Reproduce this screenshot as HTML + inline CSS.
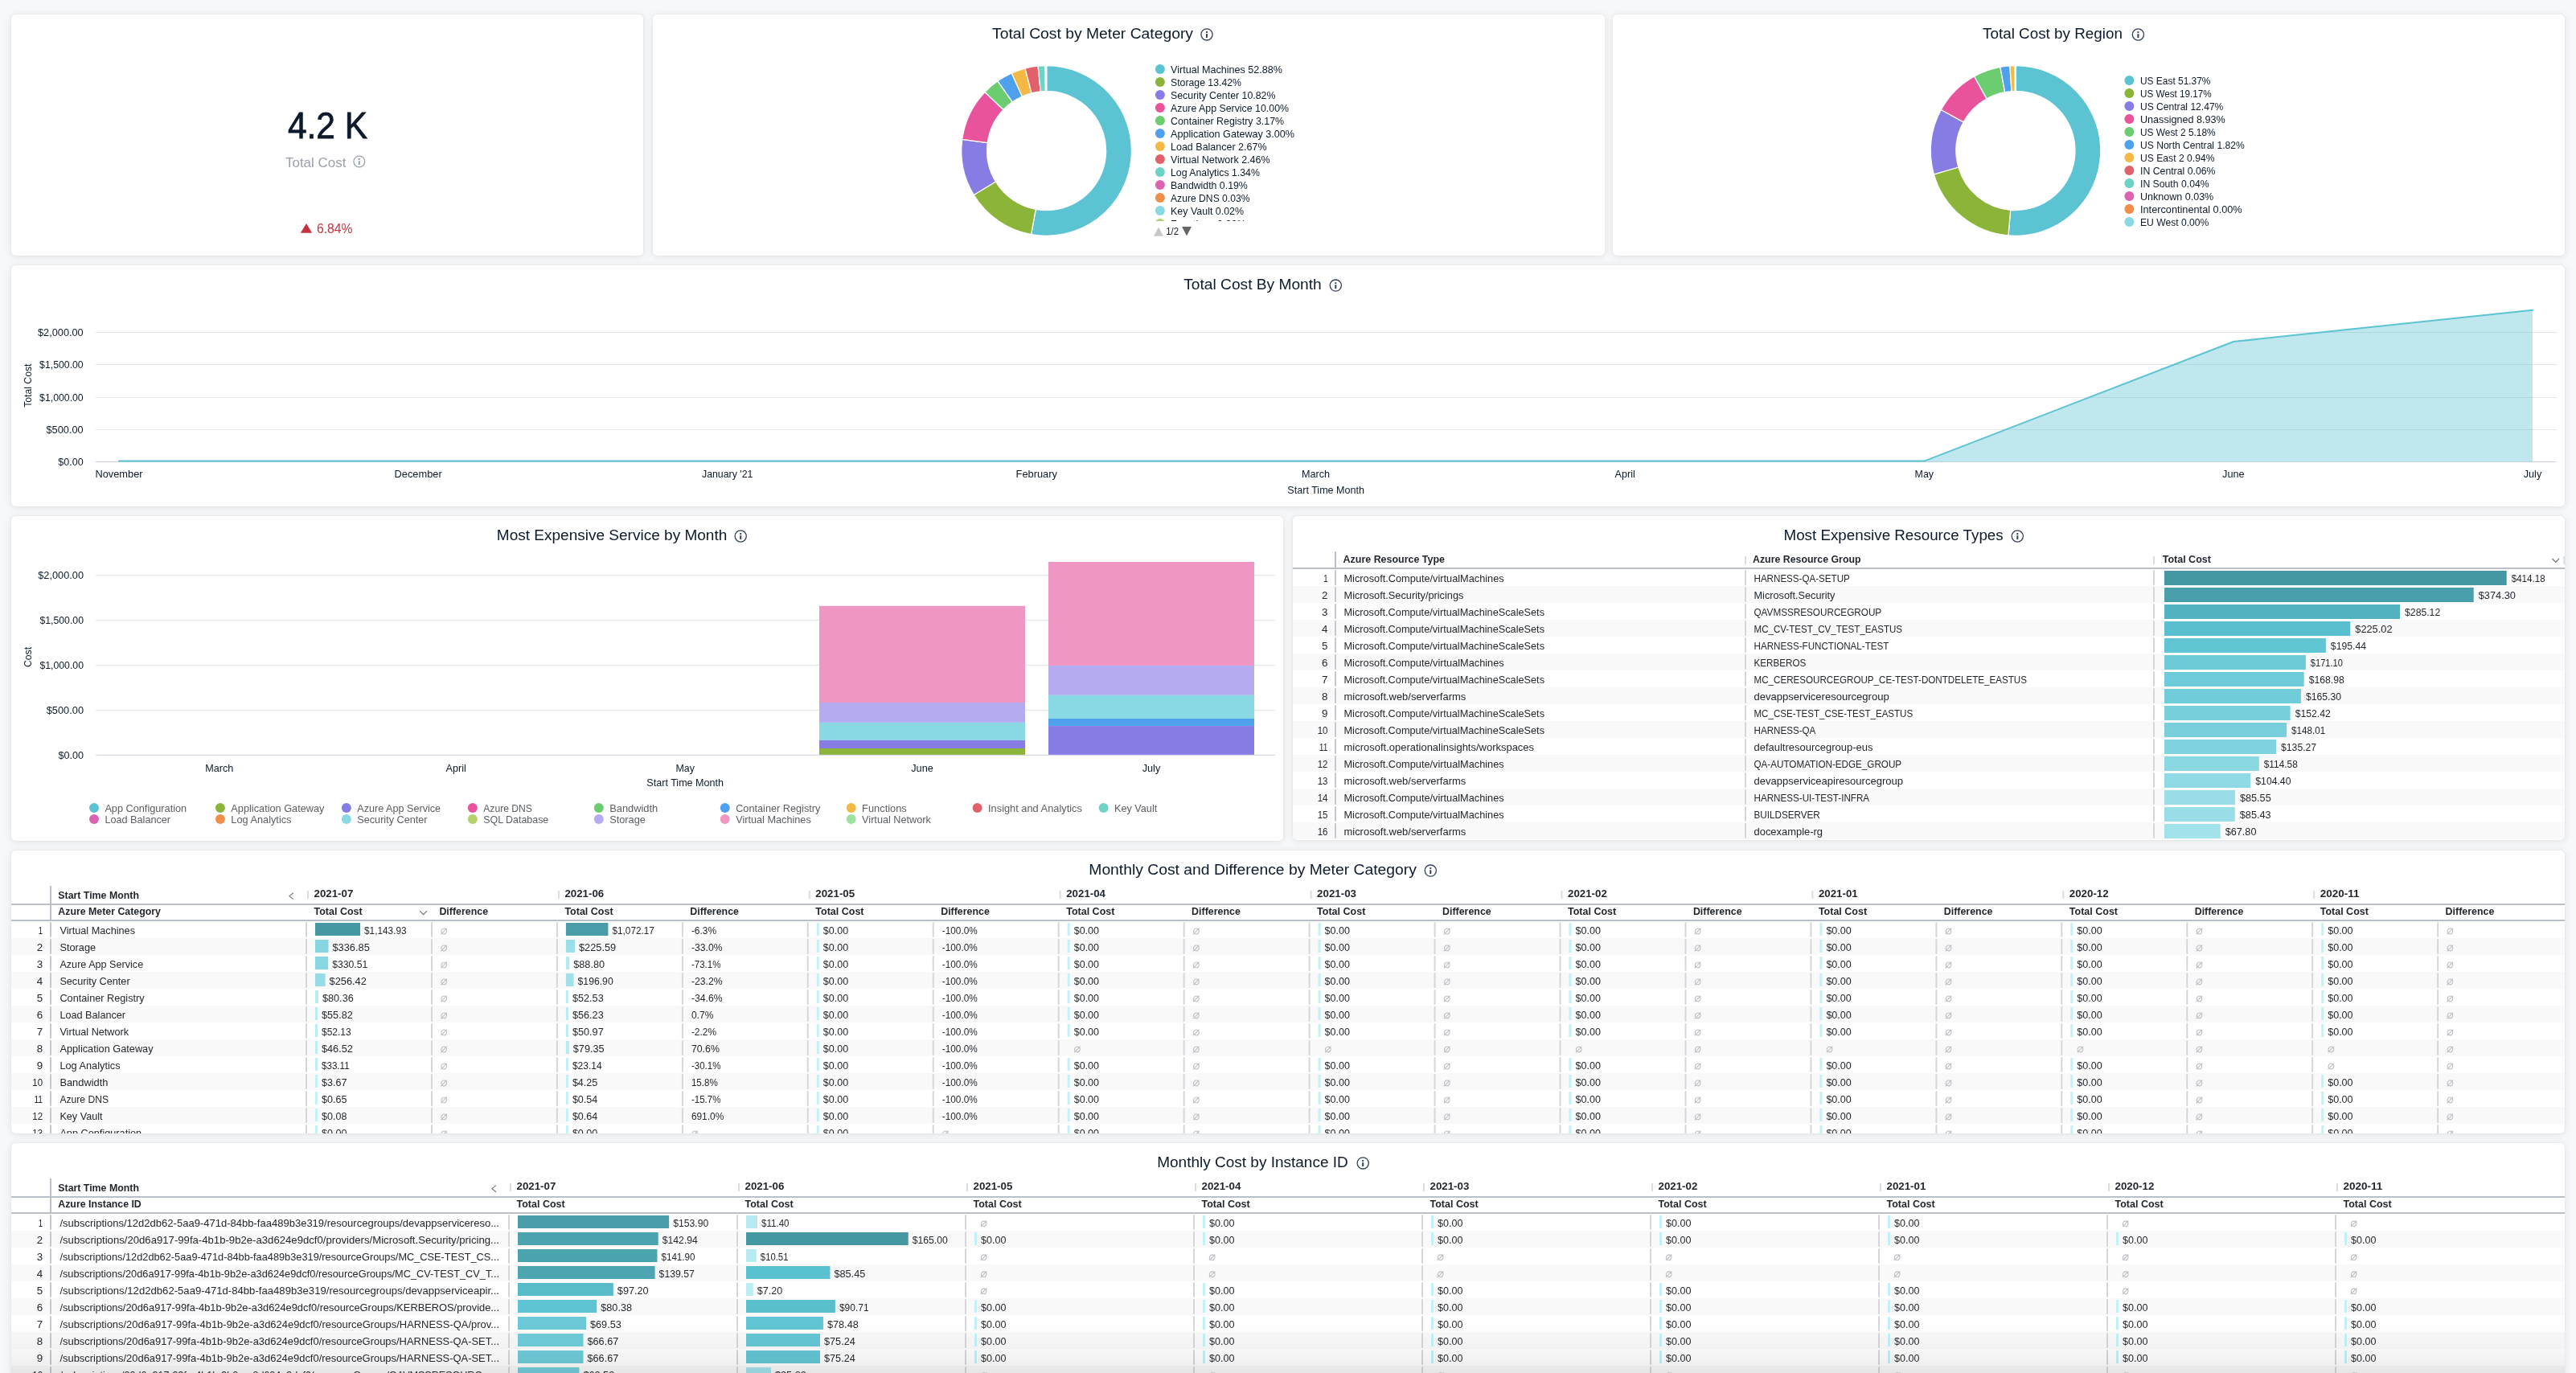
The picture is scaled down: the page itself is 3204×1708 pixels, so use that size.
<!DOCTYPE html><html><head><meta charset="utf-8"><style>html,body{margin:0;padding:0;}body{width:3204px;height:1708px;overflow:hidden;background:#f7f8fa;position:relative;font-family:"Liberation Sans", sans-serif;}.c{position:absolute;background:#fff;border-radius:5px;overflow:hidden;box-shadow:0 0 1px rgba(20,30,45,0.16),0 1px 10px rgba(25,35,50,0.11);}.c svg{position:absolute;left:0;top:0;will-change:transform;}text{font-family:"Liberation Sans", sans-serif;}</style></head><body><div class="c" style="left:14px;top:18px;width:786px;height:300px"><svg width="786" height="300" viewBox="14 18 786 300"><text x="357.90" y="172.20" font-size="45.5" fill="#0d1a2b" textLength="99.2" lengthAdjust="spacingAndGlyphs" stroke="#0d1a2b" stroke-width="0.8">4.2 K</text><text x="355.00" y="207.50" font-size="16.2" fill="#9aa1ab" textLength="75.4" lengthAdjust="spacingAndGlyphs">Total Cost</text><circle cx="446.80" cy="201.00" r="6.9" stroke="#9aa1ab" stroke-width="1.3" fill="none"/><rect x="445.80" y="197.10" width="2" height="1.9" fill="#9aa1ab"/><rect x="445.80" y="200.20" width="2" height="4.8" fill="#9aa1ab"/><path d="M373.8,289.7 L388.2,289.7 L381,278 Z" fill="#c3343f"/><text x="394.00" y="289.70" font-size="16" fill="#c3343f" textLength="44.6" lengthAdjust="spacingAndGlyphs">6.84%</text></svg></div><div class="c" style="left:812px;top:18px;width:1184px;height:300px"><svg width="1184" height="300" viewBox="812 18 1184 300"><text x="1234.00" y="48.00" font-size="18.3" fill="#0d1a2b" textLength="250" lengthAdjust="spacingAndGlyphs">Total Cost by Meter Category</text><circle cx="1501.00" cy="42.90" r="7.1" stroke="#344056" stroke-width="1.3" fill="none"/><rect x="1500.00" y="39.00" width="2" height="1.9" fill="#344056"/><rect x="1500.00" y="42.10" width="2" height="4.8" fill="#344056"/><path d="M1301.60,81.70 A105.8,105.8 0 1 1 1282.56,291.57 L1288.28,260.29 A74.0,74.0 0 1 0 1301.60,113.50 Z" fill="#5bc3d2" stroke="#fff" stroke-width="1.3" stroke-linejoin="bevel"/><path d="M1282.56,291.57 A105.8,105.8 0 0 1 1211.22,242.50 L1238.38,225.97 A74.0,74.0 0 0 0 1288.28,260.29 Z" fill="#8bb438" stroke="#fff" stroke-width="1.3" stroke-linejoin="bevel"/><path d="M1211.22,242.50 A105.8,105.8 0 0 1 1196.74,173.45 L1228.26,177.67 A74.0,74.0 0 0 0 1238.38,225.97 Z" fill="#877be4" stroke="#fff" stroke-width="1.3" stroke-linejoin="bevel"/><path d="M1196.74,173.45 A105.8,105.8 0 0 1 1225.02,114.50 L1248.04,136.44 A74.0,74.0 0 0 0 1228.26,177.67 Z" fill="#e8539b" stroke="#fff" stroke-width="1.3" stroke-linejoin="bevel"/><path d="M1225.02,114.50 A105.8,105.8 0 0 1 1240.98,100.79 L1259.20,126.85 A74.0,74.0 0 0 0 1248.04,136.44 Z" fill="#6bcc70" stroke="#fff" stroke-width="1.3" stroke-linejoin="bevel"/><path d="M1240.98,100.79 A105.8,105.8 0 0 1 1258.30,90.96 L1271.32,119.98 A74.0,74.0 0 0 0 1259.20,126.85 Z" fill="#4fa1ee" stroke="#fff" stroke-width="1.3" stroke-linejoin="bevel"/><path d="M1258.30,90.96 A105.8,105.8 0 0 1 1275.03,85.09 L1283.02,115.87 A74.0,74.0 0 0 0 1271.32,119.98 Z" fill="#f4b944" stroke="#fff" stroke-width="1.3" stroke-linejoin="bevel"/><path d="M1275.03,85.09 A105.8,105.8 0 0 1 1291.11,82.22 L1294.27,113.86 A74.0,74.0 0 0 0 1283.02,115.87 Z" fill="#e0616a" stroke="#fff" stroke-width="1.3" stroke-linejoin="bevel"/><path d="M1291.11,82.22 A105.8,105.8 0 0 1 1300.00,81.71 L1300.48,113.51 A74.0,74.0 0 0 0 1294.27,113.86 Z" fill="#6cd3c5" stroke="#fff" stroke-width="1.3" stroke-linejoin="bevel"/><path d="M1300.00,81.71 A105.8,105.8 0 0 1 1301.27,81.70 L1301.37,113.50 A74.0,74.0 0 0 0 1300.48,113.51 Z" fill="#da64b1" stroke="#fff" stroke-width="1.3" stroke-linejoin="bevel"/><path d="M1301.27,81.70 A105.8,105.8 0 0 1 1301.47,81.70 L1301.51,113.50 A74.0,74.0 0 0 0 1301.37,113.50 Z" fill="#f08e4a" stroke="#fff" stroke-width="1.3" stroke-linejoin="bevel"/><path d="M1301.47,81.70 A105.8,105.8 0 0 1 1301.60,81.70 L1301.60,113.50 A74.0,74.0 0 0 0 1301.51,113.50 Z" fill="#89d9e4" stroke="#fff" stroke-width="1.3" stroke-linejoin="bevel"/><defs><clipPath id="lg2"><rect x="1420" y="60" width="400" height="215"/></clipPath></defs><g clip-path="url(#lg2)"><circle cx="1442.9" cy="86" r="6" fill="#5bc3d2"/><text x="1456.00" y="90.80" font-size="12.4" fill="#0d1a2b" textLength="138.92" lengthAdjust="spacingAndGlyphs">Virtual Machines 52.88%</text><circle cx="1442.9" cy="102" r="6" fill="#8bb438"/><text x="1456.00" y="106.80" font-size="12.4" fill="#0d1a2b" textLength="87.98" lengthAdjust="spacingAndGlyphs">Storage 13.42%</text><circle cx="1442.9" cy="118" r="6" fill="#877be4"/><text x="1456.00" y="122.80" font-size="12.4" fill="#0d1a2b" textLength="130.45" lengthAdjust="spacingAndGlyphs">Security Center 10.82%</text><circle cx="1442.9" cy="134" r="6" fill="#e8539b"/><text x="1456.00" y="138.80" font-size="12.4" fill="#0d1a2b" textLength="147.0" lengthAdjust="spacingAndGlyphs">Azure App Service 10.00%</text><circle cx="1442.9" cy="150" r="6" fill="#6bcc70"/><text x="1456.00" y="154.80" font-size="12.4" fill="#0d1a2b" textLength="141.05" lengthAdjust="spacingAndGlyphs">Container Registry 3.17%</text><circle cx="1442.9" cy="166" r="6" fill="#4fa1ee"/><text x="1456.00" y="170.80" font-size="12.4" fill="#0d1a2b" textLength="154.05" lengthAdjust="spacingAndGlyphs">Application Gateway 3.00%</text><circle cx="1442.9" cy="182" r="6" fill="#f4b944"/><text x="1456.00" y="186.80" font-size="12.4" fill="#0d1a2b" textLength="119.57" lengthAdjust="spacingAndGlyphs">Load Balancer 2.67%</text><circle cx="1442.9" cy="198" r="6" fill="#e0616a"/><text x="1456.00" y="202.80" font-size="12.4" fill="#0d1a2b" textLength="123.65" lengthAdjust="spacingAndGlyphs">Virtual Network 2.46%</text><circle cx="1442.9" cy="214" r="6" fill="#6cd3c5"/><text x="1456.00" y="218.80" font-size="12.4" fill="#0d1a2b" textLength="110.93" lengthAdjust="spacingAndGlyphs">Log Analytics 1.34%</text><circle cx="1442.9" cy="230" r="6" fill="#da64b1"/><text x="1456.00" y="234.80" font-size="12.4" fill="#0d1a2b" textLength="95.77" lengthAdjust="spacingAndGlyphs">Bandwidth 0.19%</text><circle cx="1442.9" cy="246" r="6" fill="#f08e4a"/><text x="1456.00" y="250.80" font-size="12.4" fill="#0d1a2b" textLength="98.53" lengthAdjust="spacingAndGlyphs">Azure DNS 0.03%</text><circle cx="1442.9" cy="262" r="6" fill="#89d9e4"/><text x="1456.00" y="266.80" font-size="12.4" fill="#0d1a2b" textLength="91.13" lengthAdjust="spacingAndGlyphs">Key Vault 0.02%</text><circle cx="1442.9" cy="278" r="6" fill="#b4d16d"/><text x="1456.00" y="282.80" font-size="12.4" fill="#0d1a2b" textLength="93.58" lengthAdjust="spacingAndGlyphs">Functions 0.00%</text></g><path d="M1435,293.7 L1446.9,293.7 L1441,282.4 Z" fill="#c8c8c8"/><text x="1450.20" y="291.70" font-size="12.4" fill="#0d1a2b" textLength="15.79" lengthAdjust="spacingAndGlyphs">1/2</text><path d="M1470.1,281.9 L1482,281.9 L1476,293.5 Z" fill="#666666"/></svg></div><div class="c" style="left:2006px;top:18px;width:1184px;height:300px"><svg width="1184" height="300" viewBox="2006 18 1184 300"><text x="2466.10" y="47.80" font-size="18.3" fill="#0d1a2b" textLength="173.8" lengthAdjust="spacingAndGlyphs">Total Cost by Region</text><circle cx="2659.40" cy="43.00" r="7.1" stroke="#344056" stroke-width="1.3" fill="none"/><rect x="2658.40" y="39.10" width="2" height="1.9" fill="#344056"/><rect x="2658.40" y="42.20" width="2" height="4.8" fill="#344056"/><path d="M2507.00,81.70 A105.8,105.8 0 1 1 2497.94,292.91 L2500.66,261.23 A74.0,74.0 0 1 0 2507.00,113.50 Z" fill="#5bc3d2" stroke="#fff" stroke-width="1.3" stroke-linejoin="bevel"/><path d="M2497.94,292.91 A105.8,105.8 0 0 1 2405.34,216.81 L2435.90,208.00 A74.0,74.0 0 0 0 2500.66,261.23 Z" fill="#8bb438" stroke="#fff" stroke-width="1.3" stroke-linejoin="bevel"/><path d="M2405.34,216.81 A105.8,105.8 0 0 1 2414.29,136.52 L2442.16,151.84 A74.0,74.0 0 0 0 2435.90,208.00 Z" fill="#877be4" stroke="#fff" stroke-width="1.3" stroke-linejoin="bevel"/><path d="M2414.29,136.52 A105.8,105.8 0 0 1 2455.63,95.01 L2471.07,122.81 A74.0,74.0 0 0 0 2442.16,151.84 Z" fill="#e8539b" stroke="#fff" stroke-width="1.3" stroke-linejoin="bevel"/><path d="M2455.63,95.01 A105.8,105.8 0 0 1 2487.90,83.44 L2493.64,114.72 A74.0,74.0 0 0 0 2471.07,122.81 Z" fill="#6bcc70" stroke="#fff" stroke-width="1.3" stroke-linejoin="bevel"/><path d="M2487.90,83.44 A105.8,105.8 0 0 1 2499.89,81.94 L2502.03,113.67 A74.0,74.0 0 0 0 2493.64,114.72 Z" fill="#4fa1ee" stroke="#fff" stroke-width="1.3" stroke-linejoin="bevel"/><path d="M2499.89,81.94 A105.8,105.8 0 0 1 2506.14,81.70 L2506.40,113.50 A74.0,74.0 0 0 0 2502.03,113.67 Z" fill="#f4b944" stroke="#fff" stroke-width="1.3" stroke-linejoin="bevel"/><path d="M2506.14,81.70 A105.8,105.8 0 0 1 2506.53,81.70 L2506.67,113.50 A74.0,74.0 0 0 0 2506.40,113.50 Z" fill="#e0616a" stroke="#fff" stroke-width="1.3" stroke-linejoin="bevel"/><path d="M2506.53,81.70 A105.8,105.8 0 0 1 2506.80,81.70 L2506.86,113.50 A74.0,74.0 0 0 0 2506.67,113.50 Z" fill="#6cd3c5" stroke="#fff" stroke-width="1.3" stroke-linejoin="bevel"/><path d="M2506.80,81.70 A105.8,105.8 0 0 1 2507.00,81.70 L2507.00,113.50 A74.0,74.0 0 0 0 2506.86,113.50 Z" fill="#da64b1" stroke="#fff" stroke-width="1.3" stroke-linejoin="bevel"/><circle cx="2648.4" cy="100" r="6" fill="#5bc3d2"/><text x="2662.00" y="104.80" font-size="12.4" fill="#0d1a2b" textLength="87.48" lengthAdjust="spacingAndGlyphs">US East 51.37%</text><circle cx="2648.4" cy="116" r="6" fill="#8bb438"/><text x="2662.00" y="120.80" font-size="12.4" fill="#0d1a2b" textLength="88.6" lengthAdjust="spacingAndGlyphs">US West 19.17%</text><circle cx="2648.4" cy="132" r="6" fill="#877be4"/><text x="2662.00" y="136.80" font-size="12.4" fill="#0d1a2b" textLength="103.35" lengthAdjust="spacingAndGlyphs">US Central 12.47%</text><circle cx="2648.4" cy="148" r="6" fill="#e8539b"/><text x="2662.00" y="152.80" font-size="12.4" fill="#0d1a2b" textLength="105.76" lengthAdjust="spacingAndGlyphs">Unassigned 8.93%</text><circle cx="2648.4" cy="164" r="6" fill="#6bcc70"/><text x="2662.00" y="168.80" font-size="12.4" fill="#0d1a2b" textLength="93.6" lengthAdjust="spacingAndGlyphs">US West 2 5.18%</text><circle cx="2648.4" cy="180" r="6" fill="#4fa1ee"/><text x="2662.00" y="184.80" font-size="12.4" fill="#0d1a2b" textLength="129.69" lengthAdjust="spacingAndGlyphs">US North Central 1.82%</text><circle cx="2648.4" cy="196" r="6" fill="#f4b944"/><text x="2662.00" y="200.80" font-size="12.4" fill="#0d1a2b" textLength="92.47" lengthAdjust="spacingAndGlyphs">US East 2 0.94%</text><circle cx="2648.4" cy="212" r="6" fill="#e0616a"/><text x="2662.00" y="216.80" font-size="12.4" fill="#0d1a2b" textLength="93.48" lengthAdjust="spacingAndGlyphs">IN Central 0.06%</text><circle cx="2648.4" cy="228" r="6" fill="#6cd3c5"/><text x="2662.00" y="232.80" font-size="12.4" fill="#0d1a2b" textLength="85.59" lengthAdjust="spacingAndGlyphs">IN South 0.04%</text><circle cx="2648.4" cy="244" r="6" fill="#da64b1"/><text x="2662.00" y="248.80" font-size="12.4" fill="#0d1a2b" textLength="91.26" lengthAdjust="spacingAndGlyphs">Unknown 0.03%</text><circle cx="2648.4" cy="260" r="6" fill="#f08e4a"/><text x="2662.00" y="264.80" font-size="12.4" fill="#0d1a2b" textLength="126.68" lengthAdjust="spacingAndGlyphs">Intercontinental 0.00%</text><circle cx="2648.4" cy="276" r="6" fill="#89d9e4"/><text x="2662.00" y="280.80" font-size="12.4" fill="#0d1a2b" textLength="85.37" lengthAdjust="spacingAndGlyphs">EU West 0.00%</text></svg></div><div class="c" style="left:14px;top:330px;width:3176px;height:300px"><svg width="3176" height="300" viewBox="14 330 3176 300"><text x="1472.30" y="360.00" font-size="18.3" fill="#0d1a2b" textLength="171.4" lengthAdjust="spacingAndGlyphs">Total Cost By Month</text><circle cx="1661.30" cy="355.10" r="7.1" stroke="#344056" stroke-width="1.3" fill="none"/><rect x="1660.30" y="351.20" width="2" height="1.9" fill="#344056"/><rect x="1660.30" y="354.30" width="2" height="4.8" fill="#344056"/><text x="103.70" y="578.80" font-size="12.4" fill="#0d1a2b" text-anchor="end" textLength="31.38" lengthAdjust="spacingAndGlyphs">$0.00</text><rect x="118.50" y="534.00" width="3061.50" height="1.00" fill="#e4e5e7"/><text x="103.70" y="538.80" font-size="12.4" fill="#0d1a2b" text-anchor="end" textLength="46.25" lengthAdjust="spacingAndGlyphs">$500.00</text><rect x="118.50" y="494.00" width="3061.50" height="1.00" fill="#e4e5e7"/><text x="103.70" y="498.80" font-size="12.4" fill="#0d1a2b" text-anchor="end" textLength="54.6" lengthAdjust="spacingAndGlyphs">$1,000.00</text><rect x="118.50" y="453.00" width="3061.50" height="1.00" fill="#e4e5e7"/><text x="103.70" y="457.80" font-size="12.4" fill="#0d1a2b" text-anchor="end" textLength="54.6" lengthAdjust="spacingAndGlyphs">$1,500.00</text><rect x="118.50" y="413.00" width="3061.50" height="1.00" fill="#e4e5e7"/><text x="103.70" y="417.80" font-size="12.4" fill="#0d1a2b" text-anchor="end" textLength="56.71" lengthAdjust="spacingAndGlyphs">$2,000.00</text><text x="0" y="0" font-size="12.2" fill="#0d1a2b" text-anchor="middle" transform="translate(38.8,479.7) rotate(-90)">Total Cost</text><text x="148.00" y="594.00" font-size="12.4" fill="#0d1a2b" text-anchor="middle" textLength="59.16" lengthAdjust="spacingAndGlyphs">November</text><text x="520.15" y="594.00" font-size="12.4" fill="#0d1a2b" text-anchor="middle" textLength="59.16" lengthAdjust="spacingAndGlyphs">December</text><text x="904.70" y="594.00" font-size="12.4" fill="#0d1a2b" text-anchor="middle" textLength="63.44" lengthAdjust="spacingAndGlyphs">January &#x27;21</text><text x="1289.26" y="594.00" font-size="12.4" fill="#0d1a2b" text-anchor="middle" textLength="51.34" lengthAdjust="spacingAndGlyphs">February</text><text x="1636.60" y="594.00" font-size="12.4" fill="#0d1a2b" text-anchor="middle" textLength="35.08" lengthAdjust="spacingAndGlyphs">March</text><text x="2021.15" y="594.00" font-size="12.4" fill="#0d1a2b" text-anchor="middle" textLength="25.17" lengthAdjust="spacingAndGlyphs">April</text><text x="2393.30" y="594.00" font-size="12.4" fill="#0d1a2b" text-anchor="middle" textLength="23.48" lengthAdjust="spacingAndGlyphs">May</text><text x="2777.85" y="594.00" font-size="12.4" fill="#0d1a2b" text-anchor="middle" textLength="27.59" lengthAdjust="spacingAndGlyphs">June</text><text x="3150.00" y="594.00" font-size="12.4" fill="#0d1a2b" text-anchor="middle" textLength="22.5" lengthAdjust="spacingAndGlyphs">July</text><text x="1649.20" y="613.90" font-size="12.4" fill="#0d1a2b" text-anchor="middle" textLength="95.63" lengthAdjust="spacingAndGlyphs">Start Time Month</text><rect x="118.90" y="574.00" width="3060.10" height="1.00" fill="#cad1e4"/><path d="M2393.30,574.3 L2778,425 L3150,385.8 L3150,574.3 Z" fill="#5ec3d1" fill-opacity="0.4"/><path d="M148,573.6 L2393.30,573.6 L2778,425 L3150,385.8" fill="none" stroke="#5bc3d2" stroke-width="2" stroke-linejoin="round" stroke-linecap="round"/></svg></div><div class="c" style="left:14px;top:642px;width:1582px;height:404px"><svg width="1582" height="404" viewBox="14 642 1582 404"><text x="617.80" y="672.10" font-size="18.3" fill="#0d1a2b" textLength="286.5" lengthAdjust="spacingAndGlyphs">Most Expensive Service by Month</text><circle cx="921.20" cy="667.00" r="7.1" stroke="#344056" stroke-width="1.3" fill="none"/><rect x="920.20" y="663.10" width="2" height="1.9" fill="#344056"/><rect x="920.20" y="666.20" width="2" height="4.8" fill="#344056"/><text x="104.00" y="943.80" font-size="12.4" fill="#0d1a2b" text-anchor="end" textLength="31.38" lengthAdjust="spacingAndGlyphs">$0.00</text><rect x="119.00" y="883.00" width="1467.00" height="1.00" fill="#e4e5e7"/><text x="104.00" y="887.80" font-size="12.4" fill="#0d1a2b" text-anchor="end" textLength="46.25" lengthAdjust="spacingAndGlyphs">$500.00</text><rect x="119.00" y="827.00" width="1467.00" height="1.00" fill="#e4e5e7"/><text x="104.00" y="831.80" font-size="12.4" fill="#0d1a2b" text-anchor="end" textLength="54.6" lengthAdjust="spacingAndGlyphs">$1,000.00</text><rect x="119.00" y="771.00" width="1467.00" height="1.00" fill="#e4e5e7"/><text x="104.00" y="775.80" font-size="12.4" fill="#0d1a2b" text-anchor="end" textLength="54.6" lengthAdjust="spacingAndGlyphs">$1,500.00</text><rect x="119.00" y="715.00" width="1467.00" height="1.00" fill="#e4e5e7"/><text x="104.00" y="719.80" font-size="12.4" fill="#0d1a2b" text-anchor="end" textLength="56.71" lengthAdjust="spacingAndGlyphs">$2,000.00</text><text x="0" y="0" font-size="12.2" fill="#0d1a2b" text-anchor="middle" transform="translate(39.1,817.5) rotate(-90)">Cost</text><text x="272.70" y="960.10" font-size="12.4" fill="#0d1a2b" text-anchor="middle" textLength="35.08" lengthAdjust="spacingAndGlyphs">March</text><text x="567.20" y="960.10" font-size="12.4" fill="#0d1a2b" text-anchor="middle" textLength="25.17" lengthAdjust="spacingAndGlyphs">April</text><text x="852.20" y="960.10" font-size="12.4" fill="#0d1a2b" text-anchor="middle" textLength="23.48" lengthAdjust="spacingAndGlyphs">May</text><text x="1147.00" y="960.10" font-size="12.4" fill="#0d1a2b" text-anchor="middle" textLength="27.59" lengthAdjust="spacingAndGlyphs">June</text><text x="1432.00" y="960.10" font-size="12.4" fill="#0d1a2b" text-anchor="middle" textLength="22.5" lengthAdjust="spacingAndGlyphs">July</text><text x="852.20" y="978.10" font-size="12.4" fill="#0d1a2b" text-anchor="middle" textLength="95.63" lengthAdjust="spacingAndGlyphs">Start Time Month</text><rect x="1019.00" y="753.80" width="256.00" height="120.20" fill="#f096c3"/><rect x="1019.00" y="874.00" width="256.00" height="24.90" fill="#b5abf0"/><rect x="1019.00" y="898.90" width="256.00" height="22.00" fill="#89d9e4"/><rect x="1019.00" y="920.90" width="256.00" height="10.10" fill="#877be4"/><rect x="1019.00" y="931.00" width="256.00" height="8.00" fill="#8bb438"/><rect x="1304.00" y="699.00" width="256.00" height="128.90" fill="#f096c3"/><rect x="1304.00" y="827.90" width="256.00" height="36.90" fill="#b5abf0"/><rect x="1304.00" y="864.80" width="256.00" height="29.20" fill="#89d9e4"/><rect x="1304.00" y="894.00" width="256.00" height="9.10" fill="#4fa1ee"/><rect x="1304.00" y="903.10" width="256.00" height="35.90" fill="#877be4"/><rect x="119.00" y="938.80" width="1467.00" height="1.00" fill="#cad1e4"/><circle cx="117.00" cy="1004.9" r="6" fill="#5bc3d2"/><text x="130.40" y="1009.90" font-size="12.4" fill="#5b5e62" textLength="101.75" lengthAdjust="spacingAndGlyphs">App Configuration</text><circle cx="273.95" cy="1004.9" r="6" fill="#8bb438"/><text x="287.35" y="1009.90" font-size="12.4" fill="#5b5e62" textLength="116.16" lengthAdjust="spacingAndGlyphs">Application Gateway</text><circle cx="430.90" cy="1004.9" r="6" fill="#877be4"/><text x="444.30" y="1009.90" font-size="12.4" fill="#5b5e62" textLength="103.77" lengthAdjust="spacingAndGlyphs">Azure App Service</text><circle cx="587.85" cy="1004.9" r="6" fill="#e8539b"/><text x="601.25" y="1009.90" font-size="12.4" fill="#5b5e62" textLength="60.64" lengthAdjust="spacingAndGlyphs">Azure DNS</text><circle cx="744.80" cy="1004.9" r="6" fill="#6bcc70"/><text x="758.20" y="1009.90" font-size="12.4" fill="#5b5e62" textLength="59.98" lengthAdjust="spacingAndGlyphs">Bandwidth</text><circle cx="901.75" cy="1004.9" r="6" fill="#4fa1ee"/><text x="915.15" y="1009.90" font-size="12.4" fill="#5b5e62" textLength="105.27" lengthAdjust="spacingAndGlyphs">Container Registry</text><circle cx="1058.70" cy="1004.9" r="6" fill="#f4b944"/><text x="1072.10" y="1009.90" font-size="12.4" fill="#5b5e62" textLength="55.69" lengthAdjust="spacingAndGlyphs">Functions</text><circle cx="1215.65" cy="1004.9" r="6" fill="#e0616a"/><text x="1229.05" y="1009.90" font-size="12.4" fill="#5b5e62" textLength="116.84" lengthAdjust="spacingAndGlyphs">Insight and Analytics</text><circle cx="1372.60" cy="1004.9" r="6" fill="#6cd3c5"/><text x="1386.00" y="1009.90" font-size="12.4" fill="#5b5e62" textLength="53.24" lengthAdjust="spacingAndGlyphs">Key Vault</text><circle cx="117.00" cy="1018.9" r="6" fill="#da64b1"/><text x="130.40" y="1023.90" font-size="12.4" fill="#5b5e62" textLength="81.68" lengthAdjust="spacingAndGlyphs">Load Balancer</text><circle cx="273.95" cy="1018.9" r="6" fill="#f08e4a"/><text x="287.35" y="1023.90" font-size="12.4" fill="#5b5e62" textLength="75.14" lengthAdjust="spacingAndGlyphs">Log Analytics</text><circle cx="430.90" cy="1018.9" r="6" fill="#89d9e4"/><text x="444.30" y="1023.90" font-size="12.4" fill="#5b5e62" textLength="87.22" lengthAdjust="spacingAndGlyphs">Security Center</text><circle cx="587.85" cy="1018.9" r="6" fill="#b4d16d"/><text x="601.25" y="1023.90" font-size="12.4" fill="#5b5e62" textLength="81.04" lengthAdjust="spacingAndGlyphs">SQL Database</text><circle cx="744.80" cy="1018.9" r="6" fill="#b5abf0"/><text x="758.20" y="1023.90" font-size="12.4" fill="#5b5e62" textLength="44.75" lengthAdjust="spacingAndGlyphs">Storage</text><circle cx="901.75" cy="1018.9" r="6" fill="#f096c3"/><text x="915.15" y="1023.90" font-size="12.4" fill="#5b5e62" textLength="93.6" lengthAdjust="spacingAndGlyphs">Virtual Machines</text><circle cx="1058.70" cy="1018.9" r="6" fill="#9de2a0"/><text x="1072.10" y="1023.90" font-size="12.4" fill="#5b5e62" textLength="85.76" lengthAdjust="spacingAndGlyphs">Virtual Network</text></svg></div><div class="c" style="left:1608px;top:642px;width:1582px;height:403px"><svg width="1582" height="403" viewBox="1608 642 1582 403"><text x="2218.50" y="672.10" font-size="18.3" fill="#0d1a2b" textLength="273.2" lengthAdjust="spacingAndGlyphs">Most Expensive Resource Types</text><circle cx="2509.30" cy="667.00" r="7.1" stroke="#344056" stroke-width="1.3" fill="none"/><rect x="2508.30" y="663.10" width="2" height="1.9" fill="#344056"/><rect x="2508.30" y="666.20" width="2" height="4.8" fill="#344056"/><rect x="1608.00" y="729.00" width="1582.00" height="21.00" fill="#f9f9fa"/><rect x="1608.00" y="771.00" width="1582.00" height="21.00" fill="#f9f9fa"/><rect x="1608.00" y="813.00" width="1582.00" height="21.00" fill="#f9f9fa"/><rect x="1608.00" y="855.00" width="1582.00" height="21.00" fill="#f9f9fa"/><rect x="1608.00" y="897.00" width="1582.00" height="21.00" fill="#f9f9fa"/><rect x="1608.00" y="939.00" width="1582.00" height="21.00" fill="#f9f9fa"/><rect x="1608.00" y="981.00" width="1582.00" height="21.00" fill="#f9f9fa"/><rect x="1608.00" y="1023.00" width="1582.00" height="21.00" fill="#f9f9fa"/><rect x="1660.00" y="686.00" width="2.00" height="22.00" fill="#b9c0c7"/><rect x="1608.00" y="706.00" width="1582.00" height="2.00" fill="#b9c0c7"/><text x="1670.60" y="699.80" font-size="12.2" font-weight="700" fill="#1f252b" textLength="126.36" lengthAdjust="spacingAndGlyphs">Azure Resource Type</text><text x="2180.00" y="699.80" font-size="12.2" font-weight="700" fill="#1f252b" textLength="134.58" lengthAdjust="spacingAndGlyphs">Azure Resource Group</text><text x="2689.70" y="699.80" font-size="12.2" font-weight="700" fill="#1f252b" textLength="60.24" lengthAdjust="spacingAndGlyphs">Total Cost</text><rect x="2170.00" y="692.00" width="2.00" height="10.00" fill="#d9dde1"/><rect x="2678.00" y="692.00" width="2.00" height="10.00" fill="#d9dde1"/><rect x="3188.30" y="692.00" width="2.00" height="10.00" fill="#d9dde1"/><path d="M3174.5,695 L3178.7,699.4 L3182.9,695" fill="none" stroke="#6b7178" stroke-width="1.1"/><text x="1651.50" y="723.80" font-size="12.4" fill="#23282d" text-anchor="end" textLength="5.33" lengthAdjust="spacingAndGlyphs">1</text><rect x="1660.00" y="709.00" width="2.00" height="19.00" fill="#c3c9cf" rx="1"/><rect x="2170.00" y="709.00" width="2.00" height="19.00" fill="#d3d7dc" rx="1"/><rect x="2678.00" y="709.00" width="2.00" height="19.00" fill="#d3d7dc" rx="1"/><text x="1671.50" y="723.80" font-size="12.4" fill="#23282d" textLength="199.16" lengthAdjust="spacingAndGlyphs">Microsoft.Compute/virtualMachines</text><text x="2181.50" y="723.80" font-size="12.4" fill="#23282d" textLength="119.29" lengthAdjust="spacingAndGlyphs">HARNESS-QA-SETUP</text><rect x="2692.00" y="710.00" width="425.69" height="18.00" fill="#4597a2"/><text x="3123.69" y="723.80" font-size="12.4" fill="#23282d" textLength="42.04" lengthAdjust="spacingAndGlyphs">$414.18</text><text x="1651.50" y="744.80" font-size="12.4" fill="#23282d" text-anchor="end" textLength="7.44" lengthAdjust="spacingAndGlyphs">2</text><rect x="1660.00" y="730.00" width="2.00" height="19.00" fill="#c3c9cf" rx="1"/><rect x="2170.00" y="730.00" width="2.00" height="19.00" fill="#d3d7dc" rx="1"/><rect x="2678.00" y="730.00" width="2.00" height="19.00" fill="#d3d7dc" rx="1"/><text x="1671.50" y="744.80" font-size="12.4" fill="#23282d" textLength="148.92" lengthAdjust="spacingAndGlyphs">Microsoft.Security/pricings</text><text x="2181.50" y="744.80" font-size="12.4" fill="#23282d" textLength="100.96" lengthAdjust="spacingAndGlyphs">Microsoft.Security</text><rect x="2692.00" y="731.00" width="384.71" height="18.00" fill="#499fab"/><text x="3082.71" y="744.80" font-size="12.4" fill="#23282d" textLength="46.25" lengthAdjust="spacingAndGlyphs">$374.30</text><text x="1651.50" y="765.80" font-size="12.4" fill="#23282d" text-anchor="end" textLength="7.44" lengthAdjust="spacingAndGlyphs">3</text><rect x="1660.00" y="751.00" width="2.00" height="19.00" fill="#c3c9cf" rx="1"/><rect x="2170.00" y="751.00" width="2.00" height="19.00" fill="#d3d7dc" rx="1"/><rect x="2678.00" y="751.00" width="2.00" height="19.00" fill="#d3d7dc" rx="1"/><text x="1671.50" y="765.80" font-size="12.4" fill="#23282d" textLength="249.51" lengthAdjust="spacingAndGlyphs">Microsoft.Compute/virtualMachineScaleSets</text><text x="2181.50" y="765.80" font-size="12.4" fill="#23282d" textLength="158.67" lengthAdjust="spacingAndGlyphs">QAVMSSRESOURCEGROUP</text><rect x="2692.00" y="752.00" width="293.05" height="18.00" fill="#53b2c0"/><text x="2991.05" y="765.80" font-size="12.4" fill="#23282d" textLength="44.15" lengthAdjust="spacingAndGlyphs">$285.12</text><text x="1651.50" y="786.80" font-size="12.4" fill="#23282d" text-anchor="end" textLength="7.44" lengthAdjust="spacingAndGlyphs">4</text><rect x="1660.00" y="772.00" width="2.00" height="19.00" fill="#c3c9cf" rx="1"/><rect x="2170.00" y="772.00" width="2.00" height="19.00" fill="#d3d7dc" rx="1"/><rect x="2678.00" y="772.00" width="2.00" height="19.00" fill="#d3d7dc" rx="1"/><text x="1671.50" y="786.80" font-size="12.4" fill="#23282d" textLength="249.51" lengthAdjust="spacingAndGlyphs">Microsoft.Compute/virtualMachineScaleSets</text><text x="2181.50" y="786.80" font-size="12.4" fill="#23282d" textLength="184.52" lengthAdjust="spacingAndGlyphs">MC_CV-TEST_CV_TEST_EASTUS</text><rect x="2692.00" y="773.00" width="231.28" height="18.00" fill="#59bfce"/><text x="2929.28" y="786.80" font-size="12.4" fill="#23282d" textLength="46.25" lengthAdjust="spacingAndGlyphs">$225.02</text><text x="1651.50" y="807.80" font-size="12.4" fill="#23282d" text-anchor="end" textLength="7.44" lengthAdjust="spacingAndGlyphs">5</text><rect x="1660.00" y="793.00" width="2.00" height="19.00" fill="#c3c9cf" rx="1"/><rect x="2170.00" y="793.00" width="2.00" height="19.00" fill="#d3d7dc" rx="1"/><rect x="2678.00" y="793.00" width="2.00" height="19.00" fill="#d3d7dc" rx="1"/><text x="1671.50" y="807.80" font-size="12.4" fill="#23282d" textLength="249.51" lengthAdjust="spacingAndGlyphs">Microsoft.Compute/virtualMachineScaleSets</text><text x="2181.50" y="807.80" font-size="12.4" fill="#23282d" textLength="167.84" lengthAdjust="spacingAndGlyphs">HARNESS-FUNCTIONAL-TEST</text><rect x="2692.00" y="794.00" width="200.87" height="18.00" fill="#61c6d4"/><text x="2898.87" y="807.80" font-size="12.4" fill="#23282d" textLength="44.15" lengthAdjust="spacingAndGlyphs">$195.44</text><text x="1651.50" y="828.80" font-size="12.4" fill="#23282d" text-anchor="end" textLength="7.44" lengthAdjust="spacingAndGlyphs">6</text><rect x="1660.00" y="814.00" width="2.00" height="19.00" fill="#c3c9cf" rx="1"/><rect x="2170.00" y="814.00" width="2.00" height="19.00" fill="#d3d7dc" rx="1"/><rect x="2678.00" y="814.00" width="2.00" height="19.00" fill="#d3d7dc" rx="1"/><text x="1671.50" y="828.80" font-size="12.4" fill="#23282d" textLength="199.16" lengthAdjust="spacingAndGlyphs">Microsoft.Compute/virtualMachines</text><text x="2181.50" y="828.80" font-size="12.4" fill="#23282d" textLength="64.77" lengthAdjust="spacingAndGlyphs">KERBEROS</text><rect x="2692.00" y="815.00" width="175.86" height="18.00" fill="#6dcbd8"/><text x="2873.86" y="828.80" font-size="12.4" fill="#23282d" textLength="39.94" lengthAdjust="spacingAndGlyphs">$171.10</text><text x="1651.50" y="849.80" font-size="12.4" fill="#23282d" text-anchor="end" textLength="7.44" lengthAdjust="spacingAndGlyphs">7</text><rect x="1660.00" y="835.00" width="2.00" height="19.00" fill="#c3c9cf" rx="1"/><rect x="2170.00" y="835.00" width="2.00" height="19.00" fill="#d3d7dc" rx="1"/><rect x="2678.00" y="835.00" width="2.00" height="19.00" fill="#d3d7dc" rx="1"/><text x="1671.50" y="849.80" font-size="12.4" fill="#23282d" textLength="249.51" lengthAdjust="spacingAndGlyphs">Microsoft.Compute/virtualMachineScaleSets</text><text x="2181.50" y="849.80" font-size="12.4" fill="#23282d" textLength="339.46" lengthAdjust="spacingAndGlyphs">MC_CERESOURCEGROUP_CE-TEST-DONTDELETE_EASTUS</text><rect x="2692.00" y="836.00" width="173.68" height="18.00" fill="#6ecbd9"/><text x="2871.68" y="849.80" font-size="12.4" fill="#23282d" textLength="44.15" lengthAdjust="spacingAndGlyphs">$168.98</text><text x="1651.50" y="870.80" font-size="12.4" fill="#23282d" text-anchor="end" textLength="7.44" lengthAdjust="spacingAndGlyphs">8</text><rect x="1660.00" y="856.00" width="2.00" height="19.00" fill="#c3c9cf" rx="1"/><rect x="2170.00" y="856.00" width="2.00" height="19.00" fill="#d3d7dc" rx="1"/><rect x="2678.00" y="856.00" width="2.00" height="19.00" fill="#d3d7dc" rx="1"/><text x="1671.50" y="870.80" font-size="12.4" fill="#23282d" textLength="151.71" lengthAdjust="spacingAndGlyphs">microsoft.web/serverfarms</text><text x="2181.50" y="870.80" font-size="12.4" fill="#23282d" textLength="168.2" lengthAdjust="spacingAndGlyphs">devappserviceresourcegroup</text><rect x="2692.00" y="857.00" width="169.90" height="18.00" fill="#70ccd9"/><text x="2867.90" y="870.80" font-size="12.4" fill="#23282d" textLength="44.15" lengthAdjust="spacingAndGlyphs">$165.30</text><text x="1651.50" y="891.80" font-size="12.4" fill="#23282d" text-anchor="end" textLength="7.44" lengthAdjust="spacingAndGlyphs">9</text><rect x="1660.00" y="877.00" width="2.00" height="19.00" fill="#c3c9cf" rx="1"/><rect x="2170.00" y="877.00" width="2.00" height="19.00" fill="#d3d7dc" rx="1"/><rect x="2678.00" y="877.00" width="2.00" height="19.00" fill="#d3d7dc" rx="1"/><text x="1671.50" y="891.80" font-size="12.4" fill="#23282d" textLength="249.51" lengthAdjust="spacingAndGlyphs">Microsoft.Compute/virtualMachineScaleSets</text><text x="2181.50" y="891.80" font-size="12.4" fill="#23282d" textLength="197.65" lengthAdjust="spacingAndGlyphs">MC_CSE-TEST_CSE-TEST_EASTUS</text><rect x="2692.00" y="878.00" width="156.66" height="18.00" fill="#77cfdc"/><text x="2854.66" y="891.80" font-size="12.4" fill="#23282d" textLength="44.15" lengthAdjust="spacingAndGlyphs">$152.42</text><text x="1651.50" y="912.80" font-size="12.4" fill="#23282d" text-anchor="end" textLength="12.77" lengthAdjust="spacingAndGlyphs">10</text><rect x="1660.00" y="898.00" width="2.00" height="19.00" fill="#c3c9cf" rx="1"/><rect x="2170.00" y="898.00" width="2.00" height="19.00" fill="#d3d7dc" rx="1"/><rect x="2678.00" y="898.00" width="2.00" height="19.00" fill="#d3d7dc" rx="1"/><text x="1671.50" y="912.80" font-size="12.4" fill="#23282d" textLength="249.51" lengthAdjust="spacingAndGlyphs">Microsoft.Compute/virtualMachineScaleSets</text><text x="2181.50" y="912.80" font-size="12.4" fill="#23282d" textLength="76.81" lengthAdjust="spacingAndGlyphs">HARNESS-QA</text><rect x="2692.00" y="899.00" width="152.12" height="18.00" fill="#79d0dc"/><text x="2850.12" y="912.80" font-size="12.4" fill="#23282d" textLength="42.04" lengthAdjust="spacingAndGlyphs">$148.01</text><text x="1651.50" y="933.80" font-size="12.4" fill="#23282d" text-anchor="end" textLength="10.67" lengthAdjust="spacingAndGlyphs">11</text><rect x="1660.00" y="919.00" width="2.00" height="19.00" fill="#c3c9cf" rx="1"/><rect x="2170.00" y="919.00" width="2.00" height="19.00" fill="#d3d7dc" rx="1"/><rect x="2678.00" y="919.00" width="2.00" height="19.00" fill="#d3d7dc" rx="1"/><text x="1671.50" y="933.80" font-size="12.4" fill="#23282d" textLength="236.56" lengthAdjust="spacingAndGlyphs">microsoft.operationalinsights/workspaces</text><text x="2181.50" y="933.80" font-size="12.4" fill="#23282d" textLength="147.9" lengthAdjust="spacingAndGlyphs">defaultresourcegroup-eus</text><rect x="2692.00" y="920.00" width="139.03" height="18.00" fill="#7fd3de"/><text x="2837.03" y="933.80" font-size="12.4" fill="#23282d" textLength="44.15" lengthAdjust="spacingAndGlyphs">$135.27</text><text x="1651.50" y="954.80" font-size="12.4" fill="#23282d" text-anchor="end" textLength="12.77" lengthAdjust="spacingAndGlyphs">12</text><rect x="1660.00" y="940.00" width="2.00" height="19.00" fill="#c3c9cf" rx="1"/><rect x="2170.00" y="940.00" width="2.00" height="19.00" fill="#d3d7dc" rx="1"/><rect x="2678.00" y="940.00" width="2.00" height="19.00" fill="#d3d7dc" rx="1"/><text x="1671.50" y="954.80" font-size="12.4" fill="#23282d" textLength="199.16" lengthAdjust="spacingAndGlyphs">Microsoft.Compute/virtualMachines</text><text x="2181.50" y="954.80" font-size="12.4" fill="#23282d" textLength="183.6" lengthAdjust="spacingAndGlyphs">QA-AUTOMATION-EDGE_GROUP</text><rect x="2692.00" y="941.00" width="117.77" height="18.00" fill="#8ad8e2"/><text x="2815.77" y="954.80" font-size="12.4" fill="#23282d" textLength="42.04" lengthAdjust="spacingAndGlyphs">$114.58</text><text x="1651.50" y="975.80" font-size="12.4" fill="#23282d" text-anchor="end" textLength="12.77" lengthAdjust="spacingAndGlyphs">13</text><rect x="1660.00" y="961.00" width="2.00" height="19.00" fill="#c3c9cf" rx="1"/><rect x="2170.00" y="961.00" width="2.00" height="19.00" fill="#d3d7dc" rx="1"/><rect x="2678.00" y="961.00" width="2.00" height="19.00" fill="#d3d7dc" rx="1"/><text x="1671.50" y="975.80" font-size="12.4" fill="#23282d" textLength="151.71" lengthAdjust="spacingAndGlyphs">microsoft.web/serverfarms</text><text x="2181.50" y="975.80" font-size="12.4" fill="#23282d" textLength="185.6" lengthAdjust="spacingAndGlyphs">devappserviceapiresourcegroup</text><rect x="2692.00" y="962.00" width="107.30" height="18.00" fill="#8fdae4"/><text x="2805.30" y="975.80" font-size="12.4" fill="#23282d" textLength="44.15" lengthAdjust="spacingAndGlyphs">$104.40</text><text x="1651.50" y="996.80" font-size="12.4" fill="#23282d" text-anchor="end" textLength="12.77" lengthAdjust="spacingAndGlyphs">14</text><rect x="1660.00" y="982.00" width="2.00" height="19.00" fill="#c3c9cf" rx="1"/><rect x="2170.00" y="982.00" width="2.00" height="19.00" fill="#d3d7dc" rx="1"/><rect x="2678.00" y="982.00" width="2.00" height="19.00" fill="#d3d7dc" rx="1"/><text x="1671.50" y="996.80" font-size="12.4" fill="#23282d" textLength="199.16" lengthAdjust="spacingAndGlyphs">Microsoft.Compute/virtualMachines</text><text x="2181.50" y="996.80" font-size="12.4" fill="#23282d" textLength="143.62" lengthAdjust="spacingAndGlyphs">HARNESS-UI-TEST-INFRA</text><rect x="2692.00" y="983.00" width="87.93" height="18.00" fill="#99dee7"/><text x="2785.93" y="996.80" font-size="12.4" fill="#23282d" textLength="38.81" lengthAdjust="spacingAndGlyphs">$85.55</text><text x="1651.50" y="1017.80" font-size="12.4" fill="#23282d" text-anchor="end" textLength="12.77" lengthAdjust="spacingAndGlyphs">15</text><rect x="1660.00" y="1003.00" width="2.00" height="19.00" fill="#c3c9cf" rx="1"/><rect x="2170.00" y="1003.00" width="2.00" height="19.00" fill="#d3d7dc" rx="1"/><rect x="2678.00" y="1003.00" width="2.00" height="19.00" fill="#d3d7dc" rx="1"/><text x="1671.50" y="1017.80" font-size="12.4" fill="#23282d" textLength="199.16" lengthAdjust="spacingAndGlyphs">Microsoft.Compute/virtualMachines</text><text x="2181.50" y="1017.80" font-size="12.4" fill="#23282d" textLength="82.26" lengthAdjust="spacingAndGlyphs">BUILDSERVER</text><rect x="2692.00" y="1004.00" width="87.80" height="18.00" fill="#99dee7"/><text x="2785.80" y="1017.80" font-size="12.4" fill="#23282d" textLength="38.81" lengthAdjust="spacingAndGlyphs">$85.43</text><text x="1651.50" y="1038.80" font-size="12.4" fill="#23282d" text-anchor="end" textLength="12.77" lengthAdjust="spacingAndGlyphs">16</text><rect x="1660.00" y="1024.00" width="2.00" height="19.00" fill="#c3c9cf" rx="1"/><rect x="2170.00" y="1024.00" width="2.00" height="19.00" fill="#d3d7dc" rx="1"/><rect x="2678.00" y="1024.00" width="2.00" height="19.00" fill="#d3d7dc" rx="1"/><text x="1671.50" y="1038.80" font-size="12.4" fill="#23282d" textLength="151.71" lengthAdjust="spacingAndGlyphs">microsoft.web/serverfarms</text><text x="2181.50" y="1038.80" font-size="12.4" fill="#23282d" textLength="85.54" lengthAdjust="spacingAndGlyphs">docexample-rg</text><rect x="2692.00" y="1025.00" width="69.68" height="18.00" fill="#a2e2ea"/><text x="2767.68" y="1038.80" font-size="12.4" fill="#23282d" textLength="38.81" lengthAdjust="spacingAndGlyphs">$67.80</text></svg></div><div class="c" style="left:14px;top:1058px;width:3176px;height:352px"><svg width="3176" height="352" viewBox="14 1058 3176 352"><text x="1354.30" y="1088.20" font-size="18.3" fill="#0d1a2b" textLength="407.5" lengthAdjust="spacingAndGlyphs">Monthly Cost and Difference by Meter Category</text><circle cx="1779.30" cy="1083.10" r="7.1" stroke="#344056" stroke-width="1.3" fill="none"/><rect x="1778.30" y="1079.20" width="2" height="1.9" fill="#344056"/><rect x="1778.30" y="1082.30" width="2" height="4.8" fill="#344056"/><rect x="14.00" y="1167.00" width="3176.00" height="21.00" fill="#f9f9fa"/><rect x="14.00" y="1209.00" width="3176.00" height="21.00" fill="#f9f9fa"/><rect x="14.00" y="1251.00" width="3176.00" height="21.00" fill="#f9f9fa"/><rect x="14.00" y="1293.00" width="3176.00" height="21.00" fill="#f9f9fa"/><rect x="14.00" y="1335.00" width="3176.00" height="21.00" fill="#f9f9fa"/><rect x="14.00" y="1377.00" width="3176.00" height="21.00" fill="#f9f9fa"/><rect x="62.00" y="1102.00" width="2.00" height="44.00" fill="#b9c0c7"/><rect x="14.00" y="1124.00" width="3176.00" height="2.00" fill="#b9c0c7"/><rect x="14.00" y="1144.00" width="3176.00" height="2.00" fill="#b9c0c7"/><text x="72.30" y="1118.00" font-size="12.2" font-weight="700" fill="#1f252b" textLength="100.64" lengthAdjust="spacingAndGlyphs">Start Time Month</text><text x="72.30" y="1137.80" font-size="12.2" font-weight="700" fill="#1f252b" textLength="127.63" lengthAdjust="spacingAndGlyphs">Azure Meter Category</text><path d="M364.9,1110.7 L359.9,1114.65 L364.9,1118.6" fill="none" stroke="#6b7178" stroke-width="1.1"/><path d="M522.2,1133.2 L526.6,1137.6 L531,1133.2" fill="none" stroke="#6b7178" stroke-width="1.1"/><rect x="382.00" y="1108.00" width="2.00" height="10.00" fill="#d9dde1"/><text x="390.50" y="1116.00" font-size="12.2" font-weight="700" fill="#1f252b" textLength="48.84" lengthAdjust="spacingAndGlyphs">2021-07</text><text x="390.50" y="1137.80" font-size="12.2" font-weight="700" fill="#1f252b" textLength="60.24" lengthAdjust="spacingAndGlyphs">Total Cost</text><text x="546.40" y="1137.80" font-size="12.2" font-weight="700" fill="#1f252b" textLength="60.69" lengthAdjust="spacingAndGlyphs">Difference</text><rect x="693.90" y="1108.00" width="2.00" height="10.00" fill="#d9dde1"/><text x="702.40" y="1116.00" font-size="12.2" font-weight="700" fill="#1f252b" textLength="48.84" lengthAdjust="spacingAndGlyphs">2021-06</text><text x="702.40" y="1137.80" font-size="12.2" font-weight="700" fill="#1f252b" textLength="60.24" lengthAdjust="spacingAndGlyphs">Total Cost</text><text x="858.30" y="1137.80" font-size="12.2" font-weight="700" fill="#1f252b" textLength="60.69" lengthAdjust="spacingAndGlyphs">Difference</text><rect x="1005.80" y="1108.00" width="2.00" height="10.00" fill="#d9dde1"/><text x="1014.30" y="1116.00" font-size="12.2" font-weight="700" fill="#1f252b" textLength="48.84" lengthAdjust="spacingAndGlyphs">2021-05</text><text x="1014.30" y="1137.80" font-size="12.2" font-weight="700" fill="#1f252b" textLength="60.24" lengthAdjust="spacingAndGlyphs">Total Cost</text><text x="1170.20" y="1137.80" font-size="12.2" font-weight="700" fill="#1f252b" textLength="60.69" lengthAdjust="spacingAndGlyphs">Difference</text><rect x="1317.70" y="1108.00" width="2.00" height="10.00" fill="#d9dde1"/><text x="1326.20" y="1116.00" font-size="12.2" font-weight="700" fill="#1f252b" textLength="48.84" lengthAdjust="spacingAndGlyphs">2021-04</text><text x="1326.20" y="1137.80" font-size="12.2" font-weight="700" fill="#1f252b" textLength="60.24" lengthAdjust="spacingAndGlyphs">Total Cost</text><text x="1482.10" y="1137.80" font-size="12.2" font-weight="700" fill="#1f252b" textLength="60.69" lengthAdjust="spacingAndGlyphs">Difference</text><rect x="1629.60" y="1108.00" width="2.00" height="10.00" fill="#d9dde1"/><text x="1638.10" y="1116.00" font-size="12.2" font-weight="700" fill="#1f252b" textLength="48.84" lengthAdjust="spacingAndGlyphs">2021-03</text><text x="1638.10" y="1137.80" font-size="12.2" font-weight="700" fill="#1f252b" textLength="60.24" lengthAdjust="spacingAndGlyphs">Total Cost</text><text x="1794.00" y="1137.80" font-size="12.2" font-weight="700" fill="#1f252b" textLength="60.69" lengthAdjust="spacingAndGlyphs">Difference</text><rect x="1941.50" y="1108.00" width="2.00" height="10.00" fill="#d9dde1"/><text x="1950.00" y="1116.00" font-size="12.2" font-weight="700" fill="#1f252b" textLength="48.84" lengthAdjust="spacingAndGlyphs">2021-02</text><text x="1950.00" y="1137.80" font-size="12.2" font-weight="700" fill="#1f252b" textLength="60.24" lengthAdjust="spacingAndGlyphs">Total Cost</text><text x="2105.90" y="1137.80" font-size="12.2" font-weight="700" fill="#1f252b" textLength="60.69" lengthAdjust="spacingAndGlyphs">Difference</text><rect x="2253.40" y="1108.00" width="2.00" height="10.00" fill="#d9dde1"/><text x="2261.90" y="1116.00" font-size="12.2" font-weight="700" fill="#1f252b" textLength="48.84" lengthAdjust="spacingAndGlyphs">2021-01</text><text x="2261.90" y="1137.80" font-size="12.2" font-weight="700" fill="#1f252b" textLength="60.24" lengthAdjust="spacingAndGlyphs">Total Cost</text><text x="2417.80" y="1137.80" font-size="12.2" font-weight="700" fill="#1f252b" textLength="60.69" lengthAdjust="spacingAndGlyphs">Difference</text><rect x="2565.30" y="1108.00" width="2.00" height="10.00" fill="#d9dde1"/><text x="2573.80" y="1116.00" font-size="12.2" font-weight="700" fill="#1f252b" textLength="48.84" lengthAdjust="spacingAndGlyphs">2020-12</text><text x="2573.80" y="1137.80" font-size="12.2" font-weight="700" fill="#1f252b" textLength="60.24" lengthAdjust="spacingAndGlyphs">Total Cost</text><text x="2729.70" y="1137.80" font-size="12.2" font-weight="700" fill="#1f252b" textLength="60.69" lengthAdjust="spacingAndGlyphs">Difference</text><rect x="2877.20" y="1108.00" width="2.00" height="10.00" fill="#d9dde1"/><text x="2885.70" y="1116.00" font-size="12.2" font-weight="700" fill="#1f252b" textLength="48.84" lengthAdjust="spacingAndGlyphs">2020-11</text><text x="2885.70" y="1137.80" font-size="12.2" font-weight="700" fill="#1f252b" textLength="60.24" lengthAdjust="spacingAndGlyphs">Total Cost</text><text x="3041.60" y="1137.80" font-size="12.2" font-weight="700" fill="#1f252b" textLength="60.69" lengthAdjust="spacingAndGlyphs">Difference</text><text x="53.10" y="1162.00" font-size="12.4" fill="#23282d" text-anchor="end" textLength="5.33" lengthAdjust="spacingAndGlyphs">1</text><rect x="62.00" y="1147.00" width="2.00" height="19.00" fill="#c3c9cf" rx="1"/><text x="74.40" y="1162.00" font-size="12.4" fill="#23282d" textLength="93.6" lengthAdjust="spacingAndGlyphs">Virtual Machines</text><rect x="380.00" y="1147.00" width="2.00" height="19.00" fill="#d3d7dc" rx="1"/><rect x="536.00" y="1147.00" width="2.00" height="19.00" fill="#d3d7dc" rx="1"/><rect x="392.00" y="1148.00" width="56.05" height="16.00" fill="#4597a2"/><text x="453.05" y="1162.00" font-size="12.4" fill="#23282d" textLength="52.5" lengthAdjust="spacingAndGlyphs">$1,143.93</text><g stroke="#bcbfc3" stroke-width="1.15" fill="none"><ellipse cx="552.20" cy="1158.40" rx="3.2" ry="3.3" transform="rotate(20 552.20 1158.40)"/><line x1="548.30" y1="1162.30" x2="555.90" y2="1154.70"/></g><rect x="691.90" y="1147.00" width="2.00" height="19.00" fill="#d3d7dc" rx="1"/><rect x="847.90" y="1147.00" width="2.00" height="19.00" fill="#d3d7dc" rx="1"/><rect x="703.90" y="1148.00" width="52.54" height="16.00" fill="#489da8"/><text x="761.44" y="1162.00" font-size="12.4" fill="#23282d" textLength="52.5" lengthAdjust="spacingAndGlyphs">$1,072.17</text><text x="859.90" y="1162.00" font-size="12.4" fill="#23282d" textLength="31.18" lengthAdjust="spacingAndGlyphs">-6.3%</text><rect x="1003.80" y="1147.00" width="2.00" height="19.00" fill="#d3d7dc" rx="1"/><rect x="1159.80" y="1147.00" width="2.00" height="19.00" fill="#d3d7dc" rx="1"/><rect x="1015.80" y="1148.00" width="3.00" height="16.00" fill="#c4f1f6"/><text x="1023.80" y="1162.00" font-size="12.4" fill="#23282d" textLength="31.38" lengthAdjust="spacingAndGlyphs">$0.00</text><text x="1171.80" y="1162.00" font-size="12.4" fill="#23282d" textLength="43.95" lengthAdjust="spacingAndGlyphs">-100.0%</text><rect x="1315.70" y="1147.00" width="2.00" height="19.00" fill="#d3d7dc" rx="1"/><rect x="1471.70" y="1147.00" width="2.00" height="19.00" fill="#d3d7dc" rx="1"/><rect x="1327.70" y="1148.00" width="3.00" height="16.00" fill="#c4f1f6"/><text x="1335.70" y="1162.00" font-size="12.4" fill="#23282d" textLength="31.38" lengthAdjust="spacingAndGlyphs">$0.00</text><g stroke="#bcbfc3" stroke-width="1.15" fill="none"><ellipse cx="1487.90" cy="1158.40" rx="3.2" ry="3.3" transform="rotate(20 1487.90 1158.40)"/><line x1="1484.00" y1="1162.30" x2="1491.60" y2="1154.70"/></g><rect x="1627.60" y="1147.00" width="2.00" height="19.00" fill="#d3d7dc" rx="1"/><rect x="1783.60" y="1147.00" width="2.00" height="19.00" fill="#d3d7dc" rx="1"/><rect x="1639.60" y="1148.00" width="3.00" height="16.00" fill="#c4f1f6"/><text x="1647.60" y="1162.00" font-size="12.4" fill="#23282d" textLength="31.38" lengthAdjust="spacingAndGlyphs">$0.00</text><g stroke="#bcbfc3" stroke-width="1.15" fill="none"><ellipse cx="1799.80" cy="1158.40" rx="3.2" ry="3.3" transform="rotate(20 1799.80 1158.40)"/><line x1="1795.90" y1="1162.30" x2="1803.50" y2="1154.70"/></g><rect x="1939.50" y="1147.00" width="2.00" height="19.00" fill="#d3d7dc" rx="1"/><rect x="2095.50" y="1147.00" width="2.00" height="19.00" fill="#d3d7dc" rx="1"/><rect x="1951.50" y="1148.00" width="3.00" height="16.00" fill="#c4f1f6"/><text x="1959.50" y="1162.00" font-size="12.4" fill="#23282d" textLength="31.38" lengthAdjust="spacingAndGlyphs">$0.00</text><g stroke="#bcbfc3" stroke-width="1.15" fill="none"><ellipse cx="2111.70" cy="1158.40" rx="3.2" ry="3.3" transform="rotate(20 2111.70 1158.40)"/><line x1="2107.80" y1="1162.30" x2="2115.40" y2="1154.70"/></g><rect x="2251.40" y="1147.00" width="2.00" height="19.00" fill="#d3d7dc" rx="1"/><rect x="2407.40" y="1147.00" width="2.00" height="19.00" fill="#d3d7dc" rx="1"/><rect x="2263.40" y="1148.00" width="3.00" height="16.00" fill="#c4f1f6"/><text x="2271.40" y="1162.00" font-size="12.4" fill="#23282d" textLength="31.38" lengthAdjust="spacingAndGlyphs">$0.00</text><g stroke="#bcbfc3" stroke-width="1.15" fill="none"><ellipse cx="2423.60" cy="1158.40" rx="3.2" ry="3.3" transform="rotate(20 2423.60 1158.40)"/><line x1="2419.70" y1="1162.30" x2="2427.30" y2="1154.70"/></g><rect x="2563.30" y="1147.00" width="2.00" height="19.00" fill="#d3d7dc" rx="1"/><rect x="2719.30" y="1147.00" width="2.00" height="19.00" fill="#d3d7dc" rx="1"/><rect x="2575.30" y="1148.00" width="3.00" height="16.00" fill="#c4f1f6"/><text x="2583.30" y="1162.00" font-size="12.4" fill="#23282d" textLength="31.38" lengthAdjust="spacingAndGlyphs">$0.00</text><g stroke="#bcbfc3" stroke-width="1.15" fill="none"><ellipse cx="2735.50" cy="1158.40" rx="3.2" ry="3.3" transform="rotate(20 2735.50 1158.40)"/><line x1="2731.60" y1="1162.30" x2="2739.20" y2="1154.70"/></g><rect x="2875.20" y="1147.00" width="2.00" height="19.00" fill="#d3d7dc" rx="1"/><rect x="3031.20" y="1147.00" width="2.00" height="19.00" fill="#d3d7dc" rx="1"/><rect x="2887.20" y="1148.00" width="3.00" height="16.00" fill="#c4f1f6"/><text x="2895.20" y="1162.00" font-size="12.4" fill="#23282d" textLength="31.38" lengthAdjust="spacingAndGlyphs">$0.00</text><g stroke="#bcbfc3" stroke-width="1.15" fill="none"><ellipse cx="3047.40" cy="1158.40" rx="3.2" ry="3.3" transform="rotate(20 3047.40 1158.40)"/><line x1="3043.50" y1="1162.30" x2="3051.10" y2="1154.70"/></g><text x="53.10" y="1183.00" font-size="12.4" fill="#23282d" text-anchor="end" textLength="7.44" lengthAdjust="spacingAndGlyphs">2</text><rect x="62.00" y="1168.00" width="2.00" height="19.00" fill="#c3c9cf" rx="1"/><text x="74.40" y="1183.00" font-size="12.4" fill="#23282d" textLength="44.75" lengthAdjust="spacingAndGlyphs">Storage</text><rect x="380.00" y="1168.00" width="2.00" height="19.00" fill="#d3d7dc" rx="1"/><rect x="536.00" y="1168.00" width="2.00" height="19.00" fill="#d3d7dc" rx="1"/><rect x="392.00" y="1169.00" width="16.51" height="16.00" fill="#86d6e1"/><text x="413.51" y="1183.00" font-size="12.4" fill="#23282d" textLength="46.25" lengthAdjust="spacingAndGlyphs">$336.85</text><g stroke="#bcbfc3" stroke-width="1.15" fill="none"><ellipse cx="552.20" cy="1179.40" rx="3.2" ry="3.3" transform="rotate(20 552.20 1179.40)"/><line x1="548.30" y1="1183.30" x2="555.90" y2="1175.70"/></g><rect x="691.90" y="1168.00" width="2.00" height="19.00" fill="#d3d7dc" rx="1"/><rect x="847.90" y="1168.00" width="2.00" height="19.00" fill="#d3d7dc" rx="1"/><rect x="703.90" y="1169.00" width="11.05" height="16.00" fill="#9bdfe8"/><text x="719.95" y="1183.00" font-size="12.4" fill="#23282d" textLength="46.25" lengthAdjust="spacingAndGlyphs">$225.59</text><text x="859.90" y="1183.00" font-size="12.4" fill="#23282d" textLength="38.62" lengthAdjust="spacingAndGlyphs">-33.0%</text><rect x="1003.80" y="1168.00" width="2.00" height="19.00" fill="#d3d7dc" rx="1"/><rect x="1159.80" y="1168.00" width="2.00" height="19.00" fill="#d3d7dc" rx="1"/><rect x="1015.80" y="1169.00" width="3.00" height="16.00" fill="#c4f1f6"/><text x="1023.80" y="1183.00" font-size="12.4" fill="#23282d" textLength="31.38" lengthAdjust="spacingAndGlyphs">$0.00</text><text x="1171.80" y="1183.00" font-size="12.4" fill="#23282d" textLength="43.95" lengthAdjust="spacingAndGlyphs">-100.0%</text><rect x="1315.70" y="1168.00" width="2.00" height="19.00" fill="#d3d7dc" rx="1"/><rect x="1471.70" y="1168.00" width="2.00" height="19.00" fill="#d3d7dc" rx="1"/><rect x="1327.70" y="1169.00" width="3.00" height="16.00" fill="#c4f1f6"/><text x="1335.70" y="1183.00" font-size="12.4" fill="#23282d" textLength="31.38" lengthAdjust="spacingAndGlyphs">$0.00</text><g stroke="#bcbfc3" stroke-width="1.15" fill="none"><ellipse cx="1487.90" cy="1179.40" rx="3.2" ry="3.3" transform="rotate(20 1487.90 1179.40)"/><line x1="1484.00" y1="1183.30" x2="1491.60" y2="1175.70"/></g><rect x="1627.60" y="1168.00" width="2.00" height="19.00" fill="#d3d7dc" rx="1"/><rect x="1783.60" y="1168.00" width="2.00" height="19.00" fill="#d3d7dc" rx="1"/><rect x="1639.60" y="1169.00" width="3.00" height="16.00" fill="#c4f1f6"/><text x="1647.60" y="1183.00" font-size="12.4" fill="#23282d" textLength="31.38" lengthAdjust="spacingAndGlyphs">$0.00</text><g stroke="#bcbfc3" stroke-width="1.15" fill="none"><ellipse cx="1799.80" cy="1179.40" rx="3.2" ry="3.3" transform="rotate(20 1799.80 1179.40)"/><line x1="1795.90" y1="1183.30" x2="1803.50" y2="1175.70"/></g><rect x="1939.50" y="1168.00" width="2.00" height="19.00" fill="#d3d7dc" rx="1"/><rect x="2095.50" y="1168.00" width="2.00" height="19.00" fill="#d3d7dc" rx="1"/><rect x="1951.50" y="1169.00" width="3.00" height="16.00" fill="#c4f1f6"/><text x="1959.50" y="1183.00" font-size="12.4" fill="#23282d" textLength="31.38" lengthAdjust="spacingAndGlyphs">$0.00</text><g stroke="#bcbfc3" stroke-width="1.15" fill="none"><ellipse cx="2111.70" cy="1179.40" rx="3.2" ry="3.3" transform="rotate(20 2111.70 1179.40)"/><line x1="2107.80" y1="1183.30" x2="2115.40" y2="1175.70"/></g><rect x="2251.40" y="1168.00" width="2.00" height="19.00" fill="#d3d7dc" rx="1"/><rect x="2407.40" y="1168.00" width="2.00" height="19.00" fill="#d3d7dc" rx="1"/><rect x="2263.40" y="1169.00" width="3.00" height="16.00" fill="#c4f1f6"/><text x="2271.40" y="1183.00" font-size="12.4" fill="#23282d" textLength="31.38" lengthAdjust="spacingAndGlyphs">$0.00</text><g stroke="#bcbfc3" stroke-width="1.15" fill="none"><ellipse cx="2423.60" cy="1179.40" rx="3.2" ry="3.3" transform="rotate(20 2423.60 1179.40)"/><line x1="2419.70" y1="1183.30" x2="2427.30" y2="1175.70"/></g><rect x="2563.30" y="1168.00" width="2.00" height="19.00" fill="#d3d7dc" rx="1"/><rect x="2719.30" y="1168.00" width="2.00" height="19.00" fill="#d3d7dc" rx="1"/><rect x="2575.30" y="1169.00" width="3.00" height="16.00" fill="#c4f1f6"/><text x="2583.30" y="1183.00" font-size="12.4" fill="#23282d" textLength="31.38" lengthAdjust="spacingAndGlyphs">$0.00</text><g stroke="#bcbfc3" stroke-width="1.15" fill="none"><ellipse cx="2735.50" cy="1179.40" rx="3.2" ry="3.3" transform="rotate(20 2735.50 1179.40)"/><line x1="2731.60" y1="1183.30" x2="2739.20" y2="1175.70"/></g><rect x="2875.20" y="1168.00" width="2.00" height="19.00" fill="#d3d7dc" rx="1"/><rect x="3031.20" y="1168.00" width="2.00" height="19.00" fill="#d3d7dc" rx="1"/><rect x="2887.20" y="1169.00" width="3.00" height="16.00" fill="#c4f1f6"/><text x="2895.20" y="1183.00" font-size="12.4" fill="#23282d" textLength="31.38" lengthAdjust="spacingAndGlyphs">$0.00</text><g stroke="#bcbfc3" stroke-width="1.15" fill="none"><ellipse cx="3047.40" cy="1179.40" rx="3.2" ry="3.3" transform="rotate(20 3047.40 1179.40)"/><line x1="3043.50" y1="1183.30" x2="3051.10" y2="1175.70"/></g><text x="53.10" y="1204.00" font-size="12.4" fill="#23282d" text-anchor="end" textLength="7.44" lengthAdjust="spacingAndGlyphs">3</text><rect x="62.00" y="1189.00" width="2.00" height="19.00" fill="#c3c9cf" rx="1"/><text x="74.40" y="1204.00" font-size="12.4" fill="#23282d" textLength="103.77" lengthAdjust="spacingAndGlyphs">Azure App Service</text><rect x="380.00" y="1189.00" width="2.00" height="19.00" fill="#d3d7dc" rx="1"/><rect x="536.00" y="1189.00" width="2.00" height="19.00" fill="#d3d7dc" rx="1"/><rect x="392.00" y="1190.00" width="16.19" height="16.00" fill="#87d6e1"/><text x="413.19" y="1204.00" font-size="12.4" fill="#23282d" textLength="44.15" lengthAdjust="spacingAndGlyphs">$330.51</text><g stroke="#bcbfc3" stroke-width="1.15" fill="none"><ellipse cx="552.20" cy="1200.40" rx="3.2" ry="3.3" transform="rotate(20 552.20 1200.40)"/><line x1="548.30" y1="1204.30" x2="555.90" y2="1196.70"/></g><rect x="691.90" y="1189.00" width="2.00" height="19.00" fill="#d3d7dc" rx="1"/><rect x="847.90" y="1189.00" width="2.00" height="19.00" fill="#d3d7dc" rx="1"/><rect x="703.90" y="1190.00" width="4.35" height="16.00" fill="#b4eaf0"/><text x="713.25" y="1204.00" font-size="12.4" fill="#23282d" textLength="38.81" lengthAdjust="spacingAndGlyphs">$88.80</text><text x="859.90" y="1204.00" font-size="12.4" fill="#23282d" textLength="36.52" lengthAdjust="spacingAndGlyphs">-73.1%</text><rect x="1003.80" y="1189.00" width="2.00" height="19.00" fill="#d3d7dc" rx="1"/><rect x="1159.80" y="1189.00" width="2.00" height="19.00" fill="#d3d7dc" rx="1"/><rect x="1015.80" y="1190.00" width="3.00" height="16.00" fill="#c4f1f6"/><text x="1023.80" y="1204.00" font-size="12.4" fill="#23282d" textLength="31.38" lengthAdjust="spacingAndGlyphs">$0.00</text><text x="1171.80" y="1204.00" font-size="12.4" fill="#23282d" textLength="43.95" lengthAdjust="spacingAndGlyphs">-100.0%</text><rect x="1315.70" y="1189.00" width="2.00" height="19.00" fill="#d3d7dc" rx="1"/><rect x="1471.70" y="1189.00" width="2.00" height="19.00" fill="#d3d7dc" rx="1"/><rect x="1327.70" y="1190.00" width="3.00" height="16.00" fill="#c4f1f6"/><text x="1335.70" y="1204.00" font-size="12.4" fill="#23282d" textLength="31.38" lengthAdjust="spacingAndGlyphs">$0.00</text><g stroke="#bcbfc3" stroke-width="1.15" fill="none"><ellipse cx="1487.90" cy="1200.40" rx="3.2" ry="3.3" transform="rotate(20 1487.90 1200.40)"/><line x1="1484.00" y1="1204.30" x2="1491.60" y2="1196.70"/></g><rect x="1627.60" y="1189.00" width="2.00" height="19.00" fill="#d3d7dc" rx="1"/><rect x="1783.60" y="1189.00" width="2.00" height="19.00" fill="#d3d7dc" rx="1"/><rect x="1639.60" y="1190.00" width="3.00" height="16.00" fill="#c4f1f6"/><text x="1647.60" y="1204.00" font-size="12.4" fill="#23282d" textLength="31.38" lengthAdjust="spacingAndGlyphs">$0.00</text><g stroke="#bcbfc3" stroke-width="1.15" fill="none"><ellipse cx="1799.80" cy="1200.40" rx="3.2" ry="3.3" transform="rotate(20 1799.80 1200.40)"/><line x1="1795.90" y1="1204.30" x2="1803.50" y2="1196.70"/></g><rect x="1939.50" y="1189.00" width="2.00" height="19.00" fill="#d3d7dc" rx="1"/><rect x="2095.50" y="1189.00" width="2.00" height="19.00" fill="#d3d7dc" rx="1"/><rect x="1951.50" y="1190.00" width="3.00" height="16.00" fill="#c4f1f6"/><text x="1959.50" y="1204.00" font-size="12.4" fill="#23282d" textLength="31.38" lengthAdjust="spacingAndGlyphs">$0.00</text><g stroke="#bcbfc3" stroke-width="1.15" fill="none"><ellipse cx="2111.70" cy="1200.40" rx="3.2" ry="3.3" transform="rotate(20 2111.70 1200.40)"/><line x1="2107.80" y1="1204.30" x2="2115.40" y2="1196.70"/></g><rect x="2251.40" y="1189.00" width="2.00" height="19.00" fill="#d3d7dc" rx="1"/><rect x="2407.40" y="1189.00" width="2.00" height="19.00" fill="#d3d7dc" rx="1"/><rect x="2263.40" y="1190.00" width="3.00" height="16.00" fill="#c4f1f6"/><text x="2271.40" y="1204.00" font-size="12.4" fill="#23282d" textLength="31.38" lengthAdjust="spacingAndGlyphs">$0.00</text><g stroke="#bcbfc3" stroke-width="1.15" fill="none"><ellipse cx="2423.60" cy="1200.40" rx="3.2" ry="3.3" transform="rotate(20 2423.60 1200.40)"/><line x1="2419.70" y1="1204.30" x2="2427.30" y2="1196.70"/></g><rect x="2563.30" y="1189.00" width="2.00" height="19.00" fill="#d3d7dc" rx="1"/><rect x="2719.30" y="1189.00" width="2.00" height="19.00" fill="#d3d7dc" rx="1"/><rect x="2575.30" y="1190.00" width="3.00" height="16.00" fill="#c4f1f6"/><text x="2583.30" y="1204.00" font-size="12.4" fill="#23282d" textLength="31.38" lengthAdjust="spacingAndGlyphs">$0.00</text><g stroke="#bcbfc3" stroke-width="1.15" fill="none"><ellipse cx="2735.50" cy="1200.40" rx="3.2" ry="3.3" transform="rotate(20 2735.50 1200.40)"/><line x1="2731.60" y1="1204.30" x2="2739.20" y2="1196.70"/></g><rect x="2875.20" y="1189.00" width="2.00" height="19.00" fill="#d3d7dc" rx="1"/><rect x="3031.20" y="1189.00" width="2.00" height="19.00" fill="#d3d7dc" rx="1"/><rect x="2887.20" y="1190.00" width="3.00" height="16.00" fill="#c4f1f6"/><text x="2895.20" y="1204.00" font-size="12.4" fill="#23282d" textLength="31.38" lengthAdjust="spacingAndGlyphs">$0.00</text><g stroke="#bcbfc3" stroke-width="1.15" fill="none"><ellipse cx="3047.40" cy="1200.40" rx="3.2" ry="3.3" transform="rotate(20 3047.40 1200.40)"/><line x1="3043.50" y1="1204.30" x2="3051.10" y2="1196.70"/></g><text x="53.10" y="1225.00" font-size="12.4" fill="#23282d" text-anchor="end" textLength="7.44" lengthAdjust="spacingAndGlyphs">4</text><rect x="62.00" y="1210.00" width="2.00" height="19.00" fill="#c3c9cf" rx="1"/><text x="74.40" y="1225.00" font-size="12.4" fill="#23282d" textLength="87.22" lengthAdjust="spacingAndGlyphs">Security Center</text><rect x="380.00" y="1210.00" width="2.00" height="19.00" fill="#d3d7dc" rx="1"/><rect x="536.00" y="1210.00" width="2.00" height="19.00" fill="#d3d7dc" rx="1"/><rect x="392.00" y="1211.00" width="12.56" height="16.00" fill="#95dce6"/><text x="409.56" y="1225.00" font-size="12.4" fill="#23282d" textLength="46.25" lengthAdjust="spacingAndGlyphs">$256.42</text><g stroke="#bcbfc3" stroke-width="1.15" fill="none"><ellipse cx="552.20" cy="1221.40" rx="3.2" ry="3.3" transform="rotate(20 552.20 1221.40)"/><line x1="548.30" y1="1225.30" x2="555.90" y2="1217.70"/></g><rect x="691.90" y="1210.00" width="2.00" height="19.00" fill="#d3d7dc" rx="1"/><rect x="847.90" y="1210.00" width="2.00" height="19.00" fill="#d3d7dc" rx="1"/><rect x="703.90" y="1211.00" width="9.65" height="16.00" fill="#a0e1ea"/><text x="718.55" y="1225.00" font-size="12.4" fill="#23282d" textLength="44.15" lengthAdjust="spacingAndGlyphs">$196.90</text><text x="859.90" y="1225.00" font-size="12.4" fill="#23282d" textLength="38.62" lengthAdjust="spacingAndGlyphs">-23.2%</text><rect x="1003.80" y="1210.00" width="2.00" height="19.00" fill="#d3d7dc" rx="1"/><rect x="1159.80" y="1210.00" width="2.00" height="19.00" fill="#d3d7dc" rx="1"/><rect x="1015.80" y="1211.00" width="3.00" height="16.00" fill="#c4f1f6"/><text x="1023.80" y="1225.00" font-size="12.4" fill="#23282d" textLength="31.38" lengthAdjust="spacingAndGlyphs">$0.00</text><text x="1171.80" y="1225.00" font-size="12.4" fill="#23282d" textLength="43.95" lengthAdjust="spacingAndGlyphs">-100.0%</text><rect x="1315.70" y="1210.00" width="2.00" height="19.00" fill="#d3d7dc" rx="1"/><rect x="1471.70" y="1210.00" width="2.00" height="19.00" fill="#d3d7dc" rx="1"/><rect x="1327.70" y="1211.00" width="3.00" height="16.00" fill="#c4f1f6"/><text x="1335.70" y="1225.00" font-size="12.4" fill="#23282d" textLength="31.38" lengthAdjust="spacingAndGlyphs">$0.00</text><g stroke="#bcbfc3" stroke-width="1.15" fill="none"><ellipse cx="1487.90" cy="1221.40" rx="3.2" ry="3.3" transform="rotate(20 1487.90 1221.40)"/><line x1="1484.00" y1="1225.30" x2="1491.60" y2="1217.70"/></g><rect x="1627.60" y="1210.00" width="2.00" height="19.00" fill="#d3d7dc" rx="1"/><rect x="1783.60" y="1210.00" width="2.00" height="19.00" fill="#d3d7dc" rx="1"/><rect x="1639.60" y="1211.00" width="3.00" height="16.00" fill="#c4f1f6"/><text x="1647.60" y="1225.00" font-size="12.4" fill="#23282d" textLength="31.38" lengthAdjust="spacingAndGlyphs">$0.00</text><g stroke="#bcbfc3" stroke-width="1.15" fill="none"><ellipse cx="1799.80" cy="1221.40" rx="3.2" ry="3.3" transform="rotate(20 1799.80 1221.40)"/><line x1="1795.90" y1="1225.30" x2="1803.50" y2="1217.70"/></g><rect x="1939.50" y="1210.00" width="2.00" height="19.00" fill="#d3d7dc" rx="1"/><rect x="2095.50" y="1210.00" width="2.00" height="19.00" fill="#d3d7dc" rx="1"/><rect x="1951.50" y="1211.00" width="3.00" height="16.00" fill="#c4f1f6"/><text x="1959.50" y="1225.00" font-size="12.4" fill="#23282d" textLength="31.38" lengthAdjust="spacingAndGlyphs">$0.00</text><g stroke="#bcbfc3" stroke-width="1.15" fill="none"><ellipse cx="2111.70" cy="1221.40" rx="3.2" ry="3.3" transform="rotate(20 2111.70 1221.40)"/><line x1="2107.80" y1="1225.30" x2="2115.40" y2="1217.70"/></g><rect x="2251.40" y="1210.00" width="2.00" height="19.00" fill="#d3d7dc" rx="1"/><rect x="2407.40" y="1210.00" width="2.00" height="19.00" fill="#d3d7dc" rx="1"/><rect x="2263.40" y="1211.00" width="3.00" height="16.00" fill="#c4f1f6"/><text x="2271.40" y="1225.00" font-size="12.4" fill="#23282d" textLength="31.38" lengthAdjust="spacingAndGlyphs">$0.00</text><g stroke="#bcbfc3" stroke-width="1.15" fill="none"><ellipse cx="2423.60" cy="1221.40" rx="3.2" ry="3.3" transform="rotate(20 2423.60 1221.40)"/><line x1="2419.70" y1="1225.30" x2="2427.30" y2="1217.70"/></g><rect x="2563.30" y="1210.00" width="2.00" height="19.00" fill="#d3d7dc" rx="1"/><rect x="2719.30" y="1210.00" width="2.00" height="19.00" fill="#d3d7dc" rx="1"/><rect x="2575.30" y="1211.00" width="3.00" height="16.00" fill="#c4f1f6"/><text x="2583.30" y="1225.00" font-size="12.4" fill="#23282d" textLength="31.38" lengthAdjust="spacingAndGlyphs">$0.00</text><g stroke="#bcbfc3" stroke-width="1.15" fill="none"><ellipse cx="2735.50" cy="1221.40" rx="3.2" ry="3.3" transform="rotate(20 2735.50 1221.40)"/><line x1="2731.60" y1="1225.30" x2="2739.20" y2="1217.70"/></g><rect x="2875.20" y="1210.00" width="2.00" height="19.00" fill="#d3d7dc" rx="1"/><rect x="3031.20" y="1210.00" width="2.00" height="19.00" fill="#d3d7dc" rx="1"/><rect x="2887.20" y="1211.00" width="3.00" height="16.00" fill="#c4f1f6"/><text x="2895.20" y="1225.00" font-size="12.4" fill="#23282d" textLength="31.38" lengthAdjust="spacingAndGlyphs">$0.00</text><g stroke="#bcbfc3" stroke-width="1.15" fill="none"><ellipse cx="3047.40" cy="1221.40" rx="3.2" ry="3.3" transform="rotate(20 3047.40 1221.40)"/><line x1="3043.50" y1="1225.30" x2="3051.10" y2="1217.70"/></g><text x="53.10" y="1246.00" font-size="12.4" fill="#23282d" text-anchor="end" textLength="7.44" lengthAdjust="spacingAndGlyphs">5</text><rect x="62.00" y="1231.00" width="2.00" height="19.00" fill="#c3c9cf" rx="1"/><text x="74.40" y="1246.00" font-size="12.4" fill="#23282d" textLength="105.27" lengthAdjust="spacingAndGlyphs">Container Registry</text><rect x="380.00" y="1231.00" width="2.00" height="19.00" fill="#d3d7dc" rx="1"/><rect x="536.00" y="1231.00" width="2.00" height="19.00" fill="#d3d7dc" rx="1"/><rect x="392.00" y="1232.00" width="3.94" height="16.00" fill="#b5ebf1"/><text x="400.94" y="1246.00" font-size="12.4" fill="#23282d" textLength="38.81" lengthAdjust="spacingAndGlyphs">$80.36</text><g stroke="#bcbfc3" stroke-width="1.15" fill="none"><ellipse cx="552.20" cy="1242.40" rx="3.2" ry="3.3" transform="rotate(20 552.20 1242.40)"/><line x1="548.30" y1="1246.30" x2="555.90" y2="1238.70"/></g><rect x="691.90" y="1231.00" width="2.00" height="19.00" fill="#d3d7dc" rx="1"/><rect x="847.90" y="1231.00" width="2.00" height="19.00" fill="#d3d7dc" rx="1"/><rect x="703.90" y="1232.00" width="3.00" height="16.00" fill="#baedf3"/><text x="711.90" y="1246.00" font-size="12.4" fill="#23282d" textLength="38.81" lengthAdjust="spacingAndGlyphs">$52.53</text><text x="859.90" y="1246.00" font-size="12.4" fill="#23282d" textLength="38.62" lengthAdjust="spacingAndGlyphs">-34.6%</text><rect x="1003.80" y="1231.00" width="2.00" height="19.00" fill="#d3d7dc" rx="1"/><rect x="1159.80" y="1231.00" width="2.00" height="19.00" fill="#d3d7dc" rx="1"/><rect x="1015.80" y="1232.00" width="3.00" height="16.00" fill="#c4f1f6"/><text x="1023.80" y="1246.00" font-size="12.4" fill="#23282d" textLength="31.38" lengthAdjust="spacingAndGlyphs">$0.00</text><text x="1171.80" y="1246.00" font-size="12.4" fill="#23282d" textLength="43.95" lengthAdjust="spacingAndGlyphs">-100.0%</text><rect x="1315.70" y="1231.00" width="2.00" height="19.00" fill="#d3d7dc" rx="1"/><rect x="1471.70" y="1231.00" width="2.00" height="19.00" fill="#d3d7dc" rx="1"/><rect x="1327.70" y="1232.00" width="3.00" height="16.00" fill="#c4f1f6"/><text x="1335.70" y="1246.00" font-size="12.4" fill="#23282d" textLength="31.38" lengthAdjust="spacingAndGlyphs">$0.00</text><g stroke="#bcbfc3" stroke-width="1.15" fill="none"><ellipse cx="1487.90" cy="1242.40" rx="3.2" ry="3.3" transform="rotate(20 1487.90 1242.40)"/><line x1="1484.00" y1="1246.30" x2="1491.60" y2="1238.70"/></g><rect x="1627.60" y="1231.00" width="2.00" height="19.00" fill="#d3d7dc" rx="1"/><rect x="1783.60" y="1231.00" width="2.00" height="19.00" fill="#d3d7dc" rx="1"/><rect x="1639.60" y="1232.00" width="3.00" height="16.00" fill="#c4f1f6"/><text x="1647.60" y="1246.00" font-size="12.4" fill="#23282d" textLength="31.38" lengthAdjust="spacingAndGlyphs">$0.00</text><g stroke="#bcbfc3" stroke-width="1.15" fill="none"><ellipse cx="1799.80" cy="1242.40" rx="3.2" ry="3.3" transform="rotate(20 1799.80 1242.40)"/><line x1="1795.90" y1="1246.30" x2="1803.50" y2="1238.70"/></g><rect x="1939.50" y="1231.00" width="2.00" height="19.00" fill="#d3d7dc" rx="1"/><rect x="2095.50" y="1231.00" width="2.00" height="19.00" fill="#d3d7dc" rx="1"/><rect x="1951.50" y="1232.00" width="3.00" height="16.00" fill="#c4f1f6"/><text x="1959.50" y="1246.00" font-size="12.4" fill="#23282d" textLength="31.38" lengthAdjust="spacingAndGlyphs">$0.00</text><g stroke="#bcbfc3" stroke-width="1.15" fill="none"><ellipse cx="2111.70" cy="1242.40" rx="3.2" ry="3.3" transform="rotate(20 2111.70 1242.40)"/><line x1="2107.80" y1="1246.30" x2="2115.40" y2="1238.70"/></g><rect x="2251.40" y="1231.00" width="2.00" height="19.00" fill="#d3d7dc" rx="1"/><rect x="2407.40" y="1231.00" width="2.00" height="19.00" fill="#d3d7dc" rx="1"/><rect x="2263.40" y="1232.00" width="3.00" height="16.00" fill="#c4f1f6"/><text x="2271.40" y="1246.00" font-size="12.4" fill="#23282d" textLength="31.38" lengthAdjust="spacingAndGlyphs">$0.00</text><g stroke="#bcbfc3" stroke-width="1.15" fill="none"><ellipse cx="2423.60" cy="1242.40" rx="3.2" ry="3.3" transform="rotate(20 2423.60 1242.40)"/><line x1="2419.70" y1="1246.30" x2="2427.30" y2="1238.70"/></g><rect x="2563.30" y="1231.00" width="2.00" height="19.00" fill="#d3d7dc" rx="1"/><rect x="2719.30" y="1231.00" width="2.00" height="19.00" fill="#d3d7dc" rx="1"/><rect x="2575.30" y="1232.00" width="3.00" height="16.00" fill="#c4f1f6"/><text x="2583.30" y="1246.00" font-size="12.4" fill="#23282d" textLength="31.38" lengthAdjust="spacingAndGlyphs">$0.00</text><g stroke="#bcbfc3" stroke-width="1.15" fill="none"><ellipse cx="2735.50" cy="1242.40" rx="3.2" ry="3.3" transform="rotate(20 2735.50 1242.40)"/><line x1="2731.60" y1="1246.30" x2="2739.20" y2="1238.70"/></g><rect x="2875.20" y="1231.00" width="2.00" height="19.00" fill="#d3d7dc" rx="1"/><rect x="3031.20" y="1231.00" width="2.00" height="19.00" fill="#d3d7dc" rx="1"/><rect x="2887.20" y="1232.00" width="3.00" height="16.00" fill="#c4f1f6"/><text x="2895.20" y="1246.00" font-size="12.4" fill="#23282d" textLength="31.38" lengthAdjust="spacingAndGlyphs">$0.00</text><g stroke="#bcbfc3" stroke-width="1.15" fill="none"><ellipse cx="3047.40" cy="1242.40" rx="3.2" ry="3.3" transform="rotate(20 3047.40 1242.40)"/><line x1="3043.50" y1="1246.30" x2="3051.10" y2="1238.70"/></g><text x="53.10" y="1267.00" font-size="12.4" fill="#23282d" text-anchor="end" textLength="7.44" lengthAdjust="spacingAndGlyphs">6</text><rect x="62.00" y="1252.00" width="2.00" height="19.00" fill="#c3c9cf" rx="1"/><text x="74.40" y="1267.00" font-size="12.4" fill="#23282d" textLength="81.68" lengthAdjust="spacingAndGlyphs">Load Balancer</text><rect x="380.00" y="1252.00" width="2.00" height="19.00" fill="#d3d7dc" rx="1"/><rect x="536.00" y="1252.00" width="2.00" height="19.00" fill="#d3d7dc" rx="1"/><rect x="392.00" y="1253.00" width="3.00" height="16.00" fill="#baedf2"/><text x="400.00" y="1267.00" font-size="12.4" fill="#23282d" textLength="38.81" lengthAdjust="spacingAndGlyphs">$55.82</text><g stroke="#bcbfc3" stroke-width="1.15" fill="none"><ellipse cx="552.20" cy="1263.40" rx="3.2" ry="3.3" transform="rotate(20 552.20 1263.40)"/><line x1="548.30" y1="1267.30" x2="555.90" y2="1259.70"/></g><rect x="691.90" y="1252.00" width="2.00" height="19.00" fill="#d3d7dc" rx="1"/><rect x="847.90" y="1252.00" width="2.00" height="19.00" fill="#d3d7dc" rx="1"/><rect x="703.90" y="1253.00" width="3.00" height="16.00" fill="#baecf2"/><text x="711.90" y="1267.00" font-size="12.4" fill="#23282d" textLength="38.81" lengthAdjust="spacingAndGlyphs">$56.23</text><text x="859.90" y="1267.00" font-size="12.4" fill="#23282d" textLength="27.56" lengthAdjust="spacingAndGlyphs">0.7%</text><rect x="1003.80" y="1252.00" width="2.00" height="19.00" fill="#d3d7dc" rx="1"/><rect x="1159.80" y="1252.00" width="2.00" height="19.00" fill="#d3d7dc" rx="1"/><rect x="1015.80" y="1253.00" width="3.00" height="16.00" fill="#c4f1f6"/><text x="1023.80" y="1267.00" font-size="12.4" fill="#23282d" textLength="31.38" lengthAdjust="spacingAndGlyphs">$0.00</text><text x="1171.80" y="1267.00" font-size="12.4" fill="#23282d" textLength="43.95" lengthAdjust="spacingAndGlyphs">-100.0%</text><rect x="1315.70" y="1252.00" width="2.00" height="19.00" fill="#d3d7dc" rx="1"/><rect x="1471.70" y="1252.00" width="2.00" height="19.00" fill="#d3d7dc" rx="1"/><rect x="1327.70" y="1253.00" width="3.00" height="16.00" fill="#c4f1f6"/><text x="1335.70" y="1267.00" font-size="12.4" fill="#23282d" textLength="31.38" lengthAdjust="spacingAndGlyphs">$0.00</text><g stroke="#bcbfc3" stroke-width="1.15" fill="none"><ellipse cx="1487.90" cy="1263.40" rx="3.2" ry="3.3" transform="rotate(20 1487.90 1263.40)"/><line x1="1484.00" y1="1267.30" x2="1491.60" y2="1259.70"/></g><rect x="1627.60" y="1252.00" width="2.00" height="19.00" fill="#d3d7dc" rx="1"/><rect x="1783.60" y="1252.00" width="2.00" height="19.00" fill="#d3d7dc" rx="1"/><rect x="1639.60" y="1253.00" width="3.00" height="16.00" fill="#c4f1f6"/><text x="1647.60" y="1267.00" font-size="12.4" fill="#23282d" textLength="31.38" lengthAdjust="spacingAndGlyphs">$0.00</text><g stroke="#bcbfc3" stroke-width="1.15" fill="none"><ellipse cx="1799.80" cy="1263.40" rx="3.2" ry="3.3" transform="rotate(20 1799.80 1263.40)"/><line x1="1795.90" y1="1267.30" x2="1803.50" y2="1259.70"/></g><rect x="1939.50" y="1252.00" width="2.00" height="19.00" fill="#d3d7dc" rx="1"/><rect x="2095.50" y="1252.00" width="2.00" height="19.00" fill="#d3d7dc" rx="1"/><rect x="1951.50" y="1253.00" width="3.00" height="16.00" fill="#c4f1f6"/><text x="1959.50" y="1267.00" font-size="12.4" fill="#23282d" textLength="31.38" lengthAdjust="spacingAndGlyphs">$0.00</text><g stroke="#bcbfc3" stroke-width="1.15" fill="none"><ellipse cx="2111.70" cy="1263.40" rx="3.2" ry="3.3" transform="rotate(20 2111.70 1263.40)"/><line x1="2107.80" y1="1267.30" x2="2115.40" y2="1259.70"/></g><rect x="2251.40" y="1252.00" width="2.00" height="19.00" fill="#d3d7dc" rx="1"/><rect x="2407.40" y="1252.00" width="2.00" height="19.00" fill="#d3d7dc" rx="1"/><rect x="2263.40" y="1253.00" width="3.00" height="16.00" fill="#c4f1f6"/><text x="2271.40" y="1267.00" font-size="12.4" fill="#23282d" textLength="31.38" lengthAdjust="spacingAndGlyphs">$0.00</text><g stroke="#bcbfc3" stroke-width="1.15" fill="none"><ellipse cx="2423.60" cy="1263.40" rx="3.2" ry="3.3" transform="rotate(20 2423.60 1263.40)"/><line x1="2419.70" y1="1267.30" x2="2427.30" y2="1259.70"/></g><rect x="2563.30" y="1252.00" width="2.00" height="19.00" fill="#d3d7dc" rx="1"/><rect x="2719.30" y="1252.00" width="2.00" height="19.00" fill="#d3d7dc" rx="1"/><rect x="2575.30" y="1253.00" width="3.00" height="16.00" fill="#c4f1f6"/><text x="2583.30" y="1267.00" font-size="12.4" fill="#23282d" textLength="31.38" lengthAdjust="spacingAndGlyphs">$0.00</text><g stroke="#bcbfc3" stroke-width="1.15" fill="none"><ellipse cx="2735.50" cy="1263.40" rx="3.2" ry="3.3" transform="rotate(20 2735.50 1263.40)"/><line x1="2731.60" y1="1267.30" x2="2739.20" y2="1259.70"/></g><rect x="2875.20" y="1252.00" width="2.00" height="19.00" fill="#d3d7dc" rx="1"/><rect x="3031.20" y="1252.00" width="2.00" height="19.00" fill="#d3d7dc" rx="1"/><rect x="2887.20" y="1253.00" width="3.00" height="16.00" fill="#c4f1f6"/><text x="2895.20" y="1267.00" font-size="12.4" fill="#23282d" textLength="31.38" lengthAdjust="spacingAndGlyphs">$0.00</text><g stroke="#bcbfc3" stroke-width="1.15" fill="none"><ellipse cx="3047.40" cy="1263.40" rx="3.2" ry="3.3" transform="rotate(20 3047.40 1263.40)"/><line x1="3043.50" y1="1267.30" x2="3051.10" y2="1259.70"/></g><text x="53.10" y="1288.00" font-size="12.4" fill="#23282d" text-anchor="end" textLength="7.44" lengthAdjust="spacingAndGlyphs">7</text><rect x="62.00" y="1273.00" width="2.00" height="19.00" fill="#c3c9cf" rx="1"/><text x="74.40" y="1288.00" font-size="12.4" fill="#23282d" textLength="85.76" lengthAdjust="spacingAndGlyphs">Virtual Network</text><rect x="380.00" y="1273.00" width="2.00" height="19.00" fill="#d3d7dc" rx="1"/><rect x="536.00" y="1273.00" width="2.00" height="19.00" fill="#d3d7dc" rx="1"/><rect x="392.00" y="1274.00" width="3.00" height="16.00" fill="#baedf3"/><text x="400.00" y="1288.00" font-size="12.4" fill="#23282d" textLength="36.71" lengthAdjust="spacingAndGlyphs">$52.13</text><g stroke="#bcbfc3" stroke-width="1.15" fill="none"><ellipse cx="552.20" cy="1284.40" rx="3.2" ry="3.3" transform="rotate(20 552.20 1284.40)"/><line x1="548.30" y1="1288.30" x2="555.90" y2="1280.70"/></g><rect x="691.90" y="1273.00" width="2.00" height="19.00" fill="#d3d7dc" rx="1"/><rect x="847.90" y="1273.00" width="2.00" height="19.00" fill="#d3d7dc" rx="1"/><rect x="703.90" y="1274.00" width="3.00" height="16.00" fill="#bbedf3"/><text x="711.90" y="1288.00" font-size="12.4" fill="#23282d" textLength="38.81" lengthAdjust="spacingAndGlyphs">$50.97</text><text x="859.90" y="1288.00" font-size="12.4" fill="#23282d" textLength="31.18" lengthAdjust="spacingAndGlyphs">-2.2%</text><rect x="1003.80" y="1273.00" width="2.00" height="19.00" fill="#d3d7dc" rx="1"/><rect x="1159.80" y="1273.00" width="2.00" height="19.00" fill="#d3d7dc" rx="1"/><rect x="1015.80" y="1274.00" width="3.00" height="16.00" fill="#c4f1f6"/><text x="1023.80" y="1288.00" font-size="12.4" fill="#23282d" textLength="31.38" lengthAdjust="spacingAndGlyphs">$0.00</text><text x="1171.80" y="1288.00" font-size="12.4" fill="#23282d" textLength="43.95" lengthAdjust="spacingAndGlyphs">-100.0%</text><rect x="1315.70" y="1273.00" width="2.00" height="19.00" fill="#d3d7dc" rx="1"/><rect x="1471.70" y="1273.00" width="2.00" height="19.00" fill="#d3d7dc" rx="1"/><rect x="1327.70" y="1274.00" width="3.00" height="16.00" fill="#c4f1f6"/><text x="1335.70" y="1288.00" font-size="12.4" fill="#23282d" textLength="31.38" lengthAdjust="spacingAndGlyphs">$0.00</text><g stroke="#bcbfc3" stroke-width="1.15" fill="none"><ellipse cx="1487.90" cy="1284.40" rx="3.2" ry="3.3" transform="rotate(20 1487.90 1284.40)"/><line x1="1484.00" y1="1288.30" x2="1491.60" y2="1280.70"/></g><rect x="1627.60" y="1273.00" width="2.00" height="19.00" fill="#d3d7dc" rx="1"/><rect x="1783.60" y="1273.00" width="2.00" height="19.00" fill="#d3d7dc" rx="1"/><rect x="1639.60" y="1274.00" width="3.00" height="16.00" fill="#c4f1f6"/><text x="1647.60" y="1288.00" font-size="12.4" fill="#23282d" textLength="31.38" lengthAdjust="spacingAndGlyphs">$0.00</text><g stroke="#bcbfc3" stroke-width="1.15" fill="none"><ellipse cx="1799.80" cy="1284.40" rx="3.2" ry="3.3" transform="rotate(20 1799.80 1284.40)"/><line x1="1795.90" y1="1288.30" x2="1803.50" y2="1280.70"/></g><rect x="1939.50" y="1273.00" width="2.00" height="19.00" fill="#d3d7dc" rx="1"/><rect x="2095.50" y="1273.00" width="2.00" height="19.00" fill="#d3d7dc" rx="1"/><rect x="1951.50" y="1274.00" width="3.00" height="16.00" fill="#c4f1f6"/><text x="1959.50" y="1288.00" font-size="12.4" fill="#23282d" textLength="31.38" lengthAdjust="spacingAndGlyphs">$0.00</text><g stroke="#bcbfc3" stroke-width="1.15" fill="none"><ellipse cx="2111.70" cy="1284.40" rx="3.2" ry="3.3" transform="rotate(20 2111.70 1284.40)"/><line x1="2107.80" y1="1288.30" x2="2115.40" y2="1280.70"/></g><rect x="2251.40" y="1273.00" width="2.00" height="19.00" fill="#d3d7dc" rx="1"/><rect x="2407.40" y="1273.00" width="2.00" height="19.00" fill="#d3d7dc" rx="1"/><rect x="2263.40" y="1274.00" width="3.00" height="16.00" fill="#c4f1f6"/><text x="2271.40" y="1288.00" font-size="12.4" fill="#23282d" textLength="31.38" lengthAdjust="spacingAndGlyphs">$0.00</text><g stroke="#bcbfc3" stroke-width="1.15" fill="none"><ellipse cx="2423.60" cy="1284.40" rx="3.2" ry="3.3" transform="rotate(20 2423.60 1284.40)"/><line x1="2419.70" y1="1288.30" x2="2427.30" y2="1280.70"/></g><rect x="2563.30" y="1273.00" width="2.00" height="19.00" fill="#d3d7dc" rx="1"/><rect x="2719.30" y="1273.00" width="2.00" height="19.00" fill="#d3d7dc" rx="1"/><rect x="2575.30" y="1274.00" width="3.00" height="16.00" fill="#c4f1f6"/><text x="2583.30" y="1288.00" font-size="12.4" fill="#23282d" textLength="31.38" lengthAdjust="spacingAndGlyphs">$0.00</text><g stroke="#bcbfc3" stroke-width="1.15" fill="none"><ellipse cx="2735.50" cy="1284.40" rx="3.2" ry="3.3" transform="rotate(20 2735.50 1284.40)"/><line x1="2731.60" y1="1288.30" x2="2739.20" y2="1280.70"/></g><rect x="2875.20" y="1273.00" width="2.00" height="19.00" fill="#d3d7dc" rx="1"/><rect x="3031.20" y="1273.00" width="2.00" height="19.00" fill="#d3d7dc" rx="1"/><rect x="2887.20" y="1274.00" width="3.00" height="16.00" fill="#c4f1f6"/><text x="2895.20" y="1288.00" font-size="12.4" fill="#23282d" textLength="31.38" lengthAdjust="spacingAndGlyphs">$0.00</text><g stroke="#bcbfc3" stroke-width="1.15" fill="none"><ellipse cx="3047.40" cy="1284.40" rx="3.2" ry="3.3" transform="rotate(20 3047.40 1284.40)"/><line x1="3043.50" y1="1288.30" x2="3051.10" y2="1280.70"/></g><text x="53.10" y="1309.00" font-size="12.4" fill="#23282d" text-anchor="end" textLength="7.44" lengthAdjust="spacingAndGlyphs">8</text><rect x="62.00" y="1294.00" width="2.00" height="19.00" fill="#c3c9cf" rx="1"/><text x="74.40" y="1309.00" font-size="12.4" fill="#23282d" textLength="116.16" lengthAdjust="spacingAndGlyphs">Application Gateway</text><rect x="380.00" y="1294.00" width="2.00" height="19.00" fill="#d3d7dc" rx="1"/><rect x="536.00" y="1294.00" width="2.00" height="19.00" fill="#d3d7dc" rx="1"/><rect x="392.00" y="1295.00" width="3.00" height="16.00" fill="#bbedf3"/><text x="400.00" y="1309.00" font-size="12.4" fill="#23282d" textLength="38.81" lengthAdjust="spacingAndGlyphs">$46.52</text><g stroke="#bcbfc3" stroke-width="1.15" fill="none"><ellipse cx="552.20" cy="1305.40" rx="3.2" ry="3.3" transform="rotate(20 552.20 1305.40)"/><line x1="548.30" y1="1309.30" x2="555.90" y2="1301.70"/></g><rect x="691.90" y="1294.00" width="2.00" height="19.00" fill="#d3d7dc" rx="1"/><rect x="847.90" y="1294.00" width="2.00" height="19.00" fill="#d3d7dc" rx="1"/><rect x="703.90" y="1295.00" width="3.89" height="16.00" fill="#b5ebf1"/><text x="712.79" y="1309.00" font-size="12.4" fill="#23282d" textLength="38.81" lengthAdjust="spacingAndGlyphs">$79.35</text><text x="859.90" y="1309.00" font-size="12.4" fill="#23282d" textLength="35.0" lengthAdjust="spacingAndGlyphs">70.6%</text><rect x="1003.80" y="1294.00" width="2.00" height="19.00" fill="#d3d7dc" rx="1"/><rect x="1159.80" y="1294.00" width="2.00" height="19.00" fill="#d3d7dc" rx="1"/><rect x="1015.80" y="1295.00" width="3.00" height="16.00" fill="#c4f1f6"/><text x="1023.80" y="1309.00" font-size="12.4" fill="#23282d" textLength="31.38" lengthAdjust="spacingAndGlyphs">$0.00</text><text x="1171.80" y="1309.00" font-size="12.4" fill="#23282d" textLength="43.95" lengthAdjust="spacingAndGlyphs">-100.0%</text><rect x="1315.70" y="1294.00" width="2.00" height="19.00" fill="#d3d7dc" rx="1"/><rect x="1471.70" y="1294.00" width="2.00" height="19.00" fill="#d3d7dc" rx="1"/><g stroke="#bcbfc3" stroke-width="1.15" fill="none"><ellipse cx="1339.90" cy="1305.40" rx="3.2" ry="3.3" transform="rotate(20 1339.90 1305.40)"/><line x1="1336.00" y1="1309.30" x2="1343.60" y2="1301.70"/></g><g stroke="#bcbfc3" stroke-width="1.15" fill="none"><ellipse cx="1487.90" cy="1305.40" rx="3.2" ry="3.3" transform="rotate(20 1487.90 1305.40)"/><line x1="1484.00" y1="1309.30" x2="1491.60" y2="1301.70"/></g><rect x="1627.60" y="1294.00" width="2.00" height="19.00" fill="#d3d7dc" rx="1"/><rect x="1783.60" y="1294.00" width="2.00" height="19.00" fill="#d3d7dc" rx="1"/><g stroke="#bcbfc3" stroke-width="1.15" fill="none"><ellipse cx="1651.80" cy="1305.40" rx="3.2" ry="3.3" transform="rotate(20 1651.80 1305.40)"/><line x1="1647.90" y1="1309.30" x2="1655.50" y2="1301.70"/></g><g stroke="#bcbfc3" stroke-width="1.15" fill="none"><ellipse cx="1799.80" cy="1305.40" rx="3.2" ry="3.3" transform="rotate(20 1799.80 1305.40)"/><line x1="1795.90" y1="1309.30" x2="1803.50" y2="1301.70"/></g><rect x="1939.50" y="1294.00" width="2.00" height="19.00" fill="#d3d7dc" rx="1"/><rect x="2095.50" y="1294.00" width="2.00" height="19.00" fill="#d3d7dc" rx="1"/><g stroke="#bcbfc3" stroke-width="1.15" fill="none"><ellipse cx="1963.70" cy="1305.40" rx="3.2" ry="3.3" transform="rotate(20 1963.70 1305.40)"/><line x1="1959.80" y1="1309.30" x2="1967.40" y2="1301.70"/></g><g stroke="#bcbfc3" stroke-width="1.15" fill="none"><ellipse cx="2111.70" cy="1305.40" rx="3.2" ry="3.3" transform="rotate(20 2111.70 1305.40)"/><line x1="2107.80" y1="1309.30" x2="2115.40" y2="1301.70"/></g><rect x="2251.40" y="1294.00" width="2.00" height="19.00" fill="#d3d7dc" rx="1"/><rect x="2407.40" y="1294.00" width="2.00" height="19.00" fill="#d3d7dc" rx="1"/><g stroke="#bcbfc3" stroke-width="1.15" fill="none"><ellipse cx="2275.60" cy="1305.40" rx="3.2" ry="3.3" transform="rotate(20 2275.60 1305.40)"/><line x1="2271.70" y1="1309.30" x2="2279.30" y2="1301.70"/></g><g stroke="#bcbfc3" stroke-width="1.15" fill="none"><ellipse cx="2423.60" cy="1305.40" rx="3.2" ry="3.3" transform="rotate(20 2423.60 1305.40)"/><line x1="2419.70" y1="1309.30" x2="2427.30" y2="1301.70"/></g><rect x="2563.30" y="1294.00" width="2.00" height="19.00" fill="#d3d7dc" rx="1"/><rect x="2719.30" y="1294.00" width="2.00" height="19.00" fill="#d3d7dc" rx="1"/><g stroke="#bcbfc3" stroke-width="1.15" fill="none"><ellipse cx="2587.50" cy="1305.40" rx="3.2" ry="3.3" transform="rotate(20 2587.50 1305.40)"/><line x1="2583.60" y1="1309.30" x2="2591.20" y2="1301.70"/></g><g stroke="#bcbfc3" stroke-width="1.15" fill="none"><ellipse cx="2735.50" cy="1305.40" rx="3.2" ry="3.3" transform="rotate(20 2735.50 1305.40)"/><line x1="2731.60" y1="1309.30" x2="2739.20" y2="1301.70"/></g><rect x="2875.20" y="1294.00" width="2.00" height="19.00" fill="#d3d7dc" rx="1"/><rect x="3031.20" y="1294.00" width="2.00" height="19.00" fill="#d3d7dc" rx="1"/><g stroke="#bcbfc3" stroke-width="1.15" fill="none"><ellipse cx="2899.40" cy="1305.40" rx="3.2" ry="3.3" transform="rotate(20 2899.40 1305.40)"/><line x1="2895.50" y1="1309.30" x2="2903.10" y2="1301.70"/></g><g stroke="#bcbfc3" stroke-width="1.15" fill="none"><ellipse cx="3047.40" cy="1305.40" rx="3.2" ry="3.3" transform="rotate(20 3047.40 1305.40)"/><line x1="3043.50" y1="1309.30" x2="3051.10" y2="1301.70"/></g><text x="53.10" y="1330.00" font-size="12.4" fill="#23282d" text-anchor="end" textLength="7.44" lengthAdjust="spacingAndGlyphs">9</text><rect x="62.00" y="1315.00" width="2.00" height="19.00" fill="#c3c9cf" rx="1"/><text x="74.40" y="1330.00" font-size="12.4" fill="#23282d" textLength="75.14" lengthAdjust="spacingAndGlyphs">Log Analytics</text><rect x="380.00" y="1315.00" width="2.00" height="19.00" fill="#d3d7dc" rx="1"/><rect x="536.00" y="1315.00" width="2.00" height="19.00" fill="#d3d7dc" rx="1"/><rect x="392.00" y="1316.00" width="3.00" height="16.00" fill="#beeef4"/><text x="400.00" y="1330.00" font-size="12.4" fill="#23282d" textLength="34.61" lengthAdjust="spacingAndGlyphs">$33.11</text><g stroke="#bcbfc3" stroke-width="1.15" fill="none"><ellipse cx="552.20" cy="1326.40" rx="3.2" ry="3.3" transform="rotate(20 552.20 1326.40)"/><line x1="548.30" y1="1330.30" x2="555.90" y2="1322.70"/></g><rect x="691.90" y="1315.00" width="2.00" height="19.00" fill="#d3d7dc" rx="1"/><rect x="847.90" y="1315.00" width="2.00" height="19.00" fill="#d3d7dc" rx="1"/><rect x="703.90" y="1316.00" width="3.00" height="16.00" fill="#c0eff5"/><text x="711.90" y="1330.00" font-size="12.4" fill="#23282d" textLength="36.71" lengthAdjust="spacingAndGlyphs">$23.14</text><text x="859.90" y="1330.00" font-size="12.4" fill="#23282d" textLength="36.52" lengthAdjust="spacingAndGlyphs">-30.1%</text><rect x="1003.80" y="1315.00" width="2.00" height="19.00" fill="#d3d7dc" rx="1"/><rect x="1159.80" y="1315.00" width="2.00" height="19.00" fill="#d3d7dc" rx="1"/><rect x="1015.80" y="1316.00" width="3.00" height="16.00" fill="#c4f1f6"/><text x="1023.80" y="1330.00" font-size="12.4" fill="#23282d" textLength="31.38" lengthAdjust="spacingAndGlyphs">$0.00</text><text x="1171.80" y="1330.00" font-size="12.4" fill="#23282d" textLength="43.95" lengthAdjust="spacingAndGlyphs">-100.0%</text><rect x="1315.70" y="1315.00" width="2.00" height="19.00" fill="#d3d7dc" rx="1"/><rect x="1471.70" y="1315.00" width="2.00" height="19.00" fill="#d3d7dc" rx="1"/><rect x="1327.70" y="1316.00" width="3.00" height="16.00" fill="#c4f1f6"/><text x="1335.70" y="1330.00" font-size="12.4" fill="#23282d" textLength="31.38" lengthAdjust="spacingAndGlyphs">$0.00</text><g stroke="#bcbfc3" stroke-width="1.15" fill="none"><ellipse cx="1487.90" cy="1326.40" rx="3.2" ry="3.3" transform="rotate(20 1487.90 1326.40)"/><line x1="1484.00" y1="1330.30" x2="1491.60" y2="1322.70"/></g><rect x="1627.60" y="1315.00" width="2.00" height="19.00" fill="#d3d7dc" rx="1"/><rect x="1783.60" y="1315.00" width="2.00" height="19.00" fill="#d3d7dc" rx="1"/><rect x="1639.60" y="1316.00" width="3.00" height="16.00" fill="#c4f1f6"/><text x="1647.60" y="1330.00" font-size="12.4" fill="#23282d" textLength="31.38" lengthAdjust="spacingAndGlyphs">$0.00</text><g stroke="#bcbfc3" stroke-width="1.15" fill="none"><ellipse cx="1799.80" cy="1326.40" rx="3.2" ry="3.3" transform="rotate(20 1799.80 1326.40)"/><line x1="1795.90" y1="1330.30" x2="1803.50" y2="1322.70"/></g><rect x="1939.50" y="1315.00" width="2.00" height="19.00" fill="#d3d7dc" rx="1"/><rect x="2095.50" y="1315.00" width="2.00" height="19.00" fill="#d3d7dc" rx="1"/><rect x="1951.50" y="1316.00" width="3.00" height="16.00" fill="#c4f1f6"/><text x="1959.50" y="1330.00" font-size="12.4" fill="#23282d" textLength="31.38" lengthAdjust="spacingAndGlyphs">$0.00</text><g stroke="#bcbfc3" stroke-width="1.15" fill="none"><ellipse cx="2111.70" cy="1326.40" rx="3.2" ry="3.3" transform="rotate(20 2111.70 1326.40)"/><line x1="2107.80" y1="1330.30" x2="2115.40" y2="1322.70"/></g><rect x="2251.40" y="1315.00" width="2.00" height="19.00" fill="#d3d7dc" rx="1"/><rect x="2407.40" y="1315.00" width="2.00" height="19.00" fill="#d3d7dc" rx="1"/><rect x="2263.40" y="1316.00" width="3.00" height="16.00" fill="#c4f1f6"/><text x="2271.40" y="1330.00" font-size="12.4" fill="#23282d" textLength="31.38" lengthAdjust="spacingAndGlyphs">$0.00</text><g stroke="#bcbfc3" stroke-width="1.15" fill="none"><ellipse cx="2423.60" cy="1326.40" rx="3.2" ry="3.3" transform="rotate(20 2423.60 1326.40)"/><line x1="2419.70" y1="1330.30" x2="2427.30" y2="1322.70"/></g><rect x="2563.30" y="1315.00" width="2.00" height="19.00" fill="#d3d7dc" rx="1"/><rect x="2719.30" y="1315.00" width="2.00" height="19.00" fill="#d3d7dc" rx="1"/><rect x="2575.30" y="1316.00" width="3.00" height="16.00" fill="#c4f1f6"/><text x="2583.30" y="1330.00" font-size="12.4" fill="#23282d" textLength="31.38" lengthAdjust="spacingAndGlyphs">$0.00</text><g stroke="#bcbfc3" stroke-width="1.15" fill="none"><ellipse cx="2735.50" cy="1326.40" rx="3.2" ry="3.3" transform="rotate(20 2735.50 1326.40)"/><line x1="2731.60" y1="1330.30" x2="2739.20" y2="1322.70"/></g><rect x="2875.20" y="1315.00" width="2.00" height="19.00" fill="#d3d7dc" rx="1"/><rect x="3031.20" y="1315.00" width="2.00" height="19.00" fill="#d3d7dc" rx="1"/><g stroke="#bcbfc3" stroke-width="1.15" fill="none"><ellipse cx="2899.40" cy="1326.40" rx="3.2" ry="3.3" transform="rotate(20 2899.40 1326.40)"/><line x1="2895.50" y1="1330.30" x2="2903.10" y2="1322.70"/></g><g stroke="#bcbfc3" stroke-width="1.15" fill="none"><ellipse cx="3047.40" cy="1326.40" rx="3.2" ry="3.3" transform="rotate(20 3047.40 1326.40)"/><line x1="3043.50" y1="1330.30" x2="3051.10" y2="1322.70"/></g><text x="53.10" y="1351.00" font-size="12.4" fill="#23282d" text-anchor="end" textLength="12.77" lengthAdjust="spacingAndGlyphs">10</text><rect x="62.00" y="1336.00" width="2.00" height="19.00" fill="#c3c9cf" rx="1"/><text x="74.40" y="1351.00" font-size="12.4" fill="#23282d" textLength="59.98" lengthAdjust="spacingAndGlyphs">Bandwidth</text><rect x="380.00" y="1336.00" width="2.00" height="19.00" fill="#d3d7dc" rx="1"/><rect x="536.00" y="1336.00" width="2.00" height="19.00" fill="#d3d7dc" rx="1"/><rect x="392.00" y="1337.00" width="3.00" height="16.00" fill="#c3f1f6"/><text x="400.00" y="1351.00" font-size="12.4" fill="#23282d" textLength="31.38" lengthAdjust="spacingAndGlyphs">$3.67</text><g stroke="#bcbfc3" stroke-width="1.15" fill="none"><ellipse cx="552.20" cy="1347.40" rx="3.2" ry="3.3" transform="rotate(20 552.20 1347.40)"/><line x1="548.30" y1="1351.30" x2="555.90" y2="1343.70"/></g><rect x="691.90" y="1336.00" width="2.00" height="19.00" fill="#d3d7dc" rx="1"/><rect x="847.90" y="1336.00" width="2.00" height="19.00" fill="#d3d7dc" rx="1"/><rect x="703.90" y="1337.00" width="3.00" height="16.00" fill="#c3f1f6"/><text x="711.90" y="1351.00" font-size="12.4" fill="#23282d" textLength="31.38" lengthAdjust="spacingAndGlyphs">$4.25</text><text x="859.90" y="1351.00" font-size="12.4" fill="#23282d" textLength="32.9" lengthAdjust="spacingAndGlyphs">15.8%</text><rect x="1003.80" y="1336.00" width="2.00" height="19.00" fill="#d3d7dc" rx="1"/><rect x="1159.80" y="1336.00" width="2.00" height="19.00" fill="#d3d7dc" rx="1"/><rect x="1015.80" y="1337.00" width="3.00" height="16.00" fill="#c4f1f6"/><text x="1023.80" y="1351.00" font-size="12.4" fill="#23282d" textLength="31.38" lengthAdjust="spacingAndGlyphs">$0.00</text><text x="1171.80" y="1351.00" font-size="12.4" fill="#23282d" textLength="43.95" lengthAdjust="spacingAndGlyphs">-100.0%</text><rect x="1315.70" y="1336.00" width="2.00" height="19.00" fill="#d3d7dc" rx="1"/><rect x="1471.70" y="1336.00" width="2.00" height="19.00" fill="#d3d7dc" rx="1"/><rect x="1327.70" y="1337.00" width="3.00" height="16.00" fill="#c4f1f6"/><text x="1335.70" y="1351.00" font-size="12.4" fill="#23282d" textLength="31.38" lengthAdjust="spacingAndGlyphs">$0.00</text><g stroke="#bcbfc3" stroke-width="1.15" fill="none"><ellipse cx="1487.90" cy="1347.40" rx="3.2" ry="3.3" transform="rotate(20 1487.90 1347.40)"/><line x1="1484.00" y1="1351.30" x2="1491.60" y2="1343.70"/></g><rect x="1627.60" y="1336.00" width="2.00" height="19.00" fill="#d3d7dc" rx="1"/><rect x="1783.60" y="1336.00" width="2.00" height="19.00" fill="#d3d7dc" rx="1"/><rect x="1639.60" y="1337.00" width="3.00" height="16.00" fill="#c4f1f6"/><text x="1647.60" y="1351.00" font-size="12.4" fill="#23282d" textLength="31.38" lengthAdjust="spacingAndGlyphs">$0.00</text><g stroke="#bcbfc3" stroke-width="1.15" fill="none"><ellipse cx="1799.80" cy="1347.40" rx="3.2" ry="3.3" transform="rotate(20 1799.80 1347.40)"/><line x1="1795.90" y1="1351.30" x2="1803.50" y2="1343.70"/></g><rect x="1939.50" y="1336.00" width="2.00" height="19.00" fill="#d3d7dc" rx="1"/><rect x="2095.50" y="1336.00" width="2.00" height="19.00" fill="#d3d7dc" rx="1"/><rect x="1951.50" y="1337.00" width="3.00" height="16.00" fill="#c4f1f6"/><text x="1959.50" y="1351.00" font-size="12.4" fill="#23282d" textLength="31.38" lengthAdjust="spacingAndGlyphs">$0.00</text><g stroke="#bcbfc3" stroke-width="1.15" fill="none"><ellipse cx="2111.70" cy="1347.40" rx="3.2" ry="3.3" transform="rotate(20 2111.70 1347.40)"/><line x1="2107.80" y1="1351.30" x2="2115.40" y2="1343.70"/></g><rect x="2251.40" y="1336.00" width="2.00" height="19.00" fill="#d3d7dc" rx="1"/><rect x="2407.40" y="1336.00" width="2.00" height="19.00" fill="#d3d7dc" rx="1"/><rect x="2263.40" y="1337.00" width="3.00" height="16.00" fill="#c4f1f6"/><text x="2271.40" y="1351.00" font-size="12.4" fill="#23282d" textLength="31.38" lengthAdjust="spacingAndGlyphs">$0.00</text><g stroke="#bcbfc3" stroke-width="1.15" fill="none"><ellipse cx="2423.60" cy="1347.40" rx="3.2" ry="3.3" transform="rotate(20 2423.60 1347.40)"/><line x1="2419.70" y1="1351.30" x2="2427.30" y2="1343.70"/></g><rect x="2563.30" y="1336.00" width="2.00" height="19.00" fill="#d3d7dc" rx="1"/><rect x="2719.30" y="1336.00" width="2.00" height="19.00" fill="#d3d7dc" rx="1"/><rect x="2575.30" y="1337.00" width="3.00" height="16.00" fill="#c4f1f6"/><text x="2583.30" y="1351.00" font-size="12.4" fill="#23282d" textLength="31.38" lengthAdjust="spacingAndGlyphs">$0.00</text><g stroke="#bcbfc3" stroke-width="1.15" fill="none"><ellipse cx="2735.50" cy="1347.40" rx="3.2" ry="3.3" transform="rotate(20 2735.50 1347.40)"/><line x1="2731.60" y1="1351.30" x2="2739.20" y2="1343.70"/></g><rect x="2875.20" y="1336.00" width="2.00" height="19.00" fill="#d3d7dc" rx="1"/><rect x="3031.20" y="1336.00" width="2.00" height="19.00" fill="#d3d7dc" rx="1"/><rect x="2887.20" y="1337.00" width="3.00" height="16.00" fill="#c4f1f6"/><text x="2895.20" y="1351.00" font-size="12.4" fill="#23282d" textLength="31.38" lengthAdjust="spacingAndGlyphs">$0.00</text><g stroke="#bcbfc3" stroke-width="1.15" fill="none"><ellipse cx="3047.40" cy="1347.40" rx="3.2" ry="3.3" transform="rotate(20 3047.40 1347.40)"/><line x1="3043.50" y1="1351.30" x2="3051.10" y2="1343.70"/></g><text x="53.10" y="1372.00" font-size="12.4" fill="#23282d" text-anchor="end" textLength="10.67" lengthAdjust="spacingAndGlyphs">11</text><rect x="62.00" y="1357.00" width="2.00" height="19.00" fill="#c3c9cf" rx="1"/><text x="74.40" y="1372.00" font-size="12.4" fill="#23282d" textLength="60.64" lengthAdjust="spacingAndGlyphs">Azure DNS</text><rect x="380.00" y="1357.00" width="2.00" height="19.00" fill="#d3d7dc" rx="1"/><rect x="536.00" y="1357.00" width="2.00" height="19.00" fill="#d3d7dc" rx="1"/><rect x="392.00" y="1358.00" width="3.00" height="16.00" fill="#c4f1f6"/><text x="400.00" y="1372.00" font-size="12.4" fill="#23282d" textLength="31.38" lengthAdjust="spacingAndGlyphs">$0.65</text><g stroke="#bcbfc3" stroke-width="1.15" fill="none"><ellipse cx="552.20" cy="1368.40" rx="3.2" ry="3.3" transform="rotate(20 552.20 1368.40)"/><line x1="548.30" y1="1372.30" x2="555.90" y2="1364.70"/></g><rect x="691.90" y="1357.00" width="2.00" height="19.00" fill="#d3d7dc" rx="1"/><rect x="847.90" y="1357.00" width="2.00" height="19.00" fill="#d3d7dc" rx="1"/><rect x="703.90" y="1358.00" width="3.00" height="16.00" fill="#c4f1f6"/><text x="711.90" y="1372.00" font-size="12.4" fill="#23282d" textLength="31.38" lengthAdjust="spacingAndGlyphs">$0.54</text><text x="859.90" y="1372.00" font-size="12.4" fill="#23282d" textLength="36.52" lengthAdjust="spacingAndGlyphs">-15.7%</text><rect x="1003.80" y="1357.00" width="2.00" height="19.00" fill="#d3d7dc" rx="1"/><rect x="1159.80" y="1357.00" width="2.00" height="19.00" fill="#d3d7dc" rx="1"/><rect x="1015.80" y="1358.00" width="3.00" height="16.00" fill="#c4f1f6"/><text x="1023.80" y="1372.00" font-size="12.4" fill="#23282d" textLength="31.38" lengthAdjust="spacingAndGlyphs">$0.00</text><text x="1171.80" y="1372.00" font-size="12.4" fill="#23282d" textLength="43.95" lengthAdjust="spacingAndGlyphs">-100.0%</text><rect x="1315.70" y="1357.00" width="2.00" height="19.00" fill="#d3d7dc" rx="1"/><rect x="1471.70" y="1357.00" width="2.00" height="19.00" fill="#d3d7dc" rx="1"/><rect x="1327.70" y="1358.00" width="3.00" height="16.00" fill="#c4f1f6"/><text x="1335.70" y="1372.00" font-size="12.4" fill="#23282d" textLength="31.38" lengthAdjust="spacingAndGlyphs">$0.00</text><g stroke="#bcbfc3" stroke-width="1.15" fill="none"><ellipse cx="1487.90" cy="1368.40" rx="3.2" ry="3.3" transform="rotate(20 1487.90 1368.40)"/><line x1="1484.00" y1="1372.30" x2="1491.60" y2="1364.70"/></g><rect x="1627.60" y="1357.00" width="2.00" height="19.00" fill="#d3d7dc" rx="1"/><rect x="1783.60" y="1357.00" width="2.00" height="19.00" fill="#d3d7dc" rx="1"/><rect x="1639.60" y="1358.00" width="3.00" height="16.00" fill="#c4f1f6"/><text x="1647.60" y="1372.00" font-size="12.4" fill="#23282d" textLength="31.38" lengthAdjust="spacingAndGlyphs">$0.00</text><g stroke="#bcbfc3" stroke-width="1.15" fill="none"><ellipse cx="1799.80" cy="1368.40" rx="3.2" ry="3.3" transform="rotate(20 1799.80 1368.40)"/><line x1="1795.90" y1="1372.30" x2="1803.50" y2="1364.70"/></g><rect x="1939.50" y="1357.00" width="2.00" height="19.00" fill="#d3d7dc" rx="1"/><rect x="2095.50" y="1357.00" width="2.00" height="19.00" fill="#d3d7dc" rx="1"/><rect x="1951.50" y="1358.00" width="3.00" height="16.00" fill="#c4f1f6"/><text x="1959.50" y="1372.00" font-size="12.4" fill="#23282d" textLength="31.38" lengthAdjust="spacingAndGlyphs">$0.00</text><g stroke="#bcbfc3" stroke-width="1.15" fill="none"><ellipse cx="2111.70" cy="1368.40" rx="3.2" ry="3.3" transform="rotate(20 2111.70 1368.40)"/><line x1="2107.80" y1="1372.30" x2="2115.40" y2="1364.70"/></g><rect x="2251.40" y="1357.00" width="2.00" height="19.00" fill="#d3d7dc" rx="1"/><rect x="2407.40" y="1357.00" width="2.00" height="19.00" fill="#d3d7dc" rx="1"/><rect x="2263.40" y="1358.00" width="3.00" height="16.00" fill="#c4f1f6"/><text x="2271.40" y="1372.00" font-size="12.4" fill="#23282d" textLength="31.38" lengthAdjust="spacingAndGlyphs">$0.00</text><g stroke="#bcbfc3" stroke-width="1.15" fill="none"><ellipse cx="2423.60" cy="1368.40" rx="3.2" ry="3.3" transform="rotate(20 2423.60 1368.40)"/><line x1="2419.70" y1="1372.30" x2="2427.30" y2="1364.70"/></g><rect x="2563.30" y="1357.00" width="2.00" height="19.00" fill="#d3d7dc" rx="1"/><rect x="2719.30" y="1357.00" width="2.00" height="19.00" fill="#d3d7dc" rx="1"/><rect x="2575.30" y="1358.00" width="3.00" height="16.00" fill="#c4f1f6"/><text x="2583.30" y="1372.00" font-size="12.4" fill="#23282d" textLength="31.38" lengthAdjust="spacingAndGlyphs">$0.00</text><g stroke="#bcbfc3" stroke-width="1.15" fill="none"><ellipse cx="2735.50" cy="1368.40" rx="3.2" ry="3.3" transform="rotate(20 2735.50 1368.40)"/><line x1="2731.60" y1="1372.30" x2="2739.20" y2="1364.70"/></g><rect x="2875.20" y="1357.00" width="2.00" height="19.00" fill="#d3d7dc" rx="1"/><rect x="3031.20" y="1357.00" width="2.00" height="19.00" fill="#d3d7dc" rx="1"/><rect x="2887.20" y="1358.00" width="3.00" height="16.00" fill="#c4f1f6"/><text x="2895.20" y="1372.00" font-size="12.4" fill="#23282d" textLength="31.38" lengthAdjust="spacingAndGlyphs">$0.00</text><g stroke="#bcbfc3" stroke-width="1.15" fill="none"><ellipse cx="3047.40" cy="1368.40" rx="3.2" ry="3.3" transform="rotate(20 3047.40 1368.40)"/><line x1="3043.50" y1="1372.30" x2="3051.10" y2="1364.70"/></g><text x="53.10" y="1393.00" font-size="12.4" fill="#23282d" text-anchor="end" textLength="12.77" lengthAdjust="spacingAndGlyphs">12</text><rect x="62.00" y="1378.00" width="2.00" height="19.00" fill="#c3c9cf" rx="1"/><text x="74.40" y="1393.00" font-size="12.4" fill="#23282d" textLength="53.24" lengthAdjust="spacingAndGlyphs">Key Vault</text><rect x="380.00" y="1378.00" width="2.00" height="19.00" fill="#d3d7dc" rx="1"/><rect x="536.00" y="1378.00" width="2.00" height="19.00" fill="#d3d7dc" rx="1"/><rect x="392.00" y="1379.00" width="3.00" height="16.00" fill="#c4f1f6"/><text x="400.00" y="1393.00" font-size="12.4" fill="#23282d" textLength="31.38" lengthAdjust="spacingAndGlyphs">$0.08</text><g stroke="#bcbfc3" stroke-width="1.15" fill="none"><ellipse cx="552.20" cy="1389.40" rx="3.2" ry="3.3" transform="rotate(20 552.20 1389.40)"/><line x1="548.30" y1="1393.30" x2="555.90" y2="1385.70"/></g><rect x="691.90" y="1378.00" width="2.00" height="19.00" fill="#d3d7dc" rx="1"/><rect x="847.90" y="1378.00" width="2.00" height="19.00" fill="#d3d7dc" rx="1"/><rect x="703.90" y="1379.00" width="3.00" height="16.00" fill="#c4f1f6"/><text x="711.90" y="1393.00" font-size="12.4" fill="#23282d" textLength="31.38" lengthAdjust="spacingAndGlyphs">$0.64</text><text x="859.90" y="1393.00" font-size="12.4" fill="#23282d" textLength="40.33" lengthAdjust="spacingAndGlyphs">691.0%</text><rect x="1003.80" y="1378.00" width="2.00" height="19.00" fill="#d3d7dc" rx="1"/><rect x="1159.80" y="1378.00" width="2.00" height="19.00" fill="#d3d7dc" rx="1"/><rect x="1015.80" y="1379.00" width="3.00" height="16.00" fill="#c4f1f6"/><text x="1023.80" y="1393.00" font-size="12.4" fill="#23282d" textLength="31.38" lengthAdjust="spacingAndGlyphs">$0.00</text><text x="1171.80" y="1393.00" font-size="12.4" fill="#23282d" textLength="43.95" lengthAdjust="spacingAndGlyphs">-100.0%</text><rect x="1315.70" y="1378.00" width="2.00" height="19.00" fill="#d3d7dc" rx="1"/><rect x="1471.70" y="1378.00" width="2.00" height="19.00" fill="#d3d7dc" rx="1"/><rect x="1327.70" y="1379.00" width="3.00" height="16.00" fill="#c4f1f6"/><text x="1335.70" y="1393.00" font-size="12.4" fill="#23282d" textLength="31.38" lengthAdjust="spacingAndGlyphs">$0.00</text><g stroke="#bcbfc3" stroke-width="1.15" fill="none"><ellipse cx="1487.90" cy="1389.40" rx="3.2" ry="3.3" transform="rotate(20 1487.90 1389.40)"/><line x1="1484.00" y1="1393.30" x2="1491.60" y2="1385.70"/></g><rect x="1627.60" y="1378.00" width="2.00" height="19.00" fill="#d3d7dc" rx="1"/><rect x="1783.60" y="1378.00" width="2.00" height="19.00" fill="#d3d7dc" rx="1"/><rect x="1639.60" y="1379.00" width="3.00" height="16.00" fill="#c4f1f6"/><text x="1647.60" y="1393.00" font-size="12.4" fill="#23282d" textLength="31.38" lengthAdjust="spacingAndGlyphs">$0.00</text><g stroke="#bcbfc3" stroke-width="1.15" fill="none"><ellipse cx="1799.80" cy="1389.40" rx="3.2" ry="3.3" transform="rotate(20 1799.80 1389.40)"/><line x1="1795.90" y1="1393.30" x2="1803.50" y2="1385.70"/></g><rect x="1939.50" y="1378.00" width="2.00" height="19.00" fill="#d3d7dc" rx="1"/><rect x="2095.50" y="1378.00" width="2.00" height="19.00" fill="#d3d7dc" rx="1"/><rect x="1951.50" y="1379.00" width="3.00" height="16.00" fill="#c4f1f6"/><text x="1959.50" y="1393.00" font-size="12.4" fill="#23282d" textLength="31.38" lengthAdjust="spacingAndGlyphs">$0.00</text><g stroke="#bcbfc3" stroke-width="1.15" fill="none"><ellipse cx="2111.70" cy="1389.40" rx="3.2" ry="3.3" transform="rotate(20 2111.70 1389.40)"/><line x1="2107.80" y1="1393.30" x2="2115.40" y2="1385.70"/></g><rect x="2251.40" y="1378.00" width="2.00" height="19.00" fill="#d3d7dc" rx="1"/><rect x="2407.40" y="1378.00" width="2.00" height="19.00" fill="#d3d7dc" rx="1"/><rect x="2263.40" y="1379.00" width="3.00" height="16.00" fill="#c4f1f6"/><text x="2271.40" y="1393.00" font-size="12.4" fill="#23282d" textLength="31.38" lengthAdjust="spacingAndGlyphs">$0.00</text><g stroke="#bcbfc3" stroke-width="1.15" fill="none"><ellipse cx="2423.60" cy="1389.40" rx="3.2" ry="3.3" transform="rotate(20 2423.60 1389.40)"/><line x1="2419.70" y1="1393.30" x2="2427.30" y2="1385.70"/></g><rect x="2563.30" y="1378.00" width="2.00" height="19.00" fill="#d3d7dc" rx="1"/><rect x="2719.30" y="1378.00" width="2.00" height="19.00" fill="#d3d7dc" rx="1"/><rect x="2575.30" y="1379.00" width="3.00" height="16.00" fill="#c4f1f6"/><text x="2583.30" y="1393.00" font-size="12.4" fill="#23282d" textLength="31.38" lengthAdjust="spacingAndGlyphs">$0.00</text><g stroke="#bcbfc3" stroke-width="1.15" fill="none"><ellipse cx="2735.50" cy="1389.40" rx="3.2" ry="3.3" transform="rotate(20 2735.50 1389.40)"/><line x1="2731.60" y1="1393.30" x2="2739.20" y2="1385.70"/></g><rect x="2875.20" y="1378.00" width="2.00" height="19.00" fill="#d3d7dc" rx="1"/><rect x="3031.20" y="1378.00" width="2.00" height="19.00" fill="#d3d7dc" rx="1"/><rect x="2887.20" y="1379.00" width="3.00" height="16.00" fill="#c4f1f6"/><text x="2895.20" y="1393.00" font-size="12.4" fill="#23282d" textLength="31.38" lengthAdjust="spacingAndGlyphs">$0.00</text><g stroke="#bcbfc3" stroke-width="1.15" fill="none"><ellipse cx="3047.40" cy="1389.40" rx="3.2" ry="3.3" transform="rotate(20 3047.40 1389.40)"/><line x1="3043.50" y1="1393.30" x2="3051.10" y2="1385.70"/></g><text x="53.10" y="1414.00" font-size="12.4" fill="#23282d" text-anchor="end" textLength="12.77" lengthAdjust="spacingAndGlyphs">13</text><rect x="62.00" y="1399.00" width="2.00" height="19.00" fill="#c3c9cf" rx="1"/><text x="74.40" y="1414.00" font-size="12.4" fill="#23282d" textLength="101.75" lengthAdjust="spacingAndGlyphs">App Configuration</text><rect x="380.00" y="1399.00" width="2.00" height="19.00" fill="#d3d7dc" rx="1"/><rect x="536.00" y="1399.00" width="2.00" height="19.00" fill="#d3d7dc" rx="1"/><rect x="392.00" y="1400.00" width="3.00" height="16.00" fill="#c4f1f6"/><text x="400.00" y="1414.00" font-size="12.4" fill="#23282d" textLength="31.38" lengthAdjust="spacingAndGlyphs">$0.00</text><g stroke="#bcbfc3" stroke-width="1.15" fill="none"><ellipse cx="552.20" cy="1410.40" rx="3.2" ry="3.3" transform="rotate(20 552.20 1410.40)"/><line x1="548.30" y1="1414.30" x2="555.90" y2="1406.70"/></g><rect x="691.90" y="1399.00" width="2.00" height="19.00" fill="#d3d7dc" rx="1"/><rect x="847.90" y="1399.00" width="2.00" height="19.00" fill="#d3d7dc" rx="1"/><rect x="703.90" y="1400.00" width="3.00" height="16.00" fill="#c4f1f6"/><text x="711.90" y="1414.00" font-size="12.4" fill="#23282d" textLength="31.38" lengthAdjust="spacingAndGlyphs">$0.00</text><g stroke="#bcbfc3" stroke-width="1.15" fill="none"><ellipse cx="864.10" cy="1410.40" rx="3.2" ry="3.3" transform="rotate(20 864.10 1410.40)"/><line x1="860.20" y1="1414.30" x2="867.80" y2="1406.70"/></g><rect x="1003.80" y="1399.00" width="2.00" height="19.00" fill="#d3d7dc" rx="1"/><rect x="1159.80" y="1399.00" width="2.00" height="19.00" fill="#d3d7dc" rx="1"/><rect x="1015.80" y="1400.00" width="3.00" height="16.00" fill="#c4f1f6"/><text x="1023.80" y="1414.00" font-size="12.4" fill="#23282d" textLength="31.38" lengthAdjust="spacingAndGlyphs">$0.00</text><g stroke="#bcbfc3" stroke-width="1.15" fill="none"><ellipse cx="1176.00" cy="1410.40" rx="3.2" ry="3.3" transform="rotate(20 1176.00 1410.40)"/><line x1="1172.10" y1="1414.30" x2="1179.70" y2="1406.70"/></g><rect x="1315.70" y="1399.00" width="2.00" height="19.00" fill="#d3d7dc" rx="1"/><rect x="1471.70" y="1399.00" width="2.00" height="19.00" fill="#d3d7dc" rx="1"/><rect x="1327.70" y="1400.00" width="3.00" height="16.00" fill="#c4f1f6"/><text x="1335.70" y="1414.00" font-size="12.4" fill="#23282d" textLength="31.38" lengthAdjust="spacingAndGlyphs">$0.00</text><g stroke="#bcbfc3" stroke-width="1.15" fill="none"><ellipse cx="1487.90" cy="1410.40" rx="3.2" ry="3.3" transform="rotate(20 1487.90 1410.40)"/><line x1="1484.00" y1="1414.30" x2="1491.60" y2="1406.70"/></g><rect x="1627.60" y="1399.00" width="2.00" height="19.00" fill="#d3d7dc" rx="1"/><rect x="1783.60" y="1399.00" width="2.00" height="19.00" fill="#d3d7dc" rx="1"/><rect x="1639.60" y="1400.00" width="3.00" height="16.00" fill="#c4f1f6"/><text x="1647.60" y="1414.00" font-size="12.4" fill="#23282d" textLength="31.38" lengthAdjust="spacingAndGlyphs">$0.00</text><g stroke="#bcbfc3" stroke-width="1.15" fill="none"><ellipse cx="1799.80" cy="1410.40" rx="3.2" ry="3.3" transform="rotate(20 1799.80 1410.40)"/><line x1="1795.90" y1="1414.30" x2="1803.50" y2="1406.70"/></g><rect x="1939.50" y="1399.00" width="2.00" height="19.00" fill="#d3d7dc" rx="1"/><rect x="2095.50" y="1399.00" width="2.00" height="19.00" fill="#d3d7dc" rx="1"/><rect x="1951.50" y="1400.00" width="3.00" height="16.00" fill="#c4f1f6"/><text x="1959.50" y="1414.00" font-size="12.4" fill="#23282d" textLength="31.38" lengthAdjust="spacingAndGlyphs">$0.00</text><g stroke="#bcbfc3" stroke-width="1.15" fill="none"><ellipse cx="2111.70" cy="1410.40" rx="3.2" ry="3.3" transform="rotate(20 2111.70 1410.40)"/><line x1="2107.80" y1="1414.30" x2="2115.40" y2="1406.70"/></g><rect x="2251.40" y="1399.00" width="2.00" height="19.00" fill="#d3d7dc" rx="1"/><rect x="2407.40" y="1399.00" width="2.00" height="19.00" fill="#d3d7dc" rx="1"/><rect x="2263.40" y="1400.00" width="3.00" height="16.00" fill="#c4f1f6"/><text x="2271.40" y="1414.00" font-size="12.4" fill="#23282d" textLength="31.38" lengthAdjust="spacingAndGlyphs">$0.00</text><g stroke="#bcbfc3" stroke-width="1.15" fill="none"><ellipse cx="2423.60" cy="1410.40" rx="3.2" ry="3.3" transform="rotate(20 2423.60 1410.40)"/><line x1="2419.70" y1="1414.30" x2="2427.30" y2="1406.70"/></g><rect x="2563.30" y="1399.00" width="2.00" height="19.00" fill="#d3d7dc" rx="1"/><rect x="2719.30" y="1399.00" width="2.00" height="19.00" fill="#d3d7dc" rx="1"/><rect x="2575.30" y="1400.00" width="3.00" height="16.00" fill="#c4f1f6"/><text x="2583.30" y="1414.00" font-size="12.4" fill="#23282d" textLength="31.38" lengthAdjust="spacingAndGlyphs">$0.00</text><g stroke="#bcbfc3" stroke-width="1.15" fill="none"><ellipse cx="2735.50" cy="1410.40" rx="3.2" ry="3.3" transform="rotate(20 2735.50 1410.40)"/><line x1="2731.60" y1="1414.30" x2="2739.20" y2="1406.70"/></g><rect x="2875.20" y="1399.00" width="2.00" height="19.00" fill="#d3d7dc" rx="1"/><rect x="3031.20" y="1399.00" width="2.00" height="19.00" fill="#d3d7dc" rx="1"/><rect x="2887.20" y="1400.00" width="3.00" height="16.00" fill="#c4f1f6"/><text x="2895.20" y="1414.00" font-size="12.4" fill="#23282d" textLength="31.38" lengthAdjust="spacingAndGlyphs">$0.00</text><g stroke="#bcbfc3" stroke-width="1.15" fill="none"><ellipse cx="3047.40" cy="1410.40" rx="3.2" ry="3.3" transform="rotate(20 3047.40 1410.40)"/><line x1="3043.50" y1="1414.30" x2="3051.10" y2="1406.70"/></g></svg></div><div class="c" style="left:14px;top:1422px;width:3176px;height:338px"><svg width="3176" height="338" viewBox="14 1422 3176 338"><text x="1439.20" y="1451.90" font-size="18.3" fill="#0d1a2b" textLength="237.6" lengthAdjust="spacingAndGlyphs">Monthly Cost by Instance ID</text><circle cx="1695.20" cy="1446.90" r="7.1" stroke="#344056" stroke-width="1.3" fill="none"/><rect x="1694.20" y="1443.00" width="2" height="1.9" fill="#344056"/><rect x="1694.20" y="1446.10" width="2" height="4.8" fill="#344056"/><rect x="14.00" y="1531.00" width="3176.00" height="21.00" fill="#f9f9fa"/><rect x="14.00" y="1573.00" width="3176.00" height="21.00" fill="#f9f9fa"/><rect x="14.00" y="1615.00" width="3176.00" height="21.00" fill="#f9f9fa"/><rect x="14.00" y="1657.00" width="3176.00" height="21.00" fill="#f9f9fa"/><rect x="14.00" y="1699.00" width="3176.00" height="21.00" fill="#f9f9fa"/><rect x="62.00" y="1466.00" width="2.00" height="44.00" fill="#b9c0c7"/><rect x="14.00" y="1488.00" width="3176.00" height="2.00" fill="#b9c0c7"/><rect x="14.00" y="1508.00" width="3176.00" height="2.00" fill="#b9c0c7"/><text x="72.30" y="1482.00" font-size="12.2" font-weight="700" fill="#1f252b" textLength="100.64" lengthAdjust="spacingAndGlyphs">Start Time Month</text><text x="72.30" y="1501.80" font-size="12.2" font-weight="700" fill="#1f252b" textLength="103.49" lengthAdjust="spacingAndGlyphs">Azure Instance ID</text><path d="M616.9,1474.6 L611.9,1478.65 L616.9,1482.7" fill="none" stroke="#6b7178" stroke-width="1.1"/><rect x="634.00" y="1472.00" width="2.00" height="10.00" fill="#d9dde1"/><text x="642.50" y="1480.10" font-size="12.2" font-weight="700" fill="#1f252b" textLength="48.84" lengthAdjust="spacingAndGlyphs">2021-07</text><text x="642.50" y="1501.80" font-size="12.2" font-weight="700" fill="#1f252b" textLength="60.24" lengthAdjust="spacingAndGlyphs">Total Cost</text><rect x="918.00" y="1472.00" width="2.00" height="10.00" fill="#d9dde1"/><text x="926.50" y="1480.10" font-size="12.2" font-weight="700" fill="#1f252b" textLength="48.84" lengthAdjust="spacingAndGlyphs">2021-06</text><text x="926.50" y="1501.80" font-size="12.2" font-weight="700" fill="#1f252b" textLength="60.24" lengthAdjust="spacingAndGlyphs">Total Cost</text><rect x="1202.00" y="1472.00" width="2.00" height="10.00" fill="#d9dde1"/><text x="1210.50" y="1480.10" font-size="12.2" font-weight="700" fill="#1f252b" textLength="48.84" lengthAdjust="spacingAndGlyphs">2021-05</text><text x="1210.50" y="1501.80" font-size="12.2" font-weight="700" fill="#1f252b" textLength="60.24" lengthAdjust="spacingAndGlyphs">Total Cost</text><rect x="1486.00" y="1472.00" width="2.00" height="10.00" fill="#d9dde1"/><text x="1494.50" y="1480.10" font-size="12.2" font-weight="700" fill="#1f252b" textLength="48.84" lengthAdjust="spacingAndGlyphs">2021-04</text><text x="1494.50" y="1501.80" font-size="12.2" font-weight="700" fill="#1f252b" textLength="60.24" lengthAdjust="spacingAndGlyphs">Total Cost</text><rect x="1770.00" y="1472.00" width="2.00" height="10.00" fill="#d9dde1"/><text x="1778.50" y="1480.10" font-size="12.2" font-weight="700" fill="#1f252b" textLength="48.84" lengthAdjust="spacingAndGlyphs">2021-03</text><text x="1778.50" y="1501.80" font-size="12.2" font-weight="700" fill="#1f252b" textLength="60.24" lengthAdjust="spacingAndGlyphs">Total Cost</text><rect x="2054.00" y="1472.00" width="2.00" height="10.00" fill="#d9dde1"/><text x="2062.50" y="1480.10" font-size="12.2" font-weight="700" fill="#1f252b" textLength="48.84" lengthAdjust="spacingAndGlyphs">2021-02</text><text x="2062.50" y="1501.80" font-size="12.2" font-weight="700" fill="#1f252b" textLength="60.24" lengthAdjust="spacingAndGlyphs">Total Cost</text><rect x="2338.00" y="1472.00" width="2.00" height="10.00" fill="#d9dde1"/><text x="2346.50" y="1480.10" font-size="12.2" font-weight="700" fill="#1f252b" textLength="48.84" lengthAdjust="spacingAndGlyphs">2021-01</text><text x="2346.50" y="1501.80" font-size="12.2" font-weight="700" fill="#1f252b" textLength="60.24" lengthAdjust="spacingAndGlyphs">Total Cost</text><rect x="2622.00" y="1472.00" width="2.00" height="10.00" fill="#d9dde1"/><text x="2630.50" y="1480.10" font-size="12.2" font-weight="700" fill="#1f252b" textLength="48.84" lengthAdjust="spacingAndGlyphs">2020-12</text><text x="2630.50" y="1501.80" font-size="12.2" font-weight="700" fill="#1f252b" textLength="60.24" lengthAdjust="spacingAndGlyphs">Total Cost</text><rect x="2906.00" y="1472.00" width="2.00" height="10.00" fill="#d9dde1"/><text x="2914.50" y="1480.10" font-size="12.2" font-weight="700" fill="#1f252b" textLength="48.84" lengthAdjust="spacingAndGlyphs">2020-11</text><text x="2914.50" y="1501.80" font-size="12.2" font-weight="700" fill="#1f252b" textLength="60.24" lengthAdjust="spacingAndGlyphs">Total Cost</text><text x="53.10" y="1525.80" font-size="12.4" fill="#23282d" text-anchor="end" textLength="5.33" lengthAdjust="spacingAndGlyphs">1</text><rect x="62.00" y="1511.00" width="2.00" height="19.00" fill="#c3c9cf" rx="1"/><text x="74.40" y="1525.80" font-size="12.4" fill="#23282d" textLength="546.6" lengthAdjust="spacingAndGlyphs">/subscriptions/12d2db62-5aa9-471d-84bb-faa489b3e319/resourcegroups/devappservicereso...</text><rect x="632.00" y="1511.00" width="2.00" height="19.00" fill="#d3d7dc" rx="1"/><rect x="644.00" y="1512.00" width="188.14" height="16.00" fill="#489da8"/><text x="837.14" y="1525.80" font-size="12.4" fill="#23282d" textLength="44.15" lengthAdjust="spacingAndGlyphs">$153.90</text><rect x="916.00" y="1511.00" width="2.00" height="19.00" fill="#d3d7dc" rx="1"/><rect x="928.00" y="1512.00" width="13.94" height="16.00" fill="#b5ebf1"/><text x="946.94" y="1525.80" font-size="12.4" fill="#23282d" textLength="34.61" lengthAdjust="spacingAndGlyphs">$11.40</text><rect x="1200.00" y="1511.00" width="2.00" height="19.00" fill="#d3d7dc" rx="1"/><g stroke="#bcbfc3" stroke-width="1.15" fill="none"><ellipse cx="1223.70" cy="1522.20" rx="3.2" ry="3.3" transform="rotate(20 1223.70 1522.20)"/><line x1="1219.80" y1="1526.10" x2="1227.40" y2="1518.50"/></g><rect x="1484.00" y="1511.00" width="2.00" height="19.00" fill="#d3d7dc" rx="1"/><rect x="1496.00" y="1512.00" width="3.00" height="16.00" fill="#c4f1f6"/><text x="1504.00" y="1525.80" font-size="12.4" fill="#23282d" textLength="31.38" lengthAdjust="spacingAndGlyphs">$0.00</text><rect x="1768.00" y="1511.00" width="2.00" height="19.00" fill="#d3d7dc" rx="1"/><rect x="1780.00" y="1512.00" width="3.00" height="16.00" fill="#c4f1f6"/><text x="1788.00" y="1525.80" font-size="12.4" fill="#23282d" textLength="31.38" lengthAdjust="spacingAndGlyphs">$0.00</text><rect x="2052.00" y="1511.00" width="2.00" height="19.00" fill="#d3d7dc" rx="1"/><rect x="2064.00" y="1512.00" width="3.00" height="16.00" fill="#c4f1f6"/><text x="2072.00" y="1525.80" font-size="12.4" fill="#23282d" textLength="31.38" lengthAdjust="spacingAndGlyphs">$0.00</text><rect x="2336.00" y="1511.00" width="2.00" height="19.00" fill="#d3d7dc" rx="1"/><rect x="2348.00" y="1512.00" width="3.00" height="16.00" fill="#c4f1f6"/><text x="2356.00" y="1525.80" font-size="12.4" fill="#23282d" textLength="31.38" lengthAdjust="spacingAndGlyphs">$0.00</text><rect x="2620.00" y="1511.00" width="2.00" height="19.00" fill="#d3d7dc" rx="1"/><g stroke="#bcbfc3" stroke-width="1.15" fill="none"><ellipse cx="2643.70" cy="1522.20" rx="3.2" ry="3.3" transform="rotate(20 2643.70 1522.20)"/><line x1="2639.80" y1="1526.10" x2="2647.40" y2="1518.50"/></g><rect x="2904.00" y="1511.00" width="2.00" height="19.00" fill="#d3d7dc" rx="1"/><g stroke="#bcbfc3" stroke-width="1.15" fill="none"><ellipse cx="2927.70" cy="1522.20" rx="3.2" ry="3.3" transform="rotate(20 2927.70 1522.20)"/><line x1="2923.80" y1="1526.10" x2="2931.40" y2="1518.50"/></g><text x="53.10" y="1546.80" font-size="12.4" fill="#23282d" text-anchor="end" textLength="7.44" lengthAdjust="spacingAndGlyphs">2</text><rect x="62.00" y="1532.00" width="2.00" height="19.00" fill="#c3c9cf" rx="1"/><text x="74.40" y="1546.80" font-size="12.4" fill="#23282d" textLength="546.6" lengthAdjust="spacingAndGlyphs">/subscriptions/20d6a917-99fa-4b1b-9b2e-a3d624e9dcf0/providers/Microsoft.Security/pricing...</text><rect x="632.00" y="1532.00" width="2.00" height="19.00" fill="#d3d7dc" rx="1"/><rect x="644.00" y="1533.00" width="174.74" height="16.00" fill="#4ba3af"/><text x="823.74" y="1546.80" font-size="12.4" fill="#23282d" textLength="44.15" lengthAdjust="spacingAndGlyphs">$142.94</text><rect x="916.00" y="1532.00" width="2.00" height="19.00" fill="#d3d7dc" rx="1"/><rect x="928.00" y="1533.00" width="201.71" height="16.00" fill="#4597a2"/><text x="1134.71" y="1546.80" font-size="12.4" fill="#23282d" textLength="44.15" lengthAdjust="spacingAndGlyphs">$165.00</text><rect x="1200.00" y="1532.00" width="2.00" height="19.00" fill="#d3d7dc" rx="1"/><rect x="1212.00" y="1533.00" width="3.00" height="16.00" fill="#c4f1f6"/><text x="1220.00" y="1546.80" font-size="12.4" fill="#23282d" textLength="31.38" lengthAdjust="spacingAndGlyphs">$0.00</text><rect x="1484.00" y="1532.00" width="2.00" height="19.00" fill="#d3d7dc" rx="1"/><rect x="1496.00" y="1533.00" width="3.00" height="16.00" fill="#c4f1f6"/><text x="1504.00" y="1546.80" font-size="12.4" fill="#23282d" textLength="31.38" lengthAdjust="spacingAndGlyphs">$0.00</text><rect x="1768.00" y="1532.00" width="2.00" height="19.00" fill="#d3d7dc" rx="1"/><rect x="1780.00" y="1533.00" width="3.00" height="16.00" fill="#c4f1f6"/><text x="1788.00" y="1546.80" font-size="12.4" fill="#23282d" textLength="31.38" lengthAdjust="spacingAndGlyphs">$0.00</text><rect x="2052.00" y="1532.00" width="2.00" height="19.00" fill="#d3d7dc" rx="1"/><rect x="2064.00" y="1533.00" width="3.00" height="16.00" fill="#c4f1f6"/><text x="2072.00" y="1546.80" font-size="12.4" fill="#23282d" textLength="31.38" lengthAdjust="spacingAndGlyphs">$0.00</text><rect x="2336.00" y="1532.00" width="2.00" height="19.00" fill="#d3d7dc" rx="1"/><rect x="2348.00" y="1533.00" width="3.00" height="16.00" fill="#c4f1f6"/><text x="2356.00" y="1546.80" font-size="12.4" fill="#23282d" textLength="31.38" lengthAdjust="spacingAndGlyphs">$0.00</text><rect x="2620.00" y="1532.00" width="2.00" height="19.00" fill="#d3d7dc" rx="1"/><rect x="2632.00" y="1533.00" width="3.00" height="16.00" fill="#c4f1f6"/><text x="2640.00" y="1546.80" font-size="12.4" fill="#23282d" textLength="31.38" lengthAdjust="spacingAndGlyphs">$0.00</text><rect x="2904.00" y="1532.00" width="2.00" height="19.00" fill="#d3d7dc" rx="1"/><rect x="2916.00" y="1533.00" width="3.00" height="16.00" fill="#c4f1f6"/><text x="2924.00" y="1546.80" font-size="12.4" fill="#23282d" textLength="31.38" lengthAdjust="spacingAndGlyphs">$0.00</text><text x="53.10" y="1567.80" font-size="12.4" fill="#23282d" text-anchor="end" textLength="7.44" lengthAdjust="spacingAndGlyphs">3</text><rect x="62.00" y="1553.00" width="2.00" height="19.00" fill="#c3c9cf" rx="1"/><text x="74.40" y="1567.80" font-size="12.4" fill="#23282d" textLength="546.6" lengthAdjust="spacingAndGlyphs">/subscriptions/12d2db62-5aa9-471d-84bb-faa489b3e319/resourceGroups/MC_CSE-TEST_CS...</text><rect x="632.00" y="1553.00" width="2.00" height="19.00" fill="#d3d7dc" rx="1"/><rect x="644.00" y="1554.00" width="173.47" height="16.00" fill="#4ba3af"/><text x="822.47" y="1567.80" font-size="12.4" fill="#23282d" textLength="42.04" lengthAdjust="spacingAndGlyphs">$141.90</text><rect x="916.00" y="1553.00" width="2.00" height="19.00" fill="#d3d7dc" rx="1"/><rect x="928.00" y="1554.00" width="12.85" height="16.00" fill="#b7ebf1"/><text x="945.85" y="1567.80" font-size="12.4" fill="#23282d" textLength="34.61" lengthAdjust="spacingAndGlyphs">$10.51</text><rect x="1200.00" y="1553.00" width="2.00" height="19.00" fill="#d3d7dc" rx="1"/><g stroke="#bcbfc3" stroke-width="1.15" fill="none"><ellipse cx="1223.70" cy="1564.20" rx="3.2" ry="3.3" transform="rotate(20 1223.70 1564.20)"/><line x1="1219.80" y1="1568.10" x2="1227.40" y2="1560.50"/></g><rect x="1484.00" y="1553.00" width="2.00" height="19.00" fill="#d3d7dc" rx="1"/><g stroke="#bcbfc3" stroke-width="1.15" fill="none"><ellipse cx="1507.70" cy="1564.20" rx="3.2" ry="3.3" transform="rotate(20 1507.70 1564.20)"/><line x1="1503.80" y1="1568.10" x2="1511.40" y2="1560.50"/></g><rect x="1768.00" y="1553.00" width="2.00" height="19.00" fill="#d3d7dc" rx="1"/><g stroke="#bcbfc3" stroke-width="1.15" fill="none"><ellipse cx="1791.70" cy="1564.20" rx="3.2" ry="3.3" transform="rotate(20 1791.70 1564.20)"/><line x1="1787.80" y1="1568.10" x2="1795.40" y2="1560.50"/></g><rect x="2052.00" y="1553.00" width="2.00" height="19.00" fill="#d3d7dc" rx="1"/><g stroke="#bcbfc3" stroke-width="1.15" fill="none"><ellipse cx="2075.70" cy="1564.20" rx="3.2" ry="3.3" transform="rotate(20 2075.70 1564.20)"/><line x1="2071.80" y1="1568.10" x2="2079.40" y2="1560.50"/></g><rect x="2336.00" y="1553.00" width="2.00" height="19.00" fill="#d3d7dc" rx="1"/><g stroke="#bcbfc3" stroke-width="1.15" fill="none"><ellipse cx="2359.70" cy="1564.20" rx="3.2" ry="3.3" transform="rotate(20 2359.70 1564.20)"/><line x1="2355.80" y1="1568.10" x2="2363.40" y2="1560.50"/></g><rect x="2620.00" y="1553.00" width="2.00" height="19.00" fill="#d3d7dc" rx="1"/><g stroke="#bcbfc3" stroke-width="1.15" fill="none"><ellipse cx="2643.70" cy="1564.20" rx="3.2" ry="3.3" transform="rotate(20 2643.70 1564.20)"/><line x1="2639.80" y1="1568.10" x2="2647.40" y2="1560.50"/></g><rect x="2904.00" y="1553.00" width="2.00" height="19.00" fill="#d3d7dc" rx="1"/><g stroke="#bcbfc3" stroke-width="1.15" fill="none"><ellipse cx="2927.70" cy="1564.20" rx="3.2" ry="3.3" transform="rotate(20 2927.70 1564.20)"/><line x1="2923.80" y1="1568.10" x2="2931.40" y2="1560.50"/></g><text x="53.10" y="1588.80" font-size="12.4" fill="#23282d" text-anchor="end" textLength="7.44" lengthAdjust="spacingAndGlyphs">4</text><rect x="62.00" y="1574.00" width="2.00" height="19.00" fill="#c3c9cf" rx="1"/><text x="74.40" y="1588.80" font-size="12.4" fill="#23282d" textLength="546.6" lengthAdjust="spacingAndGlyphs">/subscriptions/20d6a917-99fa-4b1b-9b2e-a3d624e9dcf0/resourceGroups/MC_CV-TEST_CV_T...</text><rect x="632.00" y="1574.00" width="2.00" height="19.00" fill="#d3d7dc" rx="1"/><rect x="644.00" y="1575.00" width="170.62" height="16.00" fill="#4ca5b1"/><text x="819.62" y="1588.80" font-size="12.4" fill="#23282d" textLength="44.15" lengthAdjust="spacingAndGlyphs">$139.57</text><rect x="916.00" y="1574.00" width="2.00" height="19.00" fill="#d3d7dc" rx="1"/><rect x="928.00" y="1575.00" width="104.46" height="16.00" fill="#5ac1d0"/><text x="1037.46" y="1588.80" font-size="12.4" fill="#23282d" textLength="38.81" lengthAdjust="spacingAndGlyphs">$85.45</text><rect x="1200.00" y="1574.00" width="2.00" height="19.00" fill="#d3d7dc" rx="1"/><g stroke="#bcbfc3" stroke-width="1.15" fill="none"><ellipse cx="1223.70" cy="1585.20" rx="3.2" ry="3.3" transform="rotate(20 1223.70 1585.20)"/><line x1="1219.80" y1="1589.10" x2="1227.40" y2="1581.50"/></g><rect x="1484.00" y="1574.00" width="2.00" height="19.00" fill="#d3d7dc" rx="1"/><g stroke="#bcbfc3" stroke-width="1.15" fill="none"><ellipse cx="1507.70" cy="1585.20" rx="3.2" ry="3.3" transform="rotate(20 1507.70 1585.20)"/><line x1="1503.80" y1="1589.10" x2="1511.40" y2="1581.50"/></g><rect x="1768.00" y="1574.00" width="2.00" height="19.00" fill="#d3d7dc" rx="1"/><g stroke="#bcbfc3" stroke-width="1.15" fill="none"><ellipse cx="1791.70" cy="1585.20" rx="3.2" ry="3.3" transform="rotate(20 1791.70 1585.20)"/><line x1="1787.80" y1="1589.10" x2="1795.40" y2="1581.50"/></g><rect x="2052.00" y="1574.00" width="2.00" height="19.00" fill="#d3d7dc" rx="1"/><g stroke="#bcbfc3" stroke-width="1.15" fill="none"><ellipse cx="2075.70" cy="1585.20" rx="3.2" ry="3.3" transform="rotate(20 2075.70 1585.20)"/><line x1="2071.80" y1="1589.10" x2="2079.40" y2="1581.50"/></g><rect x="2336.00" y="1574.00" width="2.00" height="19.00" fill="#d3d7dc" rx="1"/><g stroke="#bcbfc3" stroke-width="1.15" fill="none"><ellipse cx="2359.70" cy="1585.20" rx="3.2" ry="3.3" transform="rotate(20 2359.70 1585.20)"/><line x1="2355.80" y1="1589.10" x2="2363.40" y2="1581.50"/></g><rect x="2620.00" y="1574.00" width="2.00" height="19.00" fill="#d3d7dc" rx="1"/><g stroke="#bcbfc3" stroke-width="1.15" fill="none"><ellipse cx="2643.70" cy="1585.20" rx="3.2" ry="3.3" transform="rotate(20 2643.70 1585.20)"/><line x1="2639.80" y1="1589.10" x2="2647.40" y2="1581.50"/></g><rect x="2904.00" y="1574.00" width="2.00" height="19.00" fill="#d3d7dc" rx="1"/><g stroke="#bcbfc3" stroke-width="1.15" fill="none"><ellipse cx="2927.70" cy="1585.20" rx="3.2" ry="3.3" transform="rotate(20 2927.70 1585.20)"/><line x1="2923.80" y1="1589.10" x2="2931.40" y2="1581.50"/></g><text x="53.10" y="1609.80" font-size="12.4" fill="#23282d" text-anchor="end" textLength="7.44" lengthAdjust="spacingAndGlyphs">5</text><rect x="62.00" y="1595.00" width="2.00" height="19.00" fill="#c3c9cf" rx="1"/><text x="74.40" y="1609.80" font-size="12.4" fill="#23282d" textLength="546.6" lengthAdjust="spacingAndGlyphs">/subscriptions/12d2db62-5aa9-471d-84bb-faa489b3e319/resourcegroups/devappserviceapir...</text><rect x="632.00" y="1595.00" width="2.00" height="19.00" fill="#d3d7dc" rx="1"/><rect x="644.00" y="1596.00" width="118.83" height="16.00" fill="#57bbc9"/><text x="767.83" y="1609.80" font-size="12.4" fill="#23282d" textLength="38.81" lengthAdjust="spacingAndGlyphs">$97.20</text><rect x="916.00" y="1595.00" width="2.00" height="19.00" fill="#d3d7dc" rx="1"/><rect x="928.00" y="1596.00" width="8.80" height="16.00" fill="#bbedf3"/><text x="941.80" y="1609.80" font-size="12.4" fill="#23282d" textLength="31.38" lengthAdjust="spacingAndGlyphs">$7.20</text><rect x="1200.00" y="1595.00" width="2.00" height="19.00" fill="#d3d7dc" rx="1"/><g stroke="#bcbfc3" stroke-width="1.15" fill="none"><ellipse cx="1223.70" cy="1606.20" rx="3.2" ry="3.3" transform="rotate(20 1223.70 1606.20)"/><line x1="1219.80" y1="1610.10" x2="1227.40" y2="1602.50"/></g><rect x="1484.00" y="1595.00" width="2.00" height="19.00" fill="#d3d7dc" rx="1"/><rect x="1496.00" y="1596.00" width="3.00" height="16.00" fill="#c4f1f6"/><text x="1504.00" y="1609.80" font-size="12.4" fill="#23282d" textLength="31.38" lengthAdjust="spacingAndGlyphs">$0.00</text><rect x="1768.00" y="1595.00" width="2.00" height="19.00" fill="#d3d7dc" rx="1"/><rect x="1780.00" y="1596.00" width="3.00" height="16.00" fill="#c4f1f6"/><text x="1788.00" y="1609.80" font-size="12.4" fill="#23282d" textLength="31.38" lengthAdjust="spacingAndGlyphs">$0.00</text><rect x="2052.00" y="1595.00" width="2.00" height="19.00" fill="#d3d7dc" rx="1"/><rect x="2064.00" y="1596.00" width="3.00" height="16.00" fill="#c4f1f6"/><text x="2072.00" y="1609.80" font-size="12.4" fill="#23282d" textLength="31.38" lengthAdjust="spacingAndGlyphs">$0.00</text><rect x="2336.00" y="1595.00" width="2.00" height="19.00" fill="#d3d7dc" rx="1"/><rect x="2348.00" y="1596.00" width="3.00" height="16.00" fill="#c4f1f6"/><text x="2356.00" y="1609.80" font-size="12.4" fill="#23282d" textLength="31.38" lengthAdjust="spacingAndGlyphs">$0.00</text><rect x="2620.00" y="1595.00" width="2.00" height="19.00" fill="#d3d7dc" rx="1"/><g stroke="#bcbfc3" stroke-width="1.15" fill="none"><ellipse cx="2643.70" cy="1606.20" rx="3.2" ry="3.3" transform="rotate(20 2643.70 1606.20)"/><line x1="2639.80" y1="1610.10" x2="2647.40" y2="1602.50"/></g><rect x="2904.00" y="1595.00" width="2.00" height="19.00" fill="#d3d7dc" rx="1"/><g stroke="#bcbfc3" stroke-width="1.15" fill="none"><ellipse cx="2927.70" cy="1606.20" rx="3.2" ry="3.3" transform="rotate(20 2927.70 1606.20)"/><line x1="2923.80" y1="1610.10" x2="2931.40" y2="1602.50"/></g><text x="53.10" y="1630.80" font-size="12.4" fill="#23282d" text-anchor="end" textLength="7.44" lengthAdjust="spacingAndGlyphs">6</text><rect x="62.00" y="1616.00" width="2.00" height="19.00" fill="#c3c9cf" rx="1"/><text x="74.40" y="1630.80" font-size="12.4" fill="#23282d" textLength="546.6" lengthAdjust="spacingAndGlyphs">/subscriptions/20d6a917-99fa-4b1b-9b2e-a3d624e9dcf0/resourceGroups/KERBEROS/provide...</text><rect x="632.00" y="1616.00" width="2.00" height="19.00" fill="#d3d7dc" rx="1"/><rect x="644.00" y="1617.00" width="98.26" height="16.00" fill="#5ec4d3"/><text x="747.26" y="1630.80" font-size="12.4" fill="#23282d" textLength="38.81" lengthAdjust="spacingAndGlyphs">$80.38</text><rect x="916.00" y="1616.00" width="2.00" height="19.00" fill="#d3d7dc" rx="1"/><rect x="928.00" y="1617.00" width="110.89" height="16.00" fill="#59bfcd"/><text x="1043.89" y="1630.80" font-size="12.4" fill="#23282d" textLength="36.71" lengthAdjust="spacingAndGlyphs">$90.71</text><rect x="1200.00" y="1616.00" width="2.00" height="19.00" fill="#d3d7dc" rx="1"/><rect x="1212.00" y="1617.00" width="3.00" height="16.00" fill="#c4f1f6"/><text x="1220.00" y="1630.80" font-size="12.4" fill="#23282d" textLength="31.38" lengthAdjust="spacingAndGlyphs">$0.00</text><rect x="1484.00" y="1616.00" width="2.00" height="19.00" fill="#d3d7dc" rx="1"/><rect x="1496.00" y="1617.00" width="3.00" height="16.00" fill="#c4f1f6"/><text x="1504.00" y="1630.80" font-size="12.4" fill="#23282d" textLength="31.38" lengthAdjust="spacingAndGlyphs">$0.00</text><rect x="1768.00" y="1616.00" width="2.00" height="19.00" fill="#d3d7dc" rx="1"/><rect x="1780.00" y="1617.00" width="3.00" height="16.00" fill="#c4f1f6"/><text x="1788.00" y="1630.80" font-size="12.4" fill="#23282d" textLength="31.38" lengthAdjust="spacingAndGlyphs">$0.00</text><rect x="2052.00" y="1616.00" width="2.00" height="19.00" fill="#d3d7dc" rx="1"/><rect x="2064.00" y="1617.00" width="3.00" height="16.00" fill="#c4f1f6"/><text x="2072.00" y="1630.80" font-size="12.4" fill="#23282d" textLength="31.38" lengthAdjust="spacingAndGlyphs">$0.00</text><rect x="2336.00" y="1616.00" width="2.00" height="19.00" fill="#d3d7dc" rx="1"/><rect x="2348.00" y="1617.00" width="3.00" height="16.00" fill="#c4f1f6"/><text x="2356.00" y="1630.80" font-size="12.4" fill="#23282d" textLength="31.38" lengthAdjust="spacingAndGlyphs">$0.00</text><rect x="2620.00" y="1616.00" width="2.00" height="19.00" fill="#d3d7dc" rx="1"/><rect x="2632.00" y="1617.00" width="3.00" height="16.00" fill="#c4f1f6"/><text x="2640.00" y="1630.80" font-size="12.4" fill="#23282d" textLength="31.38" lengthAdjust="spacingAndGlyphs">$0.00</text><rect x="2904.00" y="1616.00" width="2.00" height="19.00" fill="#d3d7dc" rx="1"/><rect x="2916.00" y="1617.00" width="3.00" height="16.00" fill="#c4f1f6"/><text x="2924.00" y="1630.80" font-size="12.4" fill="#23282d" textLength="31.38" lengthAdjust="spacingAndGlyphs">$0.00</text><text x="53.10" y="1651.80" font-size="12.4" fill="#23282d" text-anchor="end" textLength="7.44" lengthAdjust="spacingAndGlyphs">7</text><rect x="62.00" y="1637.00" width="2.00" height="19.00" fill="#c3c9cf" rx="1"/><text x="74.40" y="1651.80" font-size="12.4" fill="#23282d" textLength="546.6" lengthAdjust="spacingAndGlyphs">/subscriptions/20d6a917-99fa-4b1b-9b2e-a3d624e9dcf0/resourceGroups/HARNESS-QA/prov...</text><rect x="632.00" y="1637.00" width="2.00" height="19.00" fill="#d3d7dc" rx="1"/><rect x="644.00" y="1638.00" width="85.00" height="16.00" fill="#6ccad8"/><text x="734.00" y="1651.80" font-size="12.4" fill="#23282d" textLength="38.81" lengthAdjust="spacingAndGlyphs">$69.53</text><rect x="916.00" y="1637.00" width="2.00" height="19.00" fill="#d3d7dc" rx="1"/><rect x="928.00" y="1638.00" width="95.94" height="16.00" fill="#60c5d4"/><text x="1028.94" y="1651.80" font-size="12.4" fill="#23282d" textLength="38.81" lengthAdjust="spacingAndGlyphs">$78.48</text><rect x="1200.00" y="1637.00" width="2.00" height="19.00" fill="#d3d7dc" rx="1"/><rect x="1212.00" y="1638.00" width="3.00" height="16.00" fill="#c4f1f6"/><text x="1220.00" y="1651.80" font-size="12.4" fill="#23282d" textLength="31.38" lengthAdjust="spacingAndGlyphs">$0.00</text><rect x="1484.00" y="1637.00" width="2.00" height="19.00" fill="#d3d7dc" rx="1"/><rect x="1496.00" y="1638.00" width="3.00" height="16.00" fill="#c4f1f6"/><text x="1504.00" y="1651.80" font-size="12.4" fill="#23282d" textLength="31.38" lengthAdjust="spacingAndGlyphs">$0.00</text><rect x="1768.00" y="1637.00" width="2.00" height="19.00" fill="#d3d7dc" rx="1"/><rect x="1780.00" y="1638.00" width="3.00" height="16.00" fill="#c4f1f6"/><text x="1788.00" y="1651.80" font-size="12.4" fill="#23282d" textLength="31.38" lengthAdjust="spacingAndGlyphs">$0.00</text><rect x="2052.00" y="1637.00" width="2.00" height="19.00" fill="#d3d7dc" rx="1"/><rect x="2064.00" y="1638.00" width="3.00" height="16.00" fill="#c4f1f6"/><text x="2072.00" y="1651.80" font-size="12.4" fill="#23282d" textLength="31.38" lengthAdjust="spacingAndGlyphs">$0.00</text><rect x="2336.00" y="1637.00" width="2.00" height="19.00" fill="#d3d7dc" rx="1"/><rect x="2348.00" y="1638.00" width="3.00" height="16.00" fill="#c4f1f6"/><text x="2356.00" y="1651.80" font-size="12.4" fill="#23282d" textLength="31.38" lengthAdjust="spacingAndGlyphs">$0.00</text><rect x="2620.00" y="1637.00" width="2.00" height="19.00" fill="#d3d7dc" rx="1"/><rect x="2632.00" y="1638.00" width="3.00" height="16.00" fill="#c4f1f6"/><text x="2640.00" y="1651.80" font-size="12.4" fill="#23282d" textLength="31.38" lengthAdjust="spacingAndGlyphs">$0.00</text><rect x="2904.00" y="1637.00" width="2.00" height="19.00" fill="#d3d7dc" rx="1"/><rect x="2916.00" y="1638.00" width="3.00" height="16.00" fill="#c4f1f6"/><text x="2924.00" y="1651.80" font-size="12.4" fill="#23282d" textLength="31.38" lengthAdjust="spacingAndGlyphs">$0.00</text><text x="53.10" y="1672.80" font-size="12.4" fill="#23282d" text-anchor="end" textLength="7.44" lengthAdjust="spacingAndGlyphs">8</text><rect x="62.00" y="1658.00" width="2.00" height="19.00" fill="#c3c9cf" rx="1"/><text x="74.40" y="1672.80" font-size="12.4" fill="#23282d" textLength="546.6" lengthAdjust="spacingAndGlyphs">/subscriptions/20d6a917-99fa-4b1b-9b2e-a3d624e9dcf0/resourceGroups/HARNESS-QA-SET...</text><rect x="632.00" y="1658.00" width="2.00" height="19.00" fill="#d3d7dc" rx="1"/><rect x="644.00" y="1659.00" width="81.50" height="16.00" fill="#6fccd9"/><text x="730.50" y="1672.80" font-size="12.4" fill="#23282d" textLength="38.81" lengthAdjust="spacingAndGlyphs">$66.67</text><rect x="916.00" y="1658.00" width="2.00" height="19.00" fill="#d3d7dc" rx="1"/><rect x="928.00" y="1659.00" width="91.98" height="16.00" fill="#64c7d5"/><text x="1024.98" y="1672.80" font-size="12.4" fill="#23282d" textLength="38.81" lengthAdjust="spacingAndGlyphs">$75.24</text><rect x="1200.00" y="1658.00" width="2.00" height="19.00" fill="#d3d7dc" rx="1"/><rect x="1212.00" y="1659.00" width="3.00" height="16.00" fill="#c4f1f6"/><text x="1220.00" y="1672.80" font-size="12.4" fill="#23282d" textLength="31.38" lengthAdjust="spacingAndGlyphs">$0.00</text><rect x="1484.00" y="1658.00" width="2.00" height="19.00" fill="#d3d7dc" rx="1"/><rect x="1496.00" y="1659.00" width="3.00" height="16.00" fill="#c4f1f6"/><text x="1504.00" y="1672.80" font-size="12.4" fill="#23282d" textLength="31.38" lengthAdjust="spacingAndGlyphs">$0.00</text><rect x="1768.00" y="1658.00" width="2.00" height="19.00" fill="#d3d7dc" rx="1"/><rect x="1780.00" y="1659.00" width="3.00" height="16.00" fill="#c4f1f6"/><text x="1788.00" y="1672.80" font-size="12.4" fill="#23282d" textLength="31.38" lengthAdjust="spacingAndGlyphs">$0.00</text><rect x="2052.00" y="1658.00" width="2.00" height="19.00" fill="#d3d7dc" rx="1"/><rect x="2064.00" y="1659.00" width="3.00" height="16.00" fill="#c4f1f6"/><text x="2072.00" y="1672.80" font-size="12.4" fill="#23282d" textLength="31.38" lengthAdjust="spacingAndGlyphs">$0.00</text><rect x="2336.00" y="1658.00" width="2.00" height="19.00" fill="#d3d7dc" rx="1"/><rect x="2348.00" y="1659.00" width="3.00" height="16.00" fill="#c4f1f6"/><text x="2356.00" y="1672.80" font-size="12.4" fill="#23282d" textLength="31.38" lengthAdjust="spacingAndGlyphs">$0.00</text><rect x="2620.00" y="1658.00" width="2.00" height="19.00" fill="#d3d7dc" rx="1"/><rect x="2632.00" y="1659.00" width="3.00" height="16.00" fill="#c4f1f6"/><text x="2640.00" y="1672.80" font-size="12.4" fill="#23282d" textLength="31.38" lengthAdjust="spacingAndGlyphs">$0.00</text><rect x="2904.00" y="1658.00" width="2.00" height="19.00" fill="#d3d7dc" rx="1"/><rect x="2916.00" y="1659.00" width="3.00" height="16.00" fill="#c4f1f6"/><text x="2924.00" y="1672.80" font-size="12.4" fill="#23282d" textLength="31.38" lengthAdjust="spacingAndGlyphs">$0.00</text><text x="53.10" y="1693.80" font-size="12.4" fill="#23282d" text-anchor="end" textLength="7.44" lengthAdjust="spacingAndGlyphs">9</text><rect x="62.00" y="1679.00" width="2.00" height="19.00" fill="#c3c9cf" rx="1"/><text x="74.40" y="1693.80" font-size="12.4" fill="#23282d" textLength="546.6" lengthAdjust="spacingAndGlyphs">/subscriptions/20d6a917-99fa-4b1b-9b2e-a3d624e9dcf0/resourceGroups/HARNESS-QA-SET...</text><rect x="632.00" y="1679.00" width="2.00" height="19.00" fill="#d3d7dc" rx="1"/><rect x="644.00" y="1680.00" width="81.50" height="16.00" fill="#6fccd9"/><text x="730.50" y="1693.80" font-size="12.4" fill="#23282d" textLength="38.81" lengthAdjust="spacingAndGlyphs">$66.67</text><rect x="916.00" y="1679.00" width="2.00" height="19.00" fill="#d3d7dc" rx="1"/><rect x="928.00" y="1680.00" width="91.98" height="16.00" fill="#64c7d5"/><text x="1024.98" y="1693.80" font-size="12.4" fill="#23282d" textLength="38.81" lengthAdjust="spacingAndGlyphs">$75.24</text><rect x="1200.00" y="1679.00" width="2.00" height="19.00" fill="#d3d7dc" rx="1"/><rect x="1212.00" y="1680.00" width="3.00" height="16.00" fill="#c4f1f6"/><text x="1220.00" y="1693.80" font-size="12.4" fill="#23282d" textLength="31.38" lengthAdjust="spacingAndGlyphs">$0.00</text><rect x="1484.00" y="1679.00" width="2.00" height="19.00" fill="#d3d7dc" rx="1"/><rect x="1496.00" y="1680.00" width="3.00" height="16.00" fill="#c4f1f6"/><text x="1504.00" y="1693.80" font-size="12.4" fill="#23282d" textLength="31.38" lengthAdjust="spacingAndGlyphs">$0.00</text><rect x="1768.00" y="1679.00" width="2.00" height="19.00" fill="#d3d7dc" rx="1"/><rect x="1780.00" y="1680.00" width="3.00" height="16.00" fill="#c4f1f6"/><text x="1788.00" y="1693.80" font-size="12.4" fill="#23282d" textLength="31.38" lengthAdjust="spacingAndGlyphs">$0.00</text><rect x="2052.00" y="1679.00" width="2.00" height="19.00" fill="#d3d7dc" rx="1"/><rect x="2064.00" y="1680.00" width="3.00" height="16.00" fill="#c4f1f6"/><text x="2072.00" y="1693.80" font-size="12.4" fill="#23282d" textLength="31.38" lengthAdjust="spacingAndGlyphs">$0.00</text><rect x="2336.00" y="1679.00" width="2.00" height="19.00" fill="#d3d7dc" rx="1"/><rect x="2348.00" y="1680.00" width="3.00" height="16.00" fill="#c4f1f6"/><text x="2356.00" y="1693.80" font-size="12.4" fill="#23282d" textLength="31.38" lengthAdjust="spacingAndGlyphs">$0.00</text><rect x="2620.00" y="1679.00" width="2.00" height="19.00" fill="#d3d7dc" rx="1"/><rect x="2632.00" y="1680.00" width="3.00" height="16.00" fill="#c4f1f6"/><text x="2640.00" y="1693.80" font-size="12.4" fill="#23282d" textLength="31.38" lengthAdjust="spacingAndGlyphs">$0.00</text><rect x="2904.00" y="1679.00" width="2.00" height="19.00" fill="#d3d7dc" rx="1"/><rect x="2916.00" y="1680.00" width="3.00" height="16.00" fill="#c4f1f6"/><text x="2924.00" y="1693.80" font-size="12.4" fill="#23282d" textLength="31.38" lengthAdjust="spacingAndGlyphs">$0.00</text><text x="53.10" y="1714.80" font-size="12.4" fill="#23282d" text-anchor="end" textLength="12.77" lengthAdjust="spacingAndGlyphs">10</text><rect x="62.00" y="1700.00" width="2.00" height="19.00" fill="#c3c9cf" rx="1"/><text x="74.40" y="1714.80" font-size="12.4" fill="#23282d" textLength="535.53" lengthAdjust="spacingAndGlyphs">/subscriptions/20d6a917-99fa-4b1b-9b2e-a3d624e9dcf0/resourceGroups/QAVMSSRESOURC...</text><rect x="632.00" y="1700.00" width="2.00" height="19.00" fill="#d3d7dc" rx="1"/><rect x="644.00" y="1701.00" width="76.43" height="16.00" fill="#74cedb"/><text x="725.43" y="1714.80" font-size="12.4" fill="#23282d" textLength="38.81" lengthAdjust="spacingAndGlyphs">$62.52</text><rect x="916.00" y="1700.00" width="2.00" height="19.00" fill="#d3d7dc" rx="1"/><rect x="928.00" y="1701.00" width="30.95" height="16.00" fill="#a4e3eb"/><text x="963.95" y="1714.80" font-size="12.4" fill="#23282d" textLength="38.81" lengthAdjust="spacingAndGlyphs">$25.32</text><rect x="1200.00" y="1700.00" width="2.00" height="19.00" fill="#d3d7dc" rx="1"/><g stroke="#bcbfc3" stroke-width="1.15" fill="none"><ellipse cx="1223.70" cy="1711.20" rx="3.2" ry="3.3" transform="rotate(20 1223.70 1711.20)"/><line x1="1219.80" y1="1715.10" x2="1227.40" y2="1707.50"/></g><rect x="1484.00" y="1700.00" width="2.00" height="19.00" fill="#d3d7dc" rx="1"/><g stroke="#bcbfc3" stroke-width="1.15" fill="none"><ellipse cx="1507.70" cy="1711.20" rx="3.2" ry="3.3" transform="rotate(20 1507.70 1711.20)"/><line x1="1503.80" y1="1715.10" x2="1511.40" y2="1707.50"/></g><rect x="1768.00" y="1700.00" width="2.00" height="19.00" fill="#d3d7dc" rx="1"/><g stroke="#bcbfc3" stroke-width="1.15" fill="none"><ellipse cx="1791.70" cy="1711.20" rx="3.2" ry="3.3" transform="rotate(20 1791.70 1711.20)"/><line x1="1787.80" y1="1715.10" x2="1795.40" y2="1707.50"/></g><rect x="2052.00" y="1700.00" width="2.00" height="19.00" fill="#d3d7dc" rx="1"/><g stroke="#bcbfc3" stroke-width="1.15" fill="none"><ellipse cx="2075.70" cy="1711.20" rx="3.2" ry="3.3" transform="rotate(20 2075.70 1711.20)"/><line x1="2071.80" y1="1715.10" x2="2079.40" y2="1707.50"/></g><rect x="2336.00" y="1700.00" width="2.00" height="19.00" fill="#d3d7dc" rx="1"/><g stroke="#bcbfc3" stroke-width="1.15" fill="none"><ellipse cx="2359.70" cy="1711.20" rx="3.2" ry="3.3" transform="rotate(20 2359.70 1711.20)"/><line x1="2355.80" y1="1715.10" x2="2363.40" y2="1707.50"/></g><rect x="2620.00" y="1700.00" width="2.00" height="19.00" fill="#d3d7dc" rx="1"/><g stroke="#bcbfc3" stroke-width="1.15" fill="none"><ellipse cx="2643.70" cy="1711.20" rx="3.2" ry="3.3" transform="rotate(20 2643.70 1711.20)"/><line x1="2639.80" y1="1715.10" x2="2647.40" y2="1707.50"/></g><rect x="2904.00" y="1700.00" width="2.00" height="19.00" fill="#d3d7dc" rx="1"/><g stroke="#bcbfc3" stroke-width="1.15" fill="none"><ellipse cx="2927.70" cy="1711.20" rx="3.2" ry="3.3" transform="rotate(20 2927.70 1711.20)"/><line x1="2923.80" y1="1715.10" x2="2931.40" y2="1707.50"/></g><rect x="14" y="1640" width="3176" height="68" fill="url(#fade)"/><defs><linearGradient id="fade" x1="0" y1="0" x2="0" y2="1"><stop offset="0" stop-color="#000" stop-opacity="0"/><stop offset="0.45" stop-color="#000" stop-opacity="0.02"/><stop offset="0.8" stop-color="#000" stop-opacity="0.055"/><stop offset="1" stop-color="#000" stop-opacity="0.08"/></linearGradient></defs></svg></div></body></html>
